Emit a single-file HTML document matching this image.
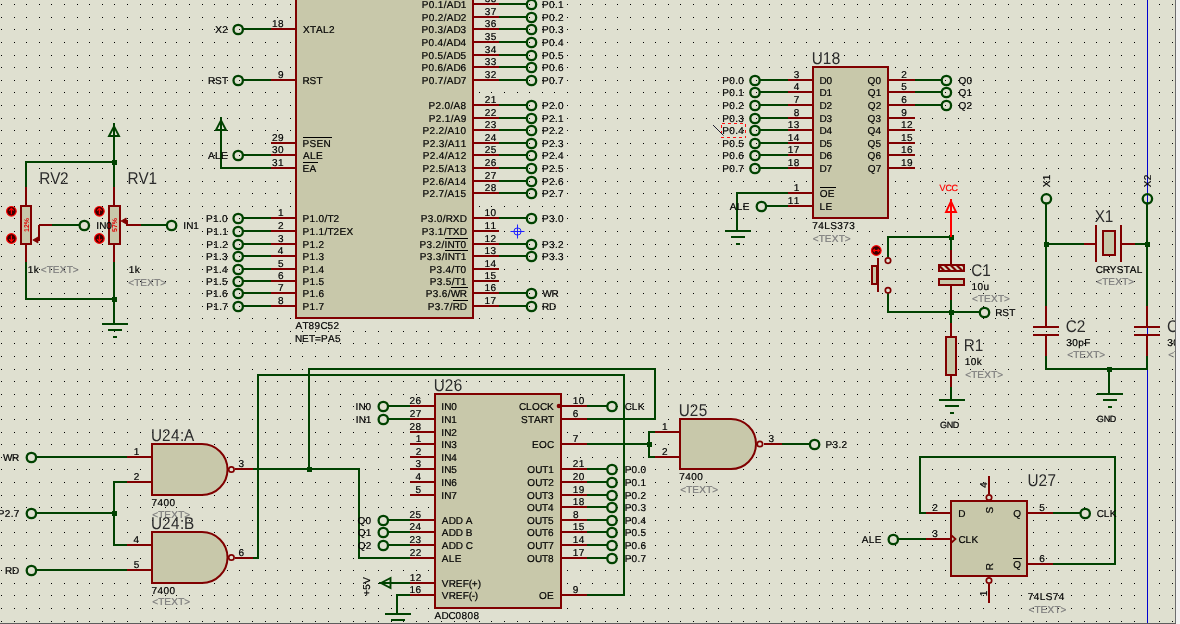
<!DOCTYPE html>
<html><head><meta charset="utf-8"><title>schematic</title>
<style>
html,body{margin:0;padding:0;background:#dfe0d0;overflow:hidden}
svg{display:block;font-family:"Liberation Sans", sans-serif;font-kerning:none;text-rendering:geometricPrecision}
</style></head><body>
<svg width="1180" height="624" viewBox="0 0 1180 624">
<rect x="0" y="0" width="1180" height="624" fill="#dfe0d0"/>
<g shape-rendering="crispEdges">
<path d="M1 4h1v1h-1zM14 4h1v1h-1zM26 4h1v1h-1zM39 4h1v1h-1zM51 4h1v1h-1zM64 4h1v1h-1zM77 4h1v1h-1zM89 4h1v1h-1zM102 4h1v1h-1zM114 4h1v1h-1zM127 4h1v1h-1zM140 4h1v1h-1zM152 4h1v1h-1zM165 4h1v1h-1zM176 4h1v1h-1zM189 4h1v1h-1zM202 4h1v1h-1zM214 4h1v1h-1zM227 4h1v1h-1zM239 4h1v1h-1zM252 4h1v1h-1zM265 4h1v1h-1zM277 4h1v1h-1zM290 4h1v1h-1zM302 4h1v1h-1zM315 4h1v1h-1zM328 4h1v1h-1zM340 4h1v1h-1zM353 4h1v1h-1zM365 4h1v1h-1zM378 4h1v1h-1zM391 4h1v1h-1zM403 4h1v1h-1zM416 4h1v1h-1zM428 4h1v1h-1zM441 4h1v1h-1zM454 4h1v1h-1zM466 4h1v1h-1zM479 4h1v1h-1zM491 4h1v1h-1zM504 4h1v1h-1zM517 4h1v1h-1zM529 4h1v1h-1zM542 4h1v1h-1zM554 4h1v1h-1zM567 4h1v1h-1zM580 4h1v1h-1zM592 4h1v1h-1zM605 4h1v1h-1zM617 4h1v1h-1zM630 4h1v1h-1zM643 4h1v1h-1zM655 4h1v1h-1zM668 4h1v1h-1zM680 4h1v1h-1zM693 4h1v1h-1zM706 4h1v1h-1zM718 4h1v1h-1zM731 4h1v1h-1zM743 4h1v1h-1zM756 4h1v1h-1zM769 4h1v1h-1zM781 4h1v1h-1zM794 4h1v1h-1zM806 4h1v1h-1zM819 4h1v1h-1zM832 4h1v1h-1zM844 4h1v1h-1zM857 4h1v1h-1zM869 4h1v1h-1zM882 4h1v1h-1zM895 4h1v1h-1zM907 4h1v1h-1zM920 4h1v1h-1zM932 4h1v1h-1zM945 4h1v1h-1zM958 4h1v1h-1zM970 4h1v1h-1zM983 4h1v1h-1zM995 4h1v1h-1zM1008 4h1v1h-1zM1021 4h1v1h-1zM1033 4h1v1h-1zM1046 4h1v1h-1zM1058 4h1v1h-1zM1071 4h1v1h-1zM1084 4h1v1h-1zM1096 4h1v1h-1zM1109 4h1v1h-1zM1121 4h1v1h-1zM1134 4h1v1h-1zM1147 4h1v1h-1zM1159 4h1v1h-1zM1172 4h1v1h-1zM1 17h1v1h-1zM14 17h1v1h-1zM26 17h1v1h-1zM39 17h1v1h-1zM51 17h1v1h-1zM64 17h1v1h-1zM77 17h1v1h-1zM89 17h1v1h-1zM102 17h1v1h-1zM114 17h1v1h-1zM127 17h1v1h-1zM140 17h1v1h-1zM152 17h1v1h-1zM165 17h1v1h-1zM176 17h1v1h-1zM189 17h1v1h-1zM202 17h1v1h-1zM214 17h1v1h-1zM227 17h1v1h-1zM239 17h1v1h-1zM252 17h1v1h-1zM265 17h1v1h-1zM277 17h1v1h-1zM290 17h1v1h-1zM302 17h1v1h-1zM315 17h1v1h-1zM328 17h1v1h-1zM340 17h1v1h-1zM353 17h1v1h-1zM365 17h1v1h-1zM378 17h1v1h-1zM391 17h1v1h-1zM403 17h1v1h-1zM416 17h1v1h-1zM428 17h1v1h-1zM441 17h1v1h-1zM454 17h1v1h-1zM466 17h1v1h-1zM479 17h1v1h-1zM491 17h1v1h-1zM504 17h1v1h-1zM517 17h1v1h-1zM529 17h1v1h-1zM542 17h1v1h-1zM554 17h1v1h-1zM567 17h1v1h-1zM580 17h1v1h-1zM592 17h1v1h-1zM605 17h1v1h-1zM617 17h1v1h-1zM630 17h1v1h-1zM643 17h1v1h-1zM655 17h1v1h-1zM668 17h1v1h-1zM680 17h1v1h-1zM693 17h1v1h-1zM706 17h1v1h-1zM718 17h1v1h-1zM731 17h1v1h-1zM743 17h1v1h-1zM756 17h1v1h-1zM769 17h1v1h-1zM781 17h1v1h-1zM794 17h1v1h-1zM806 17h1v1h-1zM819 17h1v1h-1zM832 17h1v1h-1zM844 17h1v1h-1zM857 17h1v1h-1zM869 17h1v1h-1zM882 17h1v1h-1zM895 17h1v1h-1zM907 17h1v1h-1zM920 17h1v1h-1zM932 17h1v1h-1zM945 17h1v1h-1zM958 17h1v1h-1zM970 17h1v1h-1zM983 17h1v1h-1zM995 17h1v1h-1zM1008 17h1v1h-1zM1021 17h1v1h-1zM1033 17h1v1h-1zM1046 17h1v1h-1zM1058 17h1v1h-1zM1071 17h1v1h-1zM1084 17h1v1h-1zM1096 17h1v1h-1zM1109 17h1v1h-1zM1121 17h1v1h-1zM1134 17h1v1h-1zM1147 17h1v1h-1zM1159 17h1v1h-1zM1172 17h1v1h-1zM1 29h1v1h-1zM14 29h1v1h-1zM26 29h1v1h-1zM39 29h1v1h-1zM51 29h1v1h-1zM64 29h1v1h-1zM77 29h1v1h-1zM89 29h1v1h-1zM102 29h1v1h-1zM114 29h1v1h-1zM127 29h1v1h-1zM140 29h1v1h-1zM152 29h1v1h-1zM165 29h1v1h-1zM176 29h1v1h-1zM189 29h1v1h-1zM202 29h1v1h-1zM214 29h1v1h-1zM227 29h1v1h-1zM239 29h1v1h-1zM252 29h1v1h-1zM265 29h1v1h-1zM277 29h1v1h-1zM290 29h1v1h-1zM302 29h1v1h-1zM315 29h1v1h-1zM328 29h1v1h-1zM340 29h1v1h-1zM353 29h1v1h-1zM365 29h1v1h-1zM378 29h1v1h-1zM391 29h1v1h-1zM403 29h1v1h-1zM416 29h1v1h-1zM428 29h1v1h-1zM441 29h1v1h-1zM454 29h1v1h-1zM466 29h1v1h-1zM479 29h1v1h-1zM491 29h1v1h-1zM504 29h1v1h-1zM517 29h1v1h-1zM529 29h1v1h-1zM542 29h1v1h-1zM554 29h1v1h-1zM567 29h1v1h-1zM580 29h1v1h-1zM592 29h1v1h-1zM605 29h1v1h-1zM617 29h1v1h-1zM630 29h1v1h-1zM643 29h1v1h-1zM655 29h1v1h-1zM668 29h1v1h-1zM680 29h1v1h-1zM693 29h1v1h-1zM706 29h1v1h-1zM718 29h1v1h-1zM731 29h1v1h-1zM743 29h1v1h-1zM756 29h1v1h-1zM769 29h1v1h-1zM781 29h1v1h-1zM794 29h1v1h-1zM806 29h1v1h-1zM819 29h1v1h-1zM832 29h1v1h-1zM844 29h1v1h-1zM857 29h1v1h-1zM869 29h1v1h-1zM882 29h1v1h-1zM895 29h1v1h-1zM907 29h1v1h-1zM920 29h1v1h-1zM932 29h1v1h-1zM945 29h1v1h-1zM958 29h1v1h-1zM970 29h1v1h-1zM983 29h1v1h-1zM995 29h1v1h-1zM1008 29h1v1h-1zM1021 29h1v1h-1zM1033 29h1v1h-1zM1046 29h1v1h-1zM1058 29h1v1h-1zM1071 29h1v1h-1zM1084 29h1v1h-1zM1096 29h1v1h-1zM1109 29h1v1h-1zM1121 29h1v1h-1zM1134 29h1v1h-1zM1147 29h1v1h-1zM1159 29h1v1h-1zM1172 29h1v1h-1zM1 42h1v1h-1zM14 42h1v1h-1zM26 42h1v1h-1zM39 42h1v1h-1zM51 42h1v1h-1zM64 42h1v1h-1zM77 42h1v1h-1zM89 42h1v1h-1zM102 42h1v1h-1zM114 42h1v1h-1zM127 42h1v1h-1zM140 42h1v1h-1zM152 42h1v1h-1zM165 42h1v1h-1zM176 42h1v1h-1zM189 42h1v1h-1zM202 42h1v1h-1zM214 42h1v1h-1zM227 42h1v1h-1zM239 42h1v1h-1zM252 42h1v1h-1zM265 42h1v1h-1zM277 42h1v1h-1zM290 42h1v1h-1zM302 42h1v1h-1zM315 42h1v1h-1zM328 42h1v1h-1zM340 42h1v1h-1zM353 42h1v1h-1zM365 42h1v1h-1zM378 42h1v1h-1zM391 42h1v1h-1zM403 42h1v1h-1zM416 42h1v1h-1zM428 42h1v1h-1zM441 42h1v1h-1zM454 42h1v1h-1zM466 42h1v1h-1zM479 42h1v1h-1zM491 42h1v1h-1zM504 42h1v1h-1zM517 42h1v1h-1zM529 42h1v1h-1zM542 42h1v1h-1zM554 42h1v1h-1zM567 42h1v1h-1zM580 42h1v1h-1zM592 42h1v1h-1zM605 42h1v1h-1zM617 42h1v1h-1zM630 42h1v1h-1zM643 42h1v1h-1zM655 42h1v1h-1zM668 42h1v1h-1zM680 42h1v1h-1zM693 42h1v1h-1zM706 42h1v1h-1zM718 42h1v1h-1zM731 42h1v1h-1zM743 42h1v1h-1zM756 42h1v1h-1zM769 42h1v1h-1zM781 42h1v1h-1zM794 42h1v1h-1zM806 42h1v1h-1zM819 42h1v1h-1zM832 42h1v1h-1zM844 42h1v1h-1zM857 42h1v1h-1zM869 42h1v1h-1zM882 42h1v1h-1zM895 42h1v1h-1zM907 42h1v1h-1zM920 42h1v1h-1zM932 42h1v1h-1zM945 42h1v1h-1zM958 42h1v1h-1zM970 42h1v1h-1zM983 42h1v1h-1zM995 42h1v1h-1zM1008 42h1v1h-1zM1021 42h1v1h-1zM1033 42h1v1h-1zM1046 42h1v1h-1zM1058 42h1v1h-1zM1071 42h1v1h-1zM1084 42h1v1h-1zM1096 42h1v1h-1zM1109 42h1v1h-1zM1121 42h1v1h-1zM1134 42h1v1h-1zM1147 42h1v1h-1zM1159 42h1v1h-1zM1172 42h1v1h-1zM1 55h1v1h-1zM14 55h1v1h-1zM26 55h1v1h-1zM39 55h1v1h-1zM51 55h1v1h-1zM64 55h1v1h-1zM77 55h1v1h-1zM89 55h1v1h-1zM102 55h1v1h-1zM114 55h1v1h-1zM127 55h1v1h-1zM140 55h1v1h-1zM152 55h1v1h-1zM165 55h1v1h-1zM176 55h1v1h-1zM189 55h1v1h-1zM202 55h1v1h-1zM214 55h1v1h-1zM227 55h1v1h-1zM239 55h1v1h-1zM252 55h1v1h-1zM265 55h1v1h-1zM277 55h1v1h-1zM290 55h1v1h-1zM302 55h1v1h-1zM315 55h1v1h-1zM328 55h1v1h-1zM340 55h1v1h-1zM353 55h1v1h-1zM365 55h1v1h-1zM378 55h1v1h-1zM391 55h1v1h-1zM403 55h1v1h-1zM416 55h1v1h-1zM428 55h1v1h-1zM441 55h1v1h-1zM454 55h1v1h-1zM466 55h1v1h-1zM479 55h1v1h-1zM491 55h1v1h-1zM504 55h1v1h-1zM517 55h1v1h-1zM529 55h1v1h-1zM542 55h1v1h-1zM554 55h1v1h-1zM567 55h1v1h-1zM580 55h1v1h-1zM592 55h1v1h-1zM605 55h1v1h-1zM617 55h1v1h-1zM630 55h1v1h-1zM643 55h1v1h-1zM655 55h1v1h-1zM668 55h1v1h-1zM680 55h1v1h-1zM693 55h1v1h-1zM706 55h1v1h-1zM718 55h1v1h-1zM731 55h1v1h-1zM743 55h1v1h-1zM756 55h1v1h-1zM769 55h1v1h-1zM781 55h1v1h-1zM794 55h1v1h-1zM806 55h1v1h-1zM819 55h1v1h-1zM832 55h1v1h-1zM844 55h1v1h-1zM857 55h1v1h-1zM869 55h1v1h-1zM882 55h1v1h-1zM895 55h1v1h-1zM907 55h1v1h-1zM920 55h1v1h-1zM932 55h1v1h-1zM945 55h1v1h-1zM958 55h1v1h-1zM970 55h1v1h-1zM983 55h1v1h-1zM995 55h1v1h-1zM1008 55h1v1h-1zM1021 55h1v1h-1zM1033 55h1v1h-1zM1046 55h1v1h-1zM1058 55h1v1h-1zM1071 55h1v1h-1zM1084 55h1v1h-1zM1096 55h1v1h-1zM1109 55h1v1h-1zM1121 55h1v1h-1zM1134 55h1v1h-1zM1147 55h1v1h-1zM1159 55h1v1h-1zM1172 55h1v1h-1zM1 67h1v1h-1zM14 67h1v1h-1zM26 67h1v1h-1zM39 67h1v1h-1zM51 67h1v1h-1zM64 67h1v1h-1zM77 67h1v1h-1zM89 67h1v1h-1zM102 67h1v1h-1zM114 67h1v1h-1zM127 67h1v1h-1zM140 67h1v1h-1zM152 67h1v1h-1zM165 67h1v1h-1zM176 67h1v1h-1zM189 67h1v1h-1zM202 67h1v1h-1zM214 67h1v1h-1zM227 67h1v1h-1zM239 67h1v1h-1zM252 67h1v1h-1zM265 67h1v1h-1zM277 67h1v1h-1zM290 67h1v1h-1zM302 67h1v1h-1zM315 67h1v1h-1zM328 67h1v1h-1zM340 67h1v1h-1zM353 67h1v1h-1zM365 67h1v1h-1zM378 67h1v1h-1zM391 67h1v1h-1zM403 67h1v1h-1zM416 67h1v1h-1zM428 67h1v1h-1zM441 67h1v1h-1zM454 67h1v1h-1zM466 67h1v1h-1zM479 67h1v1h-1zM491 67h1v1h-1zM504 67h1v1h-1zM517 67h1v1h-1zM529 67h1v1h-1zM542 67h1v1h-1zM554 67h1v1h-1zM567 67h1v1h-1zM580 67h1v1h-1zM592 67h1v1h-1zM605 67h1v1h-1zM617 67h1v1h-1zM630 67h1v1h-1zM643 67h1v1h-1zM655 67h1v1h-1zM668 67h1v1h-1zM680 67h1v1h-1zM693 67h1v1h-1zM706 67h1v1h-1zM718 67h1v1h-1zM731 67h1v1h-1zM743 67h1v1h-1zM756 67h1v1h-1zM769 67h1v1h-1zM781 67h1v1h-1zM794 67h1v1h-1zM806 67h1v1h-1zM819 67h1v1h-1zM832 67h1v1h-1zM844 67h1v1h-1zM857 67h1v1h-1zM869 67h1v1h-1zM882 67h1v1h-1zM895 67h1v1h-1zM907 67h1v1h-1zM920 67h1v1h-1zM932 67h1v1h-1zM945 67h1v1h-1zM958 67h1v1h-1zM970 67h1v1h-1zM983 67h1v1h-1zM995 67h1v1h-1zM1008 67h1v1h-1zM1021 67h1v1h-1zM1033 67h1v1h-1zM1046 67h1v1h-1zM1058 67h1v1h-1zM1071 67h1v1h-1zM1084 67h1v1h-1zM1096 67h1v1h-1zM1109 67h1v1h-1zM1121 67h1v1h-1zM1134 67h1v1h-1zM1147 67h1v1h-1zM1159 67h1v1h-1zM1172 67h1v1h-1zM1 80h1v1h-1zM14 80h1v1h-1zM26 80h1v1h-1zM39 80h1v1h-1zM51 80h1v1h-1zM64 80h1v1h-1zM77 80h1v1h-1zM89 80h1v1h-1zM102 80h1v1h-1zM114 80h1v1h-1zM127 80h1v1h-1zM140 80h1v1h-1zM152 80h1v1h-1zM165 80h1v1h-1zM176 80h1v1h-1zM189 80h1v1h-1zM202 80h1v1h-1zM214 80h1v1h-1zM227 80h1v1h-1zM239 80h1v1h-1zM252 80h1v1h-1zM265 80h1v1h-1zM277 80h1v1h-1zM290 80h1v1h-1zM302 80h1v1h-1zM315 80h1v1h-1zM328 80h1v1h-1zM340 80h1v1h-1zM353 80h1v1h-1zM365 80h1v1h-1zM378 80h1v1h-1zM391 80h1v1h-1zM403 80h1v1h-1zM416 80h1v1h-1zM428 80h1v1h-1zM441 80h1v1h-1zM454 80h1v1h-1zM466 80h1v1h-1zM479 80h1v1h-1zM491 80h1v1h-1zM504 80h1v1h-1zM517 80h1v1h-1zM529 80h1v1h-1zM542 80h1v1h-1zM554 80h1v1h-1zM567 80h1v1h-1zM580 80h1v1h-1zM592 80h1v1h-1zM605 80h1v1h-1zM617 80h1v1h-1zM630 80h1v1h-1zM643 80h1v1h-1zM655 80h1v1h-1zM668 80h1v1h-1zM680 80h1v1h-1zM693 80h1v1h-1zM706 80h1v1h-1zM718 80h1v1h-1zM731 80h1v1h-1zM743 80h1v1h-1zM756 80h1v1h-1zM769 80h1v1h-1zM781 80h1v1h-1zM794 80h1v1h-1zM806 80h1v1h-1zM819 80h1v1h-1zM832 80h1v1h-1zM844 80h1v1h-1zM857 80h1v1h-1zM869 80h1v1h-1zM882 80h1v1h-1zM895 80h1v1h-1zM907 80h1v1h-1zM920 80h1v1h-1zM932 80h1v1h-1zM945 80h1v1h-1zM958 80h1v1h-1zM970 80h1v1h-1zM983 80h1v1h-1zM995 80h1v1h-1zM1008 80h1v1h-1zM1021 80h1v1h-1zM1033 80h1v1h-1zM1046 80h1v1h-1zM1058 80h1v1h-1zM1071 80h1v1h-1zM1084 80h1v1h-1zM1096 80h1v1h-1zM1109 80h1v1h-1zM1121 80h1v1h-1zM1134 80h1v1h-1zM1147 80h1v1h-1zM1159 80h1v1h-1zM1172 80h1v1h-1zM1 92h1v1h-1zM14 92h1v1h-1zM26 92h1v1h-1zM39 92h1v1h-1zM51 92h1v1h-1zM64 92h1v1h-1zM77 92h1v1h-1zM89 92h1v1h-1zM102 92h1v1h-1zM114 92h1v1h-1zM127 92h1v1h-1zM140 92h1v1h-1zM152 92h1v1h-1zM165 92h1v1h-1zM176 92h1v1h-1zM189 92h1v1h-1zM202 92h1v1h-1zM214 92h1v1h-1zM227 92h1v1h-1zM239 92h1v1h-1zM252 92h1v1h-1zM265 92h1v1h-1zM277 92h1v1h-1zM290 92h1v1h-1zM302 92h1v1h-1zM315 92h1v1h-1zM328 92h1v1h-1zM340 92h1v1h-1zM353 92h1v1h-1zM365 92h1v1h-1zM378 92h1v1h-1zM391 92h1v1h-1zM403 92h1v1h-1zM416 92h1v1h-1zM428 92h1v1h-1zM441 92h1v1h-1zM454 92h1v1h-1zM466 92h1v1h-1zM479 92h1v1h-1zM491 92h1v1h-1zM504 92h1v1h-1zM517 92h1v1h-1zM529 92h1v1h-1zM542 92h1v1h-1zM554 92h1v1h-1zM567 92h1v1h-1zM580 92h1v1h-1zM592 92h1v1h-1zM605 92h1v1h-1zM617 92h1v1h-1zM630 92h1v1h-1zM643 92h1v1h-1zM655 92h1v1h-1zM668 92h1v1h-1zM680 92h1v1h-1zM693 92h1v1h-1zM706 92h1v1h-1zM718 92h1v1h-1zM731 92h1v1h-1zM743 92h1v1h-1zM756 92h1v1h-1zM769 92h1v1h-1zM781 92h1v1h-1zM794 92h1v1h-1zM806 92h1v1h-1zM819 92h1v1h-1zM832 92h1v1h-1zM844 92h1v1h-1zM857 92h1v1h-1zM869 92h1v1h-1zM882 92h1v1h-1zM895 92h1v1h-1zM907 92h1v1h-1zM920 92h1v1h-1zM932 92h1v1h-1zM945 92h1v1h-1zM958 92h1v1h-1zM970 92h1v1h-1zM983 92h1v1h-1zM995 92h1v1h-1zM1008 92h1v1h-1zM1021 92h1v1h-1zM1033 92h1v1h-1zM1046 92h1v1h-1zM1058 92h1v1h-1zM1071 92h1v1h-1zM1084 92h1v1h-1zM1096 92h1v1h-1zM1109 92h1v1h-1zM1121 92h1v1h-1zM1134 92h1v1h-1zM1147 92h1v1h-1zM1159 92h1v1h-1zM1172 92h1v1h-1zM1 105h1v1h-1zM14 105h1v1h-1zM26 105h1v1h-1zM39 105h1v1h-1zM51 105h1v1h-1zM64 105h1v1h-1zM77 105h1v1h-1zM89 105h1v1h-1zM102 105h1v1h-1zM114 105h1v1h-1zM127 105h1v1h-1zM140 105h1v1h-1zM152 105h1v1h-1zM165 105h1v1h-1zM176 105h1v1h-1zM189 105h1v1h-1zM202 105h1v1h-1zM214 105h1v1h-1zM227 105h1v1h-1zM239 105h1v1h-1zM252 105h1v1h-1zM265 105h1v1h-1zM277 105h1v1h-1zM290 105h1v1h-1zM302 105h1v1h-1zM315 105h1v1h-1zM328 105h1v1h-1zM340 105h1v1h-1zM353 105h1v1h-1zM365 105h1v1h-1zM378 105h1v1h-1zM391 105h1v1h-1zM403 105h1v1h-1zM416 105h1v1h-1zM428 105h1v1h-1zM441 105h1v1h-1zM454 105h1v1h-1zM466 105h1v1h-1zM479 105h1v1h-1zM491 105h1v1h-1zM504 105h1v1h-1zM517 105h1v1h-1zM529 105h1v1h-1zM542 105h1v1h-1zM554 105h1v1h-1zM567 105h1v1h-1zM580 105h1v1h-1zM592 105h1v1h-1zM605 105h1v1h-1zM617 105h1v1h-1zM630 105h1v1h-1zM643 105h1v1h-1zM655 105h1v1h-1zM668 105h1v1h-1zM680 105h1v1h-1zM693 105h1v1h-1zM706 105h1v1h-1zM718 105h1v1h-1zM731 105h1v1h-1zM743 105h1v1h-1zM756 105h1v1h-1zM769 105h1v1h-1zM781 105h1v1h-1zM794 105h1v1h-1zM806 105h1v1h-1zM819 105h1v1h-1zM832 105h1v1h-1zM844 105h1v1h-1zM857 105h1v1h-1zM869 105h1v1h-1zM882 105h1v1h-1zM895 105h1v1h-1zM907 105h1v1h-1zM920 105h1v1h-1zM932 105h1v1h-1zM945 105h1v1h-1zM958 105h1v1h-1zM970 105h1v1h-1zM983 105h1v1h-1zM995 105h1v1h-1zM1008 105h1v1h-1zM1021 105h1v1h-1zM1033 105h1v1h-1zM1046 105h1v1h-1zM1058 105h1v1h-1zM1071 105h1v1h-1zM1084 105h1v1h-1zM1096 105h1v1h-1zM1109 105h1v1h-1zM1121 105h1v1h-1zM1134 105h1v1h-1zM1147 105h1v1h-1zM1159 105h1v1h-1zM1172 105h1v1h-1zM1 118h1v1h-1zM14 118h1v1h-1zM26 118h1v1h-1zM39 118h1v1h-1zM51 118h1v1h-1zM64 118h1v1h-1zM77 118h1v1h-1zM89 118h1v1h-1zM102 118h1v1h-1zM114 118h1v1h-1zM127 118h1v1h-1zM140 118h1v1h-1zM152 118h1v1h-1zM165 118h1v1h-1zM176 118h1v1h-1zM189 118h1v1h-1zM202 118h1v1h-1zM214 118h1v1h-1zM227 118h1v1h-1zM239 118h1v1h-1zM252 118h1v1h-1zM265 118h1v1h-1zM277 118h1v1h-1zM290 118h1v1h-1zM302 118h1v1h-1zM315 118h1v1h-1zM328 118h1v1h-1zM340 118h1v1h-1zM353 118h1v1h-1zM365 118h1v1h-1zM378 118h1v1h-1zM391 118h1v1h-1zM403 118h1v1h-1zM416 118h1v1h-1zM428 118h1v1h-1zM441 118h1v1h-1zM454 118h1v1h-1zM466 118h1v1h-1zM479 118h1v1h-1zM491 118h1v1h-1zM504 118h1v1h-1zM517 118h1v1h-1zM529 118h1v1h-1zM542 118h1v1h-1zM554 118h1v1h-1zM567 118h1v1h-1zM580 118h1v1h-1zM592 118h1v1h-1zM605 118h1v1h-1zM617 118h1v1h-1zM630 118h1v1h-1zM643 118h1v1h-1zM655 118h1v1h-1zM668 118h1v1h-1zM680 118h1v1h-1zM693 118h1v1h-1zM706 118h1v1h-1zM718 118h1v1h-1zM731 118h1v1h-1zM743 118h1v1h-1zM756 118h1v1h-1zM769 118h1v1h-1zM781 118h1v1h-1zM794 118h1v1h-1zM806 118h1v1h-1zM819 118h1v1h-1zM832 118h1v1h-1zM844 118h1v1h-1zM857 118h1v1h-1zM869 118h1v1h-1zM882 118h1v1h-1zM895 118h1v1h-1zM907 118h1v1h-1zM920 118h1v1h-1zM932 118h1v1h-1zM945 118h1v1h-1zM958 118h1v1h-1zM970 118h1v1h-1zM983 118h1v1h-1zM995 118h1v1h-1zM1008 118h1v1h-1zM1021 118h1v1h-1zM1033 118h1v1h-1zM1046 118h1v1h-1zM1058 118h1v1h-1zM1071 118h1v1h-1zM1084 118h1v1h-1zM1096 118h1v1h-1zM1109 118h1v1h-1zM1121 118h1v1h-1zM1134 118h1v1h-1zM1147 118h1v1h-1zM1159 118h1v1h-1zM1172 118h1v1h-1zM1 130h1v1h-1zM14 130h1v1h-1zM26 130h1v1h-1zM39 130h1v1h-1zM51 130h1v1h-1zM64 130h1v1h-1zM77 130h1v1h-1zM89 130h1v1h-1zM102 130h1v1h-1zM114 130h1v1h-1zM127 130h1v1h-1zM140 130h1v1h-1zM152 130h1v1h-1zM165 130h1v1h-1zM176 130h1v1h-1zM189 130h1v1h-1zM202 130h1v1h-1zM214 130h1v1h-1zM227 130h1v1h-1zM239 130h1v1h-1zM252 130h1v1h-1zM265 130h1v1h-1zM277 130h1v1h-1zM290 130h1v1h-1zM302 130h1v1h-1zM315 130h1v1h-1zM328 130h1v1h-1zM340 130h1v1h-1zM353 130h1v1h-1zM365 130h1v1h-1zM378 130h1v1h-1zM391 130h1v1h-1zM403 130h1v1h-1zM416 130h1v1h-1zM428 130h1v1h-1zM441 130h1v1h-1zM454 130h1v1h-1zM466 130h1v1h-1zM479 130h1v1h-1zM491 130h1v1h-1zM504 130h1v1h-1zM517 130h1v1h-1zM529 130h1v1h-1zM542 130h1v1h-1zM554 130h1v1h-1zM567 130h1v1h-1zM580 130h1v1h-1zM592 130h1v1h-1zM605 130h1v1h-1zM617 130h1v1h-1zM630 130h1v1h-1zM643 130h1v1h-1zM655 130h1v1h-1zM668 130h1v1h-1zM680 130h1v1h-1zM693 130h1v1h-1zM706 130h1v1h-1zM718 130h1v1h-1zM731 130h1v1h-1zM743 130h1v1h-1zM756 130h1v1h-1zM769 130h1v1h-1zM781 130h1v1h-1zM794 130h1v1h-1zM806 130h1v1h-1zM819 130h1v1h-1zM832 130h1v1h-1zM844 130h1v1h-1zM857 130h1v1h-1zM869 130h1v1h-1zM882 130h1v1h-1zM895 130h1v1h-1zM907 130h1v1h-1zM920 130h1v1h-1zM932 130h1v1h-1zM945 130h1v1h-1zM958 130h1v1h-1zM970 130h1v1h-1zM983 130h1v1h-1zM995 130h1v1h-1zM1008 130h1v1h-1zM1021 130h1v1h-1zM1033 130h1v1h-1zM1046 130h1v1h-1zM1058 130h1v1h-1zM1071 130h1v1h-1zM1084 130h1v1h-1zM1096 130h1v1h-1zM1109 130h1v1h-1zM1121 130h1v1h-1zM1134 130h1v1h-1zM1147 130h1v1h-1zM1159 130h1v1h-1zM1172 130h1v1h-1zM1 143h1v1h-1zM14 143h1v1h-1zM26 143h1v1h-1zM39 143h1v1h-1zM51 143h1v1h-1zM64 143h1v1h-1zM77 143h1v1h-1zM89 143h1v1h-1zM102 143h1v1h-1zM114 143h1v1h-1zM127 143h1v1h-1zM140 143h1v1h-1zM152 143h1v1h-1zM165 143h1v1h-1zM176 143h1v1h-1zM189 143h1v1h-1zM202 143h1v1h-1zM214 143h1v1h-1zM227 143h1v1h-1zM239 143h1v1h-1zM252 143h1v1h-1zM265 143h1v1h-1zM277 143h1v1h-1zM290 143h1v1h-1zM302 143h1v1h-1zM315 143h1v1h-1zM328 143h1v1h-1zM340 143h1v1h-1zM353 143h1v1h-1zM365 143h1v1h-1zM378 143h1v1h-1zM391 143h1v1h-1zM403 143h1v1h-1zM416 143h1v1h-1zM428 143h1v1h-1zM441 143h1v1h-1zM454 143h1v1h-1zM466 143h1v1h-1zM479 143h1v1h-1zM491 143h1v1h-1zM504 143h1v1h-1zM517 143h1v1h-1zM529 143h1v1h-1zM542 143h1v1h-1zM554 143h1v1h-1zM567 143h1v1h-1zM580 143h1v1h-1zM592 143h1v1h-1zM605 143h1v1h-1zM617 143h1v1h-1zM630 143h1v1h-1zM643 143h1v1h-1zM655 143h1v1h-1zM668 143h1v1h-1zM680 143h1v1h-1zM693 143h1v1h-1zM706 143h1v1h-1zM718 143h1v1h-1zM731 143h1v1h-1zM743 143h1v1h-1zM756 143h1v1h-1zM769 143h1v1h-1zM781 143h1v1h-1zM794 143h1v1h-1zM806 143h1v1h-1zM819 143h1v1h-1zM832 143h1v1h-1zM844 143h1v1h-1zM857 143h1v1h-1zM869 143h1v1h-1zM882 143h1v1h-1zM895 143h1v1h-1zM907 143h1v1h-1zM920 143h1v1h-1zM932 143h1v1h-1zM945 143h1v1h-1zM958 143h1v1h-1zM970 143h1v1h-1zM983 143h1v1h-1zM995 143h1v1h-1zM1008 143h1v1h-1zM1021 143h1v1h-1zM1033 143h1v1h-1zM1046 143h1v1h-1zM1058 143h1v1h-1zM1071 143h1v1h-1zM1084 143h1v1h-1zM1096 143h1v1h-1zM1109 143h1v1h-1zM1121 143h1v1h-1zM1134 143h1v1h-1zM1147 143h1v1h-1zM1159 143h1v1h-1zM1172 143h1v1h-1zM1 155h1v1h-1zM14 155h1v1h-1zM26 155h1v1h-1zM39 155h1v1h-1zM51 155h1v1h-1zM64 155h1v1h-1zM77 155h1v1h-1zM89 155h1v1h-1zM102 155h1v1h-1zM114 155h1v1h-1zM127 155h1v1h-1zM140 155h1v1h-1zM152 155h1v1h-1zM165 155h1v1h-1zM176 155h1v1h-1zM189 155h1v1h-1zM202 155h1v1h-1zM214 155h1v1h-1zM227 155h1v1h-1zM239 155h1v1h-1zM252 155h1v1h-1zM265 155h1v1h-1zM277 155h1v1h-1zM290 155h1v1h-1zM302 155h1v1h-1zM315 155h1v1h-1zM328 155h1v1h-1zM340 155h1v1h-1zM353 155h1v1h-1zM365 155h1v1h-1zM378 155h1v1h-1zM391 155h1v1h-1zM403 155h1v1h-1zM416 155h1v1h-1zM428 155h1v1h-1zM441 155h1v1h-1zM454 155h1v1h-1zM466 155h1v1h-1zM479 155h1v1h-1zM491 155h1v1h-1zM504 155h1v1h-1zM517 155h1v1h-1zM529 155h1v1h-1zM542 155h1v1h-1zM554 155h1v1h-1zM567 155h1v1h-1zM580 155h1v1h-1zM592 155h1v1h-1zM605 155h1v1h-1zM617 155h1v1h-1zM630 155h1v1h-1zM643 155h1v1h-1zM655 155h1v1h-1zM668 155h1v1h-1zM680 155h1v1h-1zM693 155h1v1h-1zM706 155h1v1h-1zM718 155h1v1h-1zM731 155h1v1h-1zM743 155h1v1h-1zM756 155h1v1h-1zM769 155h1v1h-1zM781 155h1v1h-1zM794 155h1v1h-1zM806 155h1v1h-1zM819 155h1v1h-1zM832 155h1v1h-1zM844 155h1v1h-1zM857 155h1v1h-1zM869 155h1v1h-1zM882 155h1v1h-1zM895 155h1v1h-1zM907 155h1v1h-1zM920 155h1v1h-1zM932 155h1v1h-1zM945 155h1v1h-1zM958 155h1v1h-1zM970 155h1v1h-1zM983 155h1v1h-1zM995 155h1v1h-1zM1008 155h1v1h-1zM1021 155h1v1h-1zM1033 155h1v1h-1zM1046 155h1v1h-1zM1058 155h1v1h-1zM1071 155h1v1h-1zM1084 155h1v1h-1zM1096 155h1v1h-1zM1109 155h1v1h-1zM1121 155h1v1h-1zM1134 155h1v1h-1zM1147 155h1v1h-1zM1159 155h1v1h-1zM1172 155h1v1h-1zM1 168h1v1h-1zM14 168h1v1h-1zM26 168h1v1h-1zM39 168h1v1h-1zM51 168h1v1h-1zM64 168h1v1h-1zM77 168h1v1h-1zM89 168h1v1h-1zM102 168h1v1h-1zM114 168h1v1h-1zM127 168h1v1h-1zM140 168h1v1h-1zM152 168h1v1h-1zM165 168h1v1h-1zM176 168h1v1h-1zM189 168h1v1h-1zM202 168h1v1h-1zM214 168h1v1h-1zM227 168h1v1h-1zM239 168h1v1h-1zM252 168h1v1h-1zM265 168h1v1h-1zM277 168h1v1h-1zM290 168h1v1h-1zM302 168h1v1h-1zM315 168h1v1h-1zM328 168h1v1h-1zM340 168h1v1h-1zM353 168h1v1h-1zM365 168h1v1h-1zM378 168h1v1h-1zM391 168h1v1h-1zM403 168h1v1h-1zM416 168h1v1h-1zM428 168h1v1h-1zM441 168h1v1h-1zM454 168h1v1h-1zM466 168h1v1h-1zM479 168h1v1h-1zM491 168h1v1h-1zM504 168h1v1h-1zM517 168h1v1h-1zM529 168h1v1h-1zM542 168h1v1h-1zM554 168h1v1h-1zM567 168h1v1h-1zM580 168h1v1h-1zM592 168h1v1h-1zM605 168h1v1h-1zM617 168h1v1h-1zM630 168h1v1h-1zM643 168h1v1h-1zM655 168h1v1h-1zM668 168h1v1h-1zM680 168h1v1h-1zM693 168h1v1h-1zM706 168h1v1h-1zM718 168h1v1h-1zM731 168h1v1h-1zM743 168h1v1h-1zM756 168h1v1h-1zM769 168h1v1h-1zM781 168h1v1h-1zM794 168h1v1h-1zM806 168h1v1h-1zM819 168h1v1h-1zM832 168h1v1h-1zM844 168h1v1h-1zM857 168h1v1h-1zM869 168h1v1h-1zM882 168h1v1h-1zM895 168h1v1h-1zM907 168h1v1h-1zM920 168h1v1h-1zM932 168h1v1h-1zM945 168h1v1h-1zM958 168h1v1h-1zM970 168h1v1h-1zM983 168h1v1h-1zM995 168h1v1h-1zM1008 168h1v1h-1zM1021 168h1v1h-1zM1033 168h1v1h-1zM1046 168h1v1h-1zM1058 168h1v1h-1zM1071 168h1v1h-1zM1084 168h1v1h-1zM1096 168h1v1h-1zM1109 168h1v1h-1zM1121 168h1v1h-1zM1134 168h1v1h-1zM1147 168h1v1h-1zM1159 168h1v1h-1zM1172 168h1v1h-1zM1 181h1v1h-1zM14 181h1v1h-1zM26 181h1v1h-1zM39 181h1v1h-1zM51 181h1v1h-1zM64 181h1v1h-1zM77 181h1v1h-1zM89 181h1v1h-1zM102 181h1v1h-1zM114 181h1v1h-1zM127 181h1v1h-1zM140 181h1v1h-1zM152 181h1v1h-1zM165 181h1v1h-1zM176 181h1v1h-1zM189 181h1v1h-1zM202 181h1v1h-1zM214 181h1v1h-1zM227 181h1v1h-1zM239 181h1v1h-1zM252 181h1v1h-1zM265 181h1v1h-1zM277 181h1v1h-1zM290 181h1v1h-1zM302 181h1v1h-1zM315 181h1v1h-1zM328 181h1v1h-1zM340 181h1v1h-1zM353 181h1v1h-1zM365 181h1v1h-1zM378 181h1v1h-1zM391 181h1v1h-1zM403 181h1v1h-1zM416 181h1v1h-1zM428 181h1v1h-1zM441 181h1v1h-1zM454 181h1v1h-1zM466 181h1v1h-1zM479 181h1v1h-1zM491 181h1v1h-1zM504 181h1v1h-1zM517 181h1v1h-1zM529 181h1v1h-1zM542 181h1v1h-1zM554 181h1v1h-1zM567 181h1v1h-1zM580 181h1v1h-1zM592 181h1v1h-1zM605 181h1v1h-1zM617 181h1v1h-1zM630 181h1v1h-1zM643 181h1v1h-1zM655 181h1v1h-1zM668 181h1v1h-1zM680 181h1v1h-1zM693 181h1v1h-1zM706 181h1v1h-1zM718 181h1v1h-1zM731 181h1v1h-1zM743 181h1v1h-1zM756 181h1v1h-1zM769 181h1v1h-1zM781 181h1v1h-1zM794 181h1v1h-1zM806 181h1v1h-1zM819 181h1v1h-1zM832 181h1v1h-1zM844 181h1v1h-1zM857 181h1v1h-1zM869 181h1v1h-1zM882 181h1v1h-1zM895 181h1v1h-1zM907 181h1v1h-1zM920 181h1v1h-1zM932 181h1v1h-1zM945 181h1v1h-1zM958 181h1v1h-1zM970 181h1v1h-1zM983 181h1v1h-1zM995 181h1v1h-1zM1008 181h1v1h-1zM1021 181h1v1h-1zM1033 181h1v1h-1zM1046 181h1v1h-1zM1058 181h1v1h-1zM1071 181h1v1h-1zM1084 181h1v1h-1zM1096 181h1v1h-1zM1109 181h1v1h-1zM1121 181h1v1h-1zM1134 181h1v1h-1zM1147 181h1v1h-1zM1159 181h1v1h-1zM1172 181h1v1h-1zM1 193h1v1h-1zM14 193h1v1h-1zM26 193h1v1h-1zM39 193h1v1h-1zM51 193h1v1h-1zM64 193h1v1h-1zM77 193h1v1h-1zM89 193h1v1h-1zM102 193h1v1h-1zM114 193h1v1h-1zM127 193h1v1h-1zM140 193h1v1h-1zM152 193h1v1h-1zM165 193h1v1h-1zM176 193h1v1h-1zM189 193h1v1h-1zM202 193h1v1h-1zM214 193h1v1h-1zM227 193h1v1h-1zM239 193h1v1h-1zM252 193h1v1h-1zM265 193h1v1h-1zM277 193h1v1h-1zM290 193h1v1h-1zM302 193h1v1h-1zM315 193h1v1h-1zM328 193h1v1h-1zM340 193h1v1h-1zM353 193h1v1h-1zM365 193h1v1h-1zM378 193h1v1h-1zM391 193h1v1h-1zM403 193h1v1h-1zM416 193h1v1h-1zM428 193h1v1h-1zM441 193h1v1h-1zM454 193h1v1h-1zM466 193h1v1h-1zM479 193h1v1h-1zM491 193h1v1h-1zM504 193h1v1h-1zM517 193h1v1h-1zM529 193h1v1h-1zM542 193h1v1h-1zM554 193h1v1h-1zM567 193h1v1h-1zM580 193h1v1h-1zM592 193h1v1h-1zM605 193h1v1h-1zM617 193h1v1h-1zM630 193h1v1h-1zM643 193h1v1h-1zM655 193h1v1h-1zM668 193h1v1h-1zM680 193h1v1h-1zM693 193h1v1h-1zM706 193h1v1h-1zM718 193h1v1h-1zM731 193h1v1h-1zM743 193h1v1h-1zM756 193h1v1h-1zM769 193h1v1h-1zM781 193h1v1h-1zM794 193h1v1h-1zM806 193h1v1h-1zM819 193h1v1h-1zM832 193h1v1h-1zM844 193h1v1h-1zM857 193h1v1h-1zM869 193h1v1h-1zM882 193h1v1h-1zM895 193h1v1h-1zM907 193h1v1h-1zM920 193h1v1h-1zM932 193h1v1h-1zM945 193h1v1h-1zM958 193h1v1h-1zM970 193h1v1h-1zM983 193h1v1h-1zM995 193h1v1h-1zM1008 193h1v1h-1zM1021 193h1v1h-1zM1033 193h1v1h-1zM1046 193h1v1h-1zM1058 193h1v1h-1zM1071 193h1v1h-1zM1084 193h1v1h-1zM1096 193h1v1h-1zM1109 193h1v1h-1zM1121 193h1v1h-1zM1134 193h1v1h-1zM1147 193h1v1h-1zM1159 193h1v1h-1zM1172 193h1v1h-1zM1 206h1v1h-1zM14 206h1v1h-1zM26 206h1v1h-1zM39 206h1v1h-1zM51 206h1v1h-1zM64 206h1v1h-1zM77 206h1v1h-1zM89 206h1v1h-1zM102 206h1v1h-1zM114 206h1v1h-1zM127 206h1v1h-1zM140 206h1v1h-1zM152 206h1v1h-1zM165 206h1v1h-1zM176 206h1v1h-1zM189 206h1v1h-1zM202 206h1v1h-1zM214 206h1v1h-1zM227 206h1v1h-1zM239 206h1v1h-1zM252 206h1v1h-1zM265 206h1v1h-1zM277 206h1v1h-1zM290 206h1v1h-1zM302 206h1v1h-1zM315 206h1v1h-1zM328 206h1v1h-1zM340 206h1v1h-1zM353 206h1v1h-1zM365 206h1v1h-1zM378 206h1v1h-1zM391 206h1v1h-1zM403 206h1v1h-1zM416 206h1v1h-1zM428 206h1v1h-1zM441 206h1v1h-1zM454 206h1v1h-1zM466 206h1v1h-1zM479 206h1v1h-1zM491 206h1v1h-1zM504 206h1v1h-1zM517 206h1v1h-1zM529 206h1v1h-1zM542 206h1v1h-1zM554 206h1v1h-1zM567 206h1v1h-1zM580 206h1v1h-1zM592 206h1v1h-1zM605 206h1v1h-1zM617 206h1v1h-1zM630 206h1v1h-1zM643 206h1v1h-1zM655 206h1v1h-1zM668 206h1v1h-1zM680 206h1v1h-1zM693 206h1v1h-1zM706 206h1v1h-1zM718 206h1v1h-1zM731 206h1v1h-1zM743 206h1v1h-1zM756 206h1v1h-1zM769 206h1v1h-1zM781 206h1v1h-1zM794 206h1v1h-1zM806 206h1v1h-1zM819 206h1v1h-1zM832 206h1v1h-1zM844 206h1v1h-1zM857 206h1v1h-1zM869 206h1v1h-1zM882 206h1v1h-1zM895 206h1v1h-1zM907 206h1v1h-1zM920 206h1v1h-1zM932 206h1v1h-1zM945 206h1v1h-1zM958 206h1v1h-1zM970 206h1v1h-1zM983 206h1v1h-1zM995 206h1v1h-1zM1008 206h1v1h-1zM1021 206h1v1h-1zM1033 206h1v1h-1zM1046 206h1v1h-1zM1058 206h1v1h-1zM1071 206h1v1h-1zM1084 206h1v1h-1zM1096 206h1v1h-1zM1109 206h1v1h-1zM1121 206h1v1h-1zM1134 206h1v1h-1zM1147 206h1v1h-1zM1159 206h1v1h-1zM1172 206h1v1h-1zM1 218h1v1h-1zM14 218h1v1h-1zM26 218h1v1h-1zM39 218h1v1h-1zM51 218h1v1h-1zM64 218h1v1h-1zM77 218h1v1h-1zM89 218h1v1h-1zM102 218h1v1h-1zM114 218h1v1h-1zM127 218h1v1h-1zM140 218h1v1h-1zM152 218h1v1h-1zM165 218h1v1h-1zM176 218h1v1h-1zM189 218h1v1h-1zM202 218h1v1h-1zM214 218h1v1h-1zM227 218h1v1h-1zM239 218h1v1h-1zM252 218h1v1h-1zM265 218h1v1h-1zM277 218h1v1h-1zM290 218h1v1h-1zM302 218h1v1h-1zM315 218h1v1h-1zM328 218h1v1h-1zM340 218h1v1h-1zM353 218h1v1h-1zM365 218h1v1h-1zM378 218h1v1h-1zM391 218h1v1h-1zM403 218h1v1h-1zM416 218h1v1h-1zM428 218h1v1h-1zM441 218h1v1h-1zM454 218h1v1h-1zM466 218h1v1h-1zM479 218h1v1h-1zM491 218h1v1h-1zM504 218h1v1h-1zM517 218h1v1h-1zM529 218h1v1h-1zM542 218h1v1h-1zM554 218h1v1h-1zM567 218h1v1h-1zM580 218h1v1h-1zM592 218h1v1h-1zM605 218h1v1h-1zM617 218h1v1h-1zM630 218h1v1h-1zM643 218h1v1h-1zM655 218h1v1h-1zM668 218h1v1h-1zM680 218h1v1h-1zM693 218h1v1h-1zM706 218h1v1h-1zM718 218h1v1h-1zM731 218h1v1h-1zM743 218h1v1h-1zM756 218h1v1h-1zM769 218h1v1h-1zM781 218h1v1h-1zM794 218h1v1h-1zM806 218h1v1h-1zM819 218h1v1h-1zM832 218h1v1h-1zM844 218h1v1h-1zM857 218h1v1h-1zM869 218h1v1h-1zM882 218h1v1h-1zM895 218h1v1h-1zM907 218h1v1h-1zM920 218h1v1h-1zM932 218h1v1h-1zM945 218h1v1h-1zM958 218h1v1h-1zM970 218h1v1h-1zM983 218h1v1h-1zM995 218h1v1h-1zM1008 218h1v1h-1zM1021 218h1v1h-1zM1033 218h1v1h-1zM1046 218h1v1h-1zM1058 218h1v1h-1zM1071 218h1v1h-1zM1084 218h1v1h-1zM1096 218h1v1h-1zM1109 218h1v1h-1zM1121 218h1v1h-1zM1134 218h1v1h-1zM1147 218h1v1h-1zM1159 218h1v1h-1zM1172 218h1v1h-1zM1 231h1v1h-1zM14 231h1v1h-1zM26 231h1v1h-1zM39 231h1v1h-1zM51 231h1v1h-1zM64 231h1v1h-1zM77 231h1v1h-1zM89 231h1v1h-1zM102 231h1v1h-1zM114 231h1v1h-1zM127 231h1v1h-1zM140 231h1v1h-1zM152 231h1v1h-1zM165 231h1v1h-1zM176 231h1v1h-1zM189 231h1v1h-1zM202 231h1v1h-1zM214 231h1v1h-1zM227 231h1v1h-1zM239 231h1v1h-1zM252 231h1v1h-1zM265 231h1v1h-1zM277 231h1v1h-1zM290 231h1v1h-1zM302 231h1v1h-1zM315 231h1v1h-1zM328 231h1v1h-1zM340 231h1v1h-1zM353 231h1v1h-1zM365 231h1v1h-1zM378 231h1v1h-1zM391 231h1v1h-1zM403 231h1v1h-1zM416 231h1v1h-1zM428 231h1v1h-1zM441 231h1v1h-1zM454 231h1v1h-1zM466 231h1v1h-1zM479 231h1v1h-1zM491 231h1v1h-1zM504 231h1v1h-1zM517 231h1v1h-1zM529 231h1v1h-1zM542 231h1v1h-1zM554 231h1v1h-1zM567 231h1v1h-1zM580 231h1v1h-1zM592 231h1v1h-1zM605 231h1v1h-1zM617 231h1v1h-1zM630 231h1v1h-1zM643 231h1v1h-1zM655 231h1v1h-1zM668 231h1v1h-1zM680 231h1v1h-1zM693 231h1v1h-1zM706 231h1v1h-1zM718 231h1v1h-1zM731 231h1v1h-1zM743 231h1v1h-1zM756 231h1v1h-1zM769 231h1v1h-1zM781 231h1v1h-1zM794 231h1v1h-1zM806 231h1v1h-1zM819 231h1v1h-1zM832 231h1v1h-1zM844 231h1v1h-1zM857 231h1v1h-1zM869 231h1v1h-1zM882 231h1v1h-1zM895 231h1v1h-1zM907 231h1v1h-1zM920 231h1v1h-1zM932 231h1v1h-1zM945 231h1v1h-1zM958 231h1v1h-1zM970 231h1v1h-1zM983 231h1v1h-1zM995 231h1v1h-1zM1008 231h1v1h-1zM1021 231h1v1h-1zM1033 231h1v1h-1zM1046 231h1v1h-1zM1058 231h1v1h-1zM1071 231h1v1h-1zM1084 231h1v1h-1zM1096 231h1v1h-1zM1109 231h1v1h-1zM1121 231h1v1h-1zM1134 231h1v1h-1zM1147 231h1v1h-1zM1159 231h1v1h-1zM1172 231h1v1h-1zM1 244h1v1h-1zM14 244h1v1h-1zM26 244h1v1h-1zM39 244h1v1h-1zM51 244h1v1h-1zM64 244h1v1h-1zM77 244h1v1h-1zM89 244h1v1h-1zM102 244h1v1h-1zM114 244h1v1h-1zM127 244h1v1h-1zM140 244h1v1h-1zM152 244h1v1h-1zM165 244h1v1h-1zM176 244h1v1h-1zM189 244h1v1h-1zM202 244h1v1h-1zM214 244h1v1h-1zM227 244h1v1h-1zM239 244h1v1h-1zM252 244h1v1h-1zM265 244h1v1h-1zM277 244h1v1h-1zM290 244h1v1h-1zM302 244h1v1h-1zM315 244h1v1h-1zM328 244h1v1h-1zM340 244h1v1h-1zM353 244h1v1h-1zM365 244h1v1h-1zM378 244h1v1h-1zM391 244h1v1h-1zM403 244h1v1h-1zM416 244h1v1h-1zM428 244h1v1h-1zM441 244h1v1h-1zM454 244h1v1h-1zM466 244h1v1h-1zM479 244h1v1h-1zM491 244h1v1h-1zM504 244h1v1h-1zM517 244h1v1h-1zM529 244h1v1h-1zM542 244h1v1h-1zM554 244h1v1h-1zM567 244h1v1h-1zM580 244h1v1h-1zM592 244h1v1h-1zM605 244h1v1h-1zM617 244h1v1h-1zM630 244h1v1h-1zM643 244h1v1h-1zM655 244h1v1h-1zM668 244h1v1h-1zM680 244h1v1h-1zM693 244h1v1h-1zM706 244h1v1h-1zM718 244h1v1h-1zM731 244h1v1h-1zM743 244h1v1h-1zM756 244h1v1h-1zM769 244h1v1h-1zM781 244h1v1h-1zM794 244h1v1h-1zM806 244h1v1h-1zM819 244h1v1h-1zM832 244h1v1h-1zM844 244h1v1h-1zM857 244h1v1h-1zM869 244h1v1h-1zM882 244h1v1h-1zM895 244h1v1h-1zM907 244h1v1h-1zM920 244h1v1h-1zM932 244h1v1h-1zM945 244h1v1h-1zM958 244h1v1h-1zM970 244h1v1h-1zM983 244h1v1h-1zM995 244h1v1h-1zM1008 244h1v1h-1zM1021 244h1v1h-1zM1033 244h1v1h-1zM1046 244h1v1h-1zM1058 244h1v1h-1zM1071 244h1v1h-1zM1084 244h1v1h-1zM1096 244h1v1h-1zM1109 244h1v1h-1zM1121 244h1v1h-1zM1134 244h1v1h-1zM1147 244h1v1h-1zM1159 244h1v1h-1zM1172 244h1v1h-1zM1 256h1v1h-1zM14 256h1v1h-1zM26 256h1v1h-1zM39 256h1v1h-1zM51 256h1v1h-1zM64 256h1v1h-1zM77 256h1v1h-1zM89 256h1v1h-1zM102 256h1v1h-1zM114 256h1v1h-1zM127 256h1v1h-1zM140 256h1v1h-1zM152 256h1v1h-1zM165 256h1v1h-1zM176 256h1v1h-1zM189 256h1v1h-1zM202 256h1v1h-1zM214 256h1v1h-1zM227 256h1v1h-1zM239 256h1v1h-1zM252 256h1v1h-1zM265 256h1v1h-1zM277 256h1v1h-1zM290 256h1v1h-1zM302 256h1v1h-1zM315 256h1v1h-1zM328 256h1v1h-1zM340 256h1v1h-1zM353 256h1v1h-1zM365 256h1v1h-1zM378 256h1v1h-1zM391 256h1v1h-1zM403 256h1v1h-1zM416 256h1v1h-1zM428 256h1v1h-1zM441 256h1v1h-1zM454 256h1v1h-1zM466 256h1v1h-1zM479 256h1v1h-1zM491 256h1v1h-1zM504 256h1v1h-1zM517 256h1v1h-1zM529 256h1v1h-1zM542 256h1v1h-1zM554 256h1v1h-1zM567 256h1v1h-1zM580 256h1v1h-1zM592 256h1v1h-1zM605 256h1v1h-1zM617 256h1v1h-1zM630 256h1v1h-1zM643 256h1v1h-1zM655 256h1v1h-1zM668 256h1v1h-1zM680 256h1v1h-1zM693 256h1v1h-1zM706 256h1v1h-1zM718 256h1v1h-1zM731 256h1v1h-1zM743 256h1v1h-1zM756 256h1v1h-1zM769 256h1v1h-1zM781 256h1v1h-1zM794 256h1v1h-1zM806 256h1v1h-1zM819 256h1v1h-1zM832 256h1v1h-1zM844 256h1v1h-1zM857 256h1v1h-1zM869 256h1v1h-1zM882 256h1v1h-1zM895 256h1v1h-1zM907 256h1v1h-1zM920 256h1v1h-1zM932 256h1v1h-1zM945 256h1v1h-1zM958 256h1v1h-1zM970 256h1v1h-1zM983 256h1v1h-1zM995 256h1v1h-1zM1008 256h1v1h-1zM1021 256h1v1h-1zM1033 256h1v1h-1zM1046 256h1v1h-1zM1058 256h1v1h-1zM1071 256h1v1h-1zM1084 256h1v1h-1zM1096 256h1v1h-1zM1109 256h1v1h-1zM1121 256h1v1h-1zM1134 256h1v1h-1zM1147 256h1v1h-1zM1159 256h1v1h-1zM1172 256h1v1h-1zM1 269h1v1h-1zM14 269h1v1h-1zM26 269h1v1h-1zM39 269h1v1h-1zM51 269h1v1h-1zM64 269h1v1h-1zM77 269h1v1h-1zM89 269h1v1h-1zM102 269h1v1h-1zM114 269h1v1h-1zM127 269h1v1h-1zM140 269h1v1h-1zM152 269h1v1h-1zM165 269h1v1h-1zM176 269h1v1h-1zM189 269h1v1h-1zM202 269h1v1h-1zM214 269h1v1h-1zM227 269h1v1h-1zM239 269h1v1h-1zM252 269h1v1h-1zM265 269h1v1h-1zM277 269h1v1h-1zM290 269h1v1h-1zM302 269h1v1h-1zM315 269h1v1h-1zM328 269h1v1h-1zM340 269h1v1h-1zM353 269h1v1h-1zM365 269h1v1h-1zM378 269h1v1h-1zM391 269h1v1h-1zM403 269h1v1h-1zM416 269h1v1h-1zM428 269h1v1h-1zM441 269h1v1h-1zM454 269h1v1h-1zM466 269h1v1h-1zM479 269h1v1h-1zM491 269h1v1h-1zM504 269h1v1h-1zM517 269h1v1h-1zM529 269h1v1h-1zM542 269h1v1h-1zM554 269h1v1h-1zM567 269h1v1h-1zM580 269h1v1h-1zM592 269h1v1h-1zM605 269h1v1h-1zM617 269h1v1h-1zM630 269h1v1h-1zM643 269h1v1h-1zM655 269h1v1h-1zM668 269h1v1h-1zM680 269h1v1h-1zM693 269h1v1h-1zM706 269h1v1h-1zM718 269h1v1h-1zM731 269h1v1h-1zM743 269h1v1h-1zM756 269h1v1h-1zM769 269h1v1h-1zM781 269h1v1h-1zM794 269h1v1h-1zM806 269h1v1h-1zM819 269h1v1h-1zM832 269h1v1h-1zM844 269h1v1h-1zM857 269h1v1h-1zM869 269h1v1h-1zM882 269h1v1h-1zM895 269h1v1h-1zM907 269h1v1h-1zM920 269h1v1h-1zM932 269h1v1h-1zM945 269h1v1h-1zM958 269h1v1h-1zM970 269h1v1h-1zM983 269h1v1h-1zM995 269h1v1h-1zM1008 269h1v1h-1zM1021 269h1v1h-1zM1033 269h1v1h-1zM1046 269h1v1h-1zM1058 269h1v1h-1zM1071 269h1v1h-1zM1084 269h1v1h-1zM1096 269h1v1h-1zM1109 269h1v1h-1zM1121 269h1v1h-1zM1134 269h1v1h-1zM1147 269h1v1h-1zM1159 269h1v1h-1zM1172 269h1v1h-1zM1 281h1v1h-1zM14 281h1v1h-1zM26 281h1v1h-1zM39 281h1v1h-1zM51 281h1v1h-1zM64 281h1v1h-1zM77 281h1v1h-1zM89 281h1v1h-1zM102 281h1v1h-1zM114 281h1v1h-1zM127 281h1v1h-1zM140 281h1v1h-1zM152 281h1v1h-1zM165 281h1v1h-1zM176 281h1v1h-1zM189 281h1v1h-1zM202 281h1v1h-1zM214 281h1v1h-1zM227 281h1v1h-1zM239 281h1v1h-1zM252 281h1v1h-1zM265 281h1v1h-1zM277 281h1v1h-1zM290 281h1v1h-1zM302 281h1v1h-1zM315 281h1v1h-1zM328 281h1v1h-1zM340 281h1v1h-1zM353 281h1v1h-1zM365 281h1v1h-1zM378 281h1v1h-1zM391 281h1v1h-1zM403 281h1v1h-1zM416 281h1v1h-1zM428 281h1v1h-1zM441 281h1v1h-1zM454 281h1v1h-1zM466 281h1v1h-1zM479 281h1v1h-1zM491 281h1v1h-1zM504 281h1v1h-1zM517 281h1v1h-1zM529 281h1v1h-1zM542 281h1v1h-1zM554 281h1v1h-1zM567 281h1v1h-1zM580 281h1v1h-1zM592 281h1v1h-1zM605 281h1v1h-1zM617 281h1v1h-1zM630 281h1v1h-1zM643 281h1v1h-1zM655 281h1v1h-1zM668 281h1v1h-1zM680 281h1v1h-1zM693 281h1v1h-1zM706 281h1v1h-1zM718 281h1v1h-1zM731 281h1v1h-1zM743 281h1v1h-1zM756 281h1v1h-1zM769 281h1v1h-1zM781 281h1v1h-1zM794 281h1v1h-1zM806 281h1v1h-1zM819 281h1v1h-1zM832 281h1v1h-1zM844 281h1v1h-1zM857 281h1v1h-1zM869 281h1v1h-1zM882 281h1v1h-1zM895 281h1v1h-1zM907 281h1v1h-1zM920 281h1v1h-1zM932 281h1v1h-1zM945 281h1v1h-1zM958 281h1v1h-1zM970 281h1v1h-1zM983 281h1v1h-1zM995 281h1v1h-1zM1008 281h1v1h-1zM1021 281h1v1h-1zM1033 281h1v1h-1zM1046 281h1v1h-1zM1058 281h1v1h-1zM1071 281h1v1h-1zM1084 281h1v1h-1zM1096 281h1v1h-1zM1109 281h1v1h-1zM1121 281h1v1h-1zM1134 281h1v1h-1zM1147 281h1v1h-1zM1159 281h1v1h-1zM1172 281h1v1h-1zM1 293h1v1h-1zM14 293h1v1h-1zM26 293h1v1h-1zM39 293h1v1h-1zM51 293h1v1h-1zM64 293h1v1h-1zM77 293h1v1h-1zM89 293h1v1h-1zM102 293h1v1h-1zM114 293h1v1h-1zM127 293h1v1h-1zM140 293h1v1h-1zM152 293h1v1h-1zM165 293h1v1h-1zM176 293h1v1h-1zM189 293h1v1h-1zM202 293h1v1h-1zM214 293h1v1h-1zM227 293h1v1h-1zM239 293h1v1h-1zM252 293h1v1h-1zM265 293h1v1h-1zM277 293h1v1h-1zM290 293h1v1h-1zM302 293h1v1h-1zM315 293h1v1h-1zM328 293h1v1h-1zM340 293h1v1h-1zM353 293h1v1h-1zM365 293h1v1h-1zM378 293h1v1h-1zM391 293h1v1h-1zM403 293h1v1h-1zM416 293h1v1h-1zM428 293h1v1h-1zM441 293h1v1h-1zM454 293h1v1h-1zM466 293h1v1h-1zM479 293h1v1h-1zM491 293h1v1h-1zM504 293h1v1h-1zM517 293h1v1h-1zM529 293h1v1h-1zM542 293h1v1h-1zM554 293h1v1h-1zM567 293h1v1h-1zM580 293h1v1h-1zM592 293h1v1h-1zM605 293h1v1h-1zM617 293h1v1h-1zM630 293h1v1h-1zM643 293h1v1h-1zM655 293h1v1h-1zM668 293h1v1h-1zM680 293h1v1h-1zM693 293h1v1h-1zM706 293h1v1h-1zM718 293h1v1h-1zM731 293h1v1h-1zM743 293h1v1h-1zM756 293h1v1h-1zM769 293h1v1h-1zM781 293h1v1h-1zM794 293h1v1h-1zM806 293h1v1h-1zM819 293h1v1h-1zM832 293h1v1h-1zM844 293h1v1h-1zM857 293h1v1h-1zM869 293h1v1h-1zM882 293h1v1h-1zM895 293h1v1h-1zM907 293h1v1h-1zM920 293h1v1h-1zM932 293h1v1h-1zM945 293h1v1h-1zM958 293h1v1h-1zM970 293h1v1h-1zM983 293h1v1h-1zM995 293h1v1h-1zM1008 293h1v1h-1zM1021 293h1v1h-1zM1033 293h1v1h-1zM1046 293h1v1h-1zM1058 293h1v1h-1zM1071 293h1v1h-1zM1084 293h1v1h-1zM1096 293h1v1h-1zM1109 293h1v1h-1zM1121 293h1v1h-1zM1134 293h1v1h-1zM1147 293h1v1h-1zM1159 293h1v1h-1zM1172 293h1v1h-1zM1 306h1v1h-1zM14 306h1v1h-1zM26 306h1v1h-1zM39 306h1v1h-1zM51 306h1v1h-1zM64 306h1v1h-1zM77 306h1v1h-1zM89 306h1v1h-1zM102 306h1v1h-1zM114 306h1v1h-1zM127 306h1v1h-1zM140 306h1v1h-1zM152 306h1v1h-1zM165 306h1v1h-1zM176 306h1v1h-1zM189 306h1v1h-1zM202 306h1v1h-1zM214 306h1v1h-1zM227 306h1v1h-1zM239 306h1v1h-1zM252 306h1v1h-1zM265 306h1v1h-1zM277 306h1v1h-1zM290 306h1v1h-1zM302 306h1v1h-1zM315 306h1v1h-1zM328 306h1v1h-1zM340 306h1v1h-1zM353 306h1v1h-1zM365 306h1v1h-1zM378 306h1v1h-1zM391 306h1v1h-1zM403 306h1v1h-1zM416 306h1v1h-1zM428 306h1v1h-1zM441 306h1v1h-1zM454 306h1v1h-1zM466 306h1v1h-1zM479 306h1v1h-1zM491 306h1v1h-1zM504 306h1v1h-1zM517 306h1v1h-1zM529 306h1v1h-1zM542 306h1v1h-1zM554 306h1v1h-1zM567 306h1v1h-1zM580 306h1v1h-1zM592 306h1v1h-1zM605 306h1v1h-1zM617 306h1v1h-1zM630 306h1v1h-1zM643 306h1v1h-1zM655 306h1v1h-1zM668 306h1v1h-1zM680 306h1v1h-1zM693 306h1v1h-1zM706 306h1v1h-1zM718 306h1v1h-1zM731 306h1v1h-1zM743 306h1v1h-1zM756 306h1v1h-1zM769 306h1v1h-1zM781 306h1v1h-1zM794 306h1v1h-1zM806 306h1v1h-1zM819 306h1v1h-1zM832 306h1v1h-1zM844 306h1v1h-1zM857 306h1v1h-1zM869 306h1v1h-1zM882 306h1v1h-1zM895 306h1v1h-1zM907 306h1v1h-1zM920 306h1v1h-1zM932 306h1v1h-1zM945 306h1v1h-1zM958 306h1v1h-1zM970 306h1v1h-1zM983 306h1v1h-1zM995 306h1v1h-1zM1008 306h1v1h-1zM1021 306h1v1h-1zM1033 306h1v1h-1zM1046 306h1v1h-1zM1058 306h1v1h-1zM1071 306h1v1h-1zM1084 306h1v1h-1zM1096 306h1v1h-1zM1109 306h1v1h-1zM1121 306h1v1h-1zM1134 306h1v1h-1zM1147 306h1v1h-1zM1159 306h1v1h-1zM1172 306h1v1h-1zM1 318h1v1h-1zM14 318h1v1h-1zM26 318h1v1h-1zM39 318h1v1h-1zM51 318h1v1h-1zM64 318h1v1h-1zM77 318h1v1h-1zM89 318h1v1h-1zM102 318h1v1h-1zM114 318h1v1h-1zM127 318h1v1h-1zM140 318h1v1h-1zM152 318h1v1h-1zM165 318h1v1h-1zM176 318h1v1h-1zM189 318h1v1h-1zM202 318h1v1h-1zM214 318h1v1h-1zM227 318h1v1h-1zM239 318h1v1h-1zM252 318h1v1h-1zM265 318h1v1h-1zM277 318h1v1h-1zM290 318h1v1h-1zM302 318h1v1h-1zM315 318h1v1h-1zM328 318h1v1h-1zM340 318h1v1h-1zM353 318h1v1h-1zM365 318h1v1h-1zM378 318h1v1h-1zM391 318h1v1h-1zM403 318h1v1h-1zM416 318h1v1h-1zM428 318h1v1h-1zM441 318h1v1h-1zM454 318h1v1h-1zM466 318h1v1h-1zM479 318h1v1h-1zM491 318h1v1h-1zM504 318h1v1h-1zM517 318h1v1h-1zM529 318h1v1h-1zM542 318h1v1h-1zM554 318h1v1h-1zM567 318h1v1h-1zM580 318h1v1h-1zM592 318h1v1h-1zM605 318h1v1h-1zM617 318h1v1h-1zM630 318h1v1h-1zM643 318h1v1h-1zM655 318h1v1h-1zM668 318h1v1h-1zM680 318h1v1h-1zM693 318h1v1h-1zM706 318h1v1h-1zM718 318h1v1h-1zM731 318h1v1h-1zM743 318h1v1h-1zM756 318h1v1h-1zM769 318h1v1h-1zM781 318h1v1h-1zM794 318h1v1h-1zM806 318h1v1h-1zM819 318h1v1h-1zM832 318h1v1h-1zM844 318h1v1h-1zM857 318h1v1h-1zM869 318h1v1h-1zM882 318h1v1h-1zM895 318h1v1h-1zM907 318h1v1h-1zM920 318h1v1h-1zM932 318h1v1h-1zM945 318h1v1h-1zM958 318h1v1h-1zM970 318h1v1h-1zM983 318h1v1h-1zM995 318h1v1h-1zM1008 318h1v1h-1zM1021 318h1v1h-1zM1033 318h1v1h-1zM1046 318h1v1h-1zM1058 318h1v1h-1zM1071 318h1v1h-1zM1084 318h1v1h-1zM1096 318h1v1h-1zM1109 318h1v1h-1zM1121 318h1v1h-1zM1134 318h1v1h-1zM1147 318h1v1h-1zM1159 318h1v1h-1zM1172 318h1v1h-1zM1 331h1v1h-1zM14 331h1v1h-1zM26 331h1v1h-1zM39 331h1v1h-1zM51 331h1v1h-1zM64 331h1v1h-1zM77 331h1v1h-1zM89 331h1v1h-1zM102 331h1v1h-1zM114 331h1v1h-1zM127 331h1v1h-1zM140 331h1v1h-1zM152 331h1v1h-1zM165 331h1v1h-1zM176 331h1v1h-1zM189 331h1v1h-1zM202 331h1v1h-1zM214 331h1v1h-1zM227 331h1v1h-1zM239 331h1v1h-1zM252 331h1v1h-1zM265 331h1v1h-1zM277 331h1v1h-1zM290 331h1v1h-1zM302 331h1v1h-1zM315 331h1v1h-1zM328 331h1v1h-1zM340 331h1v1h-1zM353 331h1v1h-1zM365 331h1v1h-1zM378 331h1v1h-1zM391 331h1v1h-1zM403 331h1v1h-1zM416 331h1v1h-1zM428 331h1v1h-1zM441 331h1v1h-1zM454 331h1v1h-1zM466 331h1v1h-1zM479 331h1v1h-1zM491 331h1v1h-1zM504 331h1v1h-1zM517 331h1v1h-1zM529 331h1v1h-1zM542 331h1v1h-1zM554 331h1v1h-1zM567 331h1v1h-1zM580 331h1v1h-1zM592 331h1v1h-1zM605 331h1v1h-1zM617 331h1v1h-1zM630 331h1v1h-1zM643 331h1v1h-1zM655 331h1v1h-1zM668 331h1v1h-1zM680 331h1v1h-1zM693 331h1v1h-1zM706 331h1v1h-1zM718 331h1v1h-1zM731 331h1v1h-1zM743 331h1v1h-1zM756 331h1v1h-1zM769 331h1v1h-1zM781 331h1v1h-1zM794 331h1v1h-1zM806 331h1v1h-1zM819 331h1v1h-1zM832 331h1v1h-1zM844 331h1v1h-1zM857 331h1v1h-1zM869 331h1v1h-1zM882 331h1v1h-1zM895 331h1v1h-1zM907 331h1v1h-1zM920 331h1v1h-1zM932 331h1v1h-1zM945 331h1v1h-1zM958 331h1v1h-1zM970 331h1v1h-1zM983 331h1v1h-1zM995 331h1v1h-1zM1008 331h1v1h-1zM1021 331h1v1h-1zM1033 331h1v1h-1zM1046 331h1v1h-1zM1058 331h1v1h-1zM1071 331h1v1h-1zM1084 331h1v1h-1zM1096 331h1v1h-1zM1109 331h1v1h-1zM1121 331h1v1h-1zM1134 331h1v1h-1zM1147 331h1v1h-1zM1159 331h1v1h-1zM1172 331h1v1h-1zM1 343h1v1h-1zM14 343h1v1h-1zM26 343h1v1h-1zM39 343h1v1h-1zM51 343h1v1h-1zM64 343h1v1h-1zM77 343h1v1h-1zM89 343h1v1h-1zM102 343h1v1h-1zM114 343h1v1h-1zM127 343h1v1h-1zM140 343h1v1h-1zM152 343h1v1h-1zM165 343h1v1h-1zM176 343h1v1h-1zM189 343h1v1h-1zM202 343h1v1h-1zM214 343h1v1h-1zM227 343h1v1h-1zM239 343h1v1h-1zM252 343h1v1h-1zM265 343h1v1h-1zM277 343h1v1h-1zM290 343h1v1h-1zM302 343h1v1h-1zM315 343h1v1h-1zM328 343h1v1h-1zM340 343h1v1h-1zM353 343h1v1h-1zM365 343h1v1h-1zM378 343h1v1h-1zM391 343h1v1h-1zM403 343h1v1h-1zM416 343h1v1h-1zM428 343h1v1h-1zM441 343h1v1h-1zM454 343h1v1h-1zM466 343h1v1h-1zM479 343h1v1h-1zM491 343h1v1h-1zM504 343h1v1h-1zM517 343h1v1h-1zM529 343h1v1h-1zM542 343h1v1h-1zM554 343h1v1h-1zM567 343h1v1h-1zM580 343h1v1h-1zM592 343h1v1h-1zM605 343h1v1h-1zM617 343h1v1h-1zM630 343h1v1h-1zM643 343h1v1h-1zM655 343h1v1h-1zM668 343h1v1h-1zM680 343h1v1h-1zM693 343h1v1h-1zM706 343h1v1h-1zM718 343h1v1h-1zM731 343h1v1h-1zM743 343h1v1h-1zM756 343h1v1h-1zM769 343h1v1h-1zM781 343h1v1h-1zM794 343h1v1h-1zM806 343h1v1h-1zM819 343h1v1h-1zM832 343h1v1h-1zM844 343h1v1h-1zM857 343h1v1h-1zM869 343h1v1h-1zM882 343h1v1h-1zM895 343h1v1h-1zM907 343h1v1h-1zM920 343h1v1h-1zM932 343h1v1h-1zM945 343h1v1h-1zM958 343h1v1h-1zM970 343h1v1h-1zM983 343h1v1h-1zM995 343h1v1h-1zM1008 343h1v1h-1zM1021 343h1v1h-1zM1033 343h1v1h-1zM1046 343h1v1h-1zM1058 343h1v1h-1zM1071 343h1v1h-1zM1084 343h1v1h-1zM1096 343h1v1h-1zM1109 343h1v1h-1zM1121 343h1v1h-1zM1134 343h1v1h-1zM1147 343h1v1h-1zM1159 343h1v1h-1zM1172 343h1v1h-1zM1 356h1v1h-1zM14 356h1v1h-1zM26 356h1v1h-1zM39 356h1v1h-1zM51 356h1v1h-1zM64 356h1v1h-1zM77 356h1v1h-1zM89 356h1v1h-1zM102 356h1v1h-1zM114 356h1v1h-1zM127 356h1v1h-1zM140 356h1v1h-1zM152 356h1v1h-1zM165 356h1v1h-1zM176 356h1v1h-1zM189 356h1v1h-1zM202 356h1v1h-1zM214 356h1v1h-1zM227 356h1v1h-1zM239 356h1v1h-1zM252 356h1v1h-1zM265 356h1v1h-1zM277 356h1v1h-1zM290 356h1v1h-1zM302 356h1v1h-1zM315 356h1v1h-1zM328 356h1v1h-1zM340 356h1v1h-1zM353 356h1v1h-1zM365 356h1v1h-1zM378 356h1v1h-1zM391 356h1v1h-1zM403 356h1v1h-1zM416 356h1v1h-1zM428 356h1v1h-1zM441 356h1v1h-1zM454 356h1v1h-1zM466 356h1v1h-1zM479 356h1v1h-1zM491 356h1v1h-1zM504 356h1v1h-1zM517 356h1v1h-1zM529 356h1v1h-1zM542 356h1v1h-1zM554 356h1v1h-1zM567 356h1v1h-1zM580 356h1v1h-1zM592 356h1v1h-1zM605 356h1v1h-1zM617 356h1v1h-1zM630 356h1v1h-1zM643 356h1v1h-1zM655 356h1v1h-1zM668 356h1v1h-1zM680 356h1v1h-1zM693 356h1v1h-1zM706 356h1v1h-1zM718 356h1v1h-1zM731 356h1v1h-1zM743 356h1v1h-1zM756 356h1v1h-1zM769 356h1v1h-1zM781 356h1v1h-1zM794 356h1v1h-1zM806 356h1v1h-1zM819 356h1v1h-1zM832 356h1v1h-1zM844 356h1v1h-1zM857 356h1v1h-1zM869 356h1v1h-1zM882 356h1v1h-1zM895 356h1v1h-1zM907 356h1v1h-1zM920 356h1v1h-1zM932 356h1v1h-1zM945 356h1v1h-1zM958 356h1v1h-1zM970 356h1v1h-1zM983 356h1v1h-1zM995 356h1v1h-1zM1008 356h1v1h-1zM1021 356h1v1h-1zM1033 356h1v1h-1zM1046 356h1v1h-1zM1058 356h1v1h-1zM1071 356h1v1h-1zM1084 356h1v1h-1zM1096 356h1v1h-1zM1109 356h1v1h-1zM1121 356h1v1h-1zM1134 356h1v1h-1zM1147 356h1v1h-1zM1159 356h1v1h-1zM1172 356h1v1h-1zM1 369h1v1h-1zM14 369h1v1h-1zM26 369h1v1h-1zM39 369h1v1h-1zM51 369h1v1h-1zM64 369h1v1h-1zM77 369h1v1h-1zM89 369h1v1h-1zM102 369h1v1h-1zM114 369h1v1h-1zM127 369h1v1h-1zM140 369h1v1h-1zM152 369h1v1h-1zM165 369h1v1h-1zM176 369h1v1h-1zM189 369h1v1h-1zM202 369h1v1h-1zM214 369h1v1h-1zM227 369h1v1h-1zM239 369h1v1h-1zM252 369h1v1h-1zM265 369h1v1h-1zM277 369h1v1h-1zM290 369h1v1h-1zM302 369h1v1h-1zM315 369h1v1h-1zM328 369h1v1h-1zM340 369h1v1h-1zM353 369h1v1h-1zM365 369h1v1h-1zM378 369h1v1h-1zM391 369h1v1h-1zM403 369h1v1h-1zM416 369h1v1h-1zM428 369h1v1h-1zM441 369h1v1h-1zM454 369h1v1h-1zM466 369h1v1h-1zM479 369h1v1h-1zM491 369h1v1h-1zM504 369h1v1h-1zM517 369h1v1h-1zM529 369h1v1h-1zM542 369h1v1h-1zM554 369h1v1h-1zM567 369h1v1h-1zM580 369h1v1h-1zM592 369h1v1h-1zM605 369h1v1h-1zM617 369h1v1h-1zM630 369h1v1h-1zM643 369h1v1h-1zM655 369h1v1h-1zM668 369h1v1h-1zM680 369h1v1h-1zM693 369h1v1h-1zM706 369h1v1h-1zM718 369h1v1h-1zM731 369h1v1h-1zM743 369h1v1h-1zM756 369h1v1h-1zM769 369h1v1h-1zM781 369h1v1h-1zM794 369h1v1h-1zM806 369h1v1h-1zM819 369h1v1h-1zM832 369h1v1h-1zM844 369h1v1h-1zM857 369h1v1h-1zM869 369h1v1h-1zM882 369h1v1h-1zM895 369h1v1h-1zM907 369h1v1h-1zM920 369h1v1h-1zM932 369h1v1h-1zM945 369h1v1h-1zM958 369h1v1h-1zM970 369h1v1h-1zM983 369h1v1h-1zM995 369h1v1h-1zM1008 369h1v1h-1zM1021 369h1v1h-1zM1033 369h1v1h-1zM1046 369h1v1h-1zM1058 369h1v1h-1zM1071 369h1v1h-1zM1084 369h1v1h-1zM1096 369h1v1h-1zM1109 369h1v1h-1zM1121 369h1v1h-1zM1134 369h1v1h-1zM1147 369h1v1h-1zM1159 369h1v1h-1zM1172 369h1v1h-1zM1 381h1v1h-1zM14 381h1v1h-1zM26 381h1v1h-1zM39 381h1v1h-1zM51 381h1v1h-1zM64 381h1v1h-1zM77 381h1v1h-1zM89 381h1v1h-1zM102 381h1v1h-1zM114 381h1v1h-1zM127 381h1v1h-1zM140 381h1v1h-1zM152 381h1v1h-1zM165 381h1v1h-1zM176 381h1v1h-1zM189 381h1v1h-1zM202 381h1v1h-1zM214 381h1v1h-1zM227 381h1v1h-1zM239 381h1v1h-1zM252 381h1v1h-1zM265 381h1v1h-1zM277 381h1v1h-1zM290 381h1v1h-1zM302 381h1v1h-1zM315 381h1v1h-1zM328 381h1v1h-1zM340 381h1v1h-1zM353 381h1v1h-1zM365 381h1v1h-1zM378 381h1v1h-1zM391 381h1v1h-1zM403 381h1v1h-1zM416 381h1v1h-1zM428 381h1v1h-1zM441 381h1v1h-1zM454 381h1v1h-1zM466 381h1v1h-1zM479 381h1v1h-1zM491 381h1v1h-1zM504 381h1v1h-1zM517 381h1v1h-1zM529 381h1v1h-1zM542 381h1v1h-1zM554 381h1v1h-1zM567 381h1v1h-1zM580 381h1v1h-1zM592 381h1v1h-1zM605 381h1v1h-1zM617 381h1v1h-1zM630 381h1v1h-1zM643 381h1v1h-1zM655 381h1v1h-1zM668 381h1v1h-1zM680 381h1v1h-1zM693 381h1v1h-1zM706 381h1v1h-1zM718 381h1v1h-1zM731 381h1v1h-1zM743 381h1v1h-1zM756 381h1v1h-1zM769 381h1v1h-1zM781 381h1v1h-1zM794 381h1v1h-1zM806 381h1v1h-1zM819 381h1v1h-1zM832 381h1v1h-1zM844 381h1v1h-1zM857 381h1v1h-1zM869 381h1v1h-1zM882 381h1v1h-1zM895 381h1v1h-1zM907 381h1v1h-1zM920 381h1v1h-1zM932 381h1v1h-1zM945 381h1v1h-1zM958 381h1v1h-1zM970 381h1v1h-1zM983 381h1v1h-1zM995 381h1v1h-1zM1008 381h1v1h-1zM1021 381h1v1h-1zM1033 381h1v1h-1zM1046 381h1v1h-1zM1058 381h1v1h-1zM1071 381h1v1h-1zM1084 381h1v1h-1zM1096 381h1v1h-1zM1109 381h1v1h-1zM1121 381h1v1h-1zM1134 381h1v1h-1zM1147 381h1v1h-1zM1159 381h1v1h-1zM1172 381h1v1h-1zM1 394h1v1h-1zM14 394h1v1h-1zM26 394h1v1h-1zM39 394h1v1h-1zM51 394h1v1h-1zM64 394h1v1h-1zM77 394h1v1h-1zM89 394h1v1h-1zM102 394h1v1h-1zM114 394h1v1h-1zM127 394h1v1h-1zM140 394h1v1h-1zM152 394h1v1h-1zM165 394h1v1h-1zM176 394h1v1h-1zM189 394h1v1h-1zM202 394h1v1h-1zM214 394h1v1h-1zM227 394h1v1h-1zM239 394h1v1h-1zM252 394h1v1h-1zM265 394h1v1h-1zM277 394h1v1h-1zM290 394h1v1h-1zM302 394h1v1h-1zM315 394h1v1h-1zM328 394h1v1h-1zM340 394h1v1h-1zM353 394h1v1h-1zM365 394h1v1h-1zM378 394h1v1h-1zM391 394h1v1h-1zM403 394h1v1h-1zM416 394h1v1h-1zM428 394h1v1h-1zM441 394h1v1h-1zM454 394h1v1h-1zM466 394h1v1h-1zM479 394h1v1h-1zM491 394h1v1h-1zM504 394h1v1h-1zM517 394h1v1h-1zM529 394h1v1h-1zM542 394h1v1h-1zM554 394h1v1h-1zM567 394h1v1h-1zM580 394h1v1h-1zM592 394h1v1h-1zM605 394h1v1h-1zM617 394h1v1h-1zM630 394h1v1h-1zM643 394h1v1h-1zM655 394h1v1h-1zM668 394h1v1h-1zM680 394h1v1h-1zM693 394h1v1h-1zM706 394h1v1h-1zM718 394h1v1h-1zM731 394h1v1h-1zM743 394h1v1h-1zM756 394h1v1h-1zM769 394h1v1h-1zM781 394h1v1h-1zM794 394h1v1h-1zM806 394h1v1h-1zM819 394h1v1h-1zM832 394h1v1h-1zM844 394h1v1h-1zM857 394h1v1h-1zM869 394h1v1h-1zM882 394h1v1h-1zM895 394h1v1h-1zM907 394h1v1h-1zM920 394h1v1h-1zM932 394h1v1h-1zM945 394h1v1h-1zM958 394h1v1h-1zM970 394h1v1h-1zM983 394h1v1h-1zM995 394h1v1h-1zM1008 394h1v1h-1zM1021 394h1v1h-1zM1033 394h1v1h-1zM1046 394h1v1h-1zM1058 394h1v1h-1zM1071 394h1v1h-1zM1084 394h1v1h-1zM1096 394h1v1h-1zM1109 394h1v1h-1zM1121 394h1v1h-1zM1134 394h1v1h-1zM1147 394h1v1h-1zM1159 394h1v1h-1zM1172 394h1v1h-1zM1 406h1v1h-1zM14 406h1v1h-1zM26 406h1v1h-1zM39 406h1v1h-1zM51 406h1v1h-1zM64 406h1v1h-1zM77 406h1v1h-1zM89 406h1v1h-1zM102 406h1v1h-1zM114 406h1v1h-1zM127 406h1v1h-1zM140 406h1v1h-1zM152 406h1v1h-1zM165 406h1v1h-1zM176 406h1v1h-1zM189 406h1v1h-1zM202 406h1v1h-1zM214 406h1v1h-1zM227 406h1v1h-1zM239 406h1v1h-1zM252 406h1v1h-1zM265 406h1v1h-1zM277 406h1v1h-1zM290 406h1v1h-1zM302 406h1v1h-1zM315 406h1v1h-1zM328 406h1v1h-1zM340 406h1v1h-1zM353 406h1v1h-1zM365 406h1v1h-1zM378 406h1v1h-1zM391 406h1v1h-1zM403 406h1v1h-1zM416 406h1v1h-1zM428 406h1v1h-1zM441 406h1v1h-1zM454 406h1v1h-1zM466 406h1v1h-1zM479 406h1v1h-1zM491 406h1v1h-1zM504 406h1v1h-1zM517 406h1v1h-1zM529 406h1v1h-1zM542 406h1v1h-1zM554 406h1v1h-1zM567 406h1v1h-1zM580 406h1v1h-1zM592 406h1v1h-1zM605 406h1v1h-1zM617 406h1v1h-1zM630 406h1v1h-1zM643 406h1v1h-1zM655 406h1v1h-1zM668 406h1v1h-1zM680 406h1v1h-1zM693 406h1v1h-1zM706 406h1v1h-1zM718 406h1v1h-1zM731 406h1v1h-1zM743 406h1v1h-1zM756 406h1v1h-1zM769 406h1v1h-1zM781 406h1v1h-1zM794 406h1v1h-1zM806 406h1v1h-1zM819 406h1v1h-1zM832 406h1v1h-1zM844 406h1v1h-1zM857 406h1v1h-1zM869 406h1v1h-1zM882 406h1v1h-1zM895 406h1v1h-1zM907 406h1v1h-1zM920 406h1v1h-1zM932 406h1v1h-1zM945 406h1v1h-1zM958 406h1v1h-1zM970 406h1v1h-1zM983 406h1v1h-1zM995 406h1v1h-1zM1008 406h1v1h-1zM1021 406h1v1h-1zM1033 406h1v1h-1zM1046 406h1v1h-1zM1058 406h1v1h-1zM1071 406h1v1h-1zM1084 406h1v1h-1zM1096 406h1v1h-1zM1109 406h1v1h-1zM1121 406h1v1h-1zM1134 406h1v1h-1zM1147 406h1v1h-1zM1159 406h1v1h-1zM1172 406h1v1h-1zM1 419h1v1h-1zM14 419h1v1h-1zM26 419h1v1h-1zM39 419h1v1h-1zM51 419h1v1h-1zM64 419h1v1h-1zM77 419h1v1h-1zM89 419h1v1h-1zM102 419h1v1h-1zM114 419h1v1h-1zM127 419h1v1h-1zM140 419h1v1h-1zM152 419h1v1h-1zM165 419h1v1h-1zM176 419h1v1h-1zM189 419h1v1h-1zM202 419h1v1h-1zM214 419h1v1h-1zM227 419h1v1h-1zM239 419h1v1h-1zM252 419h1v1h-1zM265 419h1v1h-1zM277 419h1v1h-1zM290 419h1v1h-1zM302 419h1v1h-1zM315 419h1v1h-1zM328 419h1v1h-1zM340 419h1v1h-1zM353 419h1v1h-1zM365 419h1v1h-1zM378 419h1v1h-1zM391 419h1v1h-1zM403 419h1v1h-1zM416 419h1v1h-1zM428 419h1v1h-1zM441 419h1v1h-1zM454 419h1v1h-1zM466 419h1v1h-1zM479 419h1v1h-1zM491 419h1v1h-1zM504 419h1v1h-1zM517 419h1v1h-1zM529 419h1v1h-1zM542 419h1v1h-1zM554 419h1v1h-1zM567 419h1v1h-1zM580 419h1v1h-1zM592 419h1v1h-1zM605 419h1v1h-1zM617 419h1v1h-1zM630 419h1v1h-1zM643 419h1v1h-1zM655 419h1v1h-1zM668 419h1v1h-1zM680 419h1v1h-1zM693 419h1v1h-1zM706 419h1v1h-1zM718 419h1v1h-1zM731 419h1v1h-1zM743 419h1v1h-1zM756 419h1v1h-1zM769 419h1v1h-1zM781 419h1v1h-1zM794 419h1v1h-1zM806 419h1v1h-1zM819 419h1v1h-1zM832 419h1v1h-1zM844 419h1v1h-1zM857 419h1v1h-1zM869 419h1v1h-1zM882 419h1v1h-1zM895 419h1v1h-1zM907 419h1v1h-1zM920 419h1v1h-1zM932 419h1v1h-1zM945 419h1v1h-1zM958 419h1v1h-1zM970 419h1v1h-1zM983 419h1v1h-1zM995 419h1v1h-1zM1008 419h1v1h-1zM1021 419h1v1h-1zM1033 419h1v1h-1zM1046 419h1v1h-1zM1058 419h1v1h-1zM1071 419h1v1h-1zM1084 419h1v1h-1zM1096 419h1v1h-1zM1109 419h1v1h-1zM1121 419h1v1h-1zM1134 419h1v1h-1zM1147 419h1v1h-1zM1159 419h1v1h-1zM1172 419h1v1h-1zM1 432h1v1h-1zM14 432h1v1h-1zM26 432h1v1h-1zM39 432h1v1h-1zM51 432h1v1h-1zM64 432h1v1h-1zM77 432h1v1h-1zM89 432h1v1h-1zM102 432h1v1h-1zM114 432h1v1h-1zM127 432h1v1h-1zM140 432h1v1h-1zM152 432h1v1h-1zM165 432h1v1h-1zM176 432h1v1h-1zM189 432h1v1h-1zM202 432h1v1h-1zM214 432h1v1h-1zM227 432h1v1h-1zM239 432h1v1h-1zM252 432h1v1h-1zM265 432h1v1h-1zM277 432h1v1h-1zM290 432h1v1h-1zM302 432h1v1h-1zM315 432h1v1h-1zM328 432h1v1h-1zM340 432h1v1h-1zM353 432h1v1h-1zM365 432h1v1h-1zM378 432h1v1h-1zM391 432h1v1h-1zM403 432h1v1h-1zM416 432h1v1h-1zM428 432h1v1h-1zM441 432h1v1h-1zM454 432h1v1h-1zM466 432h1v1h-1zM479 432h1v1h-1zM491 432h1v1h-1zM504 432h1v1h-1zM517 432h1v1h-1zM529 432h1v1h-1zM542 432h1v1h-1zM554 432h1v1h-1zM567 432h1v1h-1zM580 432h1v1h-1zM592 432h1v1h-1zM605 432h1v1h-1zM617 432h1v1h-1zM630 432h1v1h-1zM643 432h1v1h-1zM655 432h1v1h-1zM668 432h1v1h-1zM680 432h1v1h-1zM693 432h1v1h-1zM706 432h1v1h-1zM718 432h1v1h-1zM731 432h1v1h-1zM743 432h1v1h-1zM756 432h1v1h-1zM769 432h1v1h-1zM781 432h1v1h-1zM794 432h1v1h-1zM806 432h1v1h-1zM819 432h1v1h-1zM832 432h1v1h-1zM844 432h1v1h-1zM857 432h1v1h-1zM869 432h1v1h-1zM882 432h1v1h-1zM895 432h1v1h-1zM907 432h1v1h-1zM920 432h1v1h-1zM932 432h1v1h-1zM945 432h1v1h-1zM958 432h1v1h-1zM970 432h1v1h-1zM983 432h1v1h-1zM995 432h1v1h-1zM1008 432h1v1h-1zM1021 432h1v1h-1zM1033 432h1v1h-1zM1046 432h1v1h-1zM1058 432h1v1h-1zM1071 432h1v1h-1zM1084 432h1v1h-1zM1096 432h1v1h-1zM1109 432h1v1h-1zM1121 432h1v1h-1zM1134 432h1v1h-1zM1147 432h1v1h-1zM1159 432h1v1h-1zM1172 432h1v1h-1zM1 444h1v1h-1zM14 444h1v1h-1zM26 444h1v1h-1zM39 444h1v1h-1zM51 444h1v1h-1zM64 444h1v1h-1zM77 444h1v1h-1zM89 444h1v1h-1zM102 444h1v1h-1zM114 444h1v1h-1zM127 444h1v1h-1zM140 444h1v1h-1zM152 444h1v1h-1zM165 444h1v1h-1zM176 444h1v1h-1zM189 444h1v1h-1zM202 444h1v1h-1zM214 444h1v1h-1zM227 444h1v1h-1zM239 444h1v1h-1zM252 444h1v1h-1zM265 444h1v1h-1zM277 444h1v1h-1zM290 444h1v1h-1zM302 444h1v1h-1zM315 444h1v1h-1zM328 444h1v1h-1zM340 444h1v1h-1zM353 444h1v1h-1zM365 444h1v1h-1zM378 444h1v1h-1zM391 444h1v1h-1zM403 444h1v1h-1zM416 444h1v1h-1zM428 444h1v1h-1zM441 444h1v1h-1zM454 444h1v1h-1zM466 444h1v1h-1zM479 444h1v1h-1zM491 444h1v1h-1zM504 444h1v1h-1zM517 444h1v1h-1zM529 444h1v1h-1zM542 444h1v1h-1zM554 444h1v1h-1zM567 444h1v1h-1zM580 444h1v1h-1zM592 444h1v1h-1zM605 444h1v1h-1zM617 444h1v1h-1zM630 444h1v1h-1zM643 444h1v1h-1zM655 444h1v1h-1zM668 444h1v1h-1zM680 444h1v1h-1zM693 444h1v1h-1zM706 444h1v1h-1zM718 444h1v1h-1zM731 444h1v1h-1zM743 444h1v1h-1zM756 444h1v1h-1zM769 444h1v1h-1zM781 444h1v1h-1zM794 444h1v1h-1zM806 444h1v1h-1zM819 444h1v1h-1zM832 444h1v1h-1zM844 444h1v1h-1zM857 444h1v1h-1zM869 444h1v1h-1zM882 444h1v1h-1zM895 444h1v1h-1zM907 444h1v1h-1zM920 444h1v1h-1zM932 444h1v1h-1zM945 444h1v1h-1zM958 444h1v1h-1zM970 444h1v1h-1zM983 444h1v1h-1zM995 444h1v1h-1zM1008 444h1v1h-1zM1021 444h1v1h-1zM1033 444h1v1h-1zM1046 444h1v1h-1zM1058 444h1v1h-1zM1071 444h1v1h-1zM1084 444h1v1h-1zM1096 444h1v1h-1zM1109 444h1v1h-1zM1121 444h1v1h-1zM1134 444h1v1h-1zM1147 444h1v1h-1zM1159 444h1v1h-1zM1172 444h1v1h-1zM1 457h1v1h-1zM14 457h1v1h-1zM26 457h1v1h-1zM39 457h1v1h-1zM51 457h1v1h-1zM64 457h1v1h-1zM77 457h1v1h-1zM89 457h1v1h-1zM102 457h1v1h-1zM114 457h1v1h-1zM127 457h1v1h-1zM140 457h1v1h-1zM152 457h1v1h-1zM165 457h1v1h-1zM176 457h1v1h-1zM189 457h1v1h-1zM202 457h1v1h-1zM214 457h1v1h-1zM227 457h1v1h-1zM239 457h1v1h-1zM252 457h1v1h-1zM265 457h1v1h-1zM277 457h1v1h-1zM290 457h1v1h-1zM302 457h1v1h-1zM315 457h1v1h-1zM328 457h1v1h-1zM340 457h1v1h-1zM353 457h1v1h-1zM365 457h1v1h-1zM378 457h1v1h-1zM391 457h1v1h-1zM403 457h1v1h-1zM416 457h1v1h-1zM428 457h1v1h-1zM441 457h1v1h-1zM454 457h1v1h-1zM466 457h1v1h-1zM479 457h1v1h-1zM491 457h1v1h-1zM504 457h1v1h-1zM517 457h1v1h-1zM529 457h1v1h-1zM542 457h1v1h-1zM554 457h1v1h-1zM567 457h1v1h-1zM580 457h1v1h-1zM592 457h1v1h-1zM605 457h1v1h-1zM617 457h1v1h-1zM630 457h1v1h-1zM643 457h1v1h-1zM655 457h1v1h-1zM668 457h1v1h-1zM680 457h1v1h-1zM693 457h1v1h-1zM706 457h1v1h-1zM718 457h1v1h-1zM731 457h1v1h-1zM743 457h1v1h-1zM756 457h1v1h-1zM769 457h1v1h-1zM781 457h1v1h-1zM794 457h1v1h-1zM806 457h1v1h-1zM819 457h1v1h-1zM832 457h1v1h-1zM844 457h1v1h-1zM857 457h1v1h-1zM869 457h1v1h-1zM882 457h1v1h-1zM895 457h1v1h-1zM907 457h1v1h-1zM920 457h1v1h-1zM932 457h1v1h-1zM945 457h1v1h-1zM958 457h1v1h-1zM970 457h1v1h-1zM983 457h1v1h-1zM995 457h1v1h-1zM1008 457h1v1h-1zM1021 457h1v1h-1zM1033 457h1v1h-1zM1046 457h1v1h-1zM1058 457h1v1h-1zM1071 457h1v1h-1zM1084 457h1v1h-1zM1096 457h1v1h-1zM1109 457h1v1h-1zM1121 457h1v1h-1zM1134 457h1v1h-1zM1147 457h1v1h-1zM1159 457h1v1h-1zM1172 457h1v1h-1zM1 469h1v1h-1zM14 469h1v1h-1zM26 469h1v1h-1zM39 469h1v1h-1zM51 469h1v1h-1zM64 469h1v1h-1zM77 469h1v1h-1zM89 469h1v1h-1zM102 469h1v1h-1zM114 469h1v1h-1zM127 469h1v1h-1zM140 469h1v1h-1zM152 469h1v1h-1zM165 469h1v1h-1zM176 469h1v1h-1zM189 469h1v1h-1zM202 469h1v1h-1zM214 469h1v1h-1zM227 469h1v1h-1zM239 469h1v1h-1zM252 469h1v1h-1zM265 469h1v1h-1zM277 469h1v1h-1zM290 469h1v1h-1zM302 469h1v1h-1zM315 469h1v1h-1zM328 469h1v1h-1zM340 469h1v1h-1zM353 469h1v1h-1zM365 469h1v1h-1zM378 469h1v1h-1zM391 469h1v1h-1zM403 469h1v1h-1zM416 469h1v1h-1zM428 469h1v1h-1zM441 469h1v1h-1zM454 469h1v1h-1zM466 469h1v1h-1zM479 469h1v1h-1zM491 469h1v1h-1zM504 469h1v1h-1zM517 469h1v1h-1zM529 469h1v1h-1zM542 469h1v1h-1zM554 469h1v1h-1zM567 469h1v1h-1zM580 469h1v1h-1zM592 469h1v1h-1zM605 469h1v1h-1zM617 469h1v1h-1zM630 469h1v1h-1zM643 469h1v1h-1zM655 469h1v1h-1zM668 469h1v1h-1zM680 469h1v1h-1zM693 469h1v1h-1zM706 469h1v1h-1zM718 469h1v1h-1zM731 469h1v1h-1zM743 469h1v1h-1zM756 469h1v1h-1zM769 469h1v1h-1zM781 469h1v1h-1zM794 469h1v1h-1zM806 469h1v1h-1zM819 469h1v1h-1zM832 469h1v1h-1zM844 469h1v1h-1zM857 469h1v1h-1zM869 469h1v1h-1zM882 469h1v1h-1zM895 469h1v1h-1zM907 469h1v1h-1zM920 469h1v1h-1zM932 469h1v1h-1zM945 469h1v1h-1zM958 469h1v1h-1zM970 469h1v1h-1zM983 469h1v1h-1zM995 469h1v1h-1zM1008 469h1v1h-1zM1021 469h1v1h-1zM1033 469h1v1h-1zM1046 469h1v1h-1zM1058 469h1v1h-1zM1071 469h1v1h-1zM1084 469h1v1h-1zM1096 469h1v1h-1zM1109 469h1v1h-1zM1121 469h1v1h-1zM1134 469h1v1h-1zM1147 469h1v1h-1zM1159 469h1v1h-1zM1172 469h1v1h-1zM1 482h1v1h-1zM14 482h1v1h-1zM26 482h1v1h-1zM39 482h1v1h-1zM51 482h1v1h-1zM64 482h1v1h-1zM77 482h1v1h-1zM89 482h1v1h-1zM102 482h1v1h-1zM114 482h1v1h-1zM127 482h1v1h-1zM140 482h1v1h-1zM152 482h1v1h-1zM165 482h1v1h-1zM176 482h1v1h-1zM189 482h1v1h-1zM202 482h1v1h-1zM214 482h1v1h-1zM227 482h1v1h-1zM239 482h1v1h-1zM252 482h1v1h-1zM265 482h1v1h-1zM277 482h1v1h-1zM290 482h1v1h-1zM302 482h1v1h-1zM315 482h1v1h-1zM328 482h1v1h-1zM340 482h1v1h-1zM353 482h1v1h-1zM365 482h1v1h-1zM378 482h1v1h-1zM391 482h1v1h-1zM403 482h1v1h-1zM416 482h1v1h-1zM428 482h1v1h-1zM441 482h1v1h-1zM454 482h1v1h-1zM466 482h1v1h-1zM479 482h1v1h-1zM491 482h1v1h-1zM504 482h1v1h-1zM517 482h1v1h-1zM529 482h1v1h-1zM542 482h1v1h-1zM554 482h1v1h-1zM567 482h1v1h-1zM580 482h1v1h-1zM592 482h1v1h-1zM605 482h1v1h-1zM617 482h1v1h-1zM630 482h1v1h-1zM643 482h1v1h-1zM655 482h1v1h-1zM668 482h1v1h-1zM680 482h1v1h-1zM693 482h1v1h-1zM706 482h1v1h-1zM718 482h1v1h-1zM731 482h1v1h-1zM743 482h1v1h-1zM756 482h1v1h-1zM769 482h1v1h-1zM781 482h1v1h-1zM794 482h1v1h-1zM806 482h1v1h-1zM819 482h1v1h-1zM832 482h1v1h-1zM844 482h1v1h-1zM857 482h1v1h-1zM869 482h1v1h-1zM882 482h1v1h-1zM895 482h1v1h-1zM907 482h1v1h-1zM920 482h1v1h-1zM932 482h1v1h-1zM945 482h1v1h-1zM958 482h1v1h-1zM970 482h1v1h-1zM983 482h1v1h-1zM995 482h1v1h-1zM1008 482h1v1h-1zM1021 482h1v1h-1zM1033 482h1v1h-1zM1046 482h1v1h-1zM1058 482h1v1h-1zM1071 482h1v1h-1zM1084 482h1v1h-1zM1096 482h1v1h-1zM1109 482h1v1h-1zM1121 482h1v1h-1zM1134 482h1v1h-1zM1147 482h1v1h-1zM1159 482h1v1h-1zM1172 482h1v1h-1zM1 495h1v1h-1zM14 495h1v1h-1zM26 495h1v1h-1zM39 495h1v1h-1zM51 495h1v1h-1zM64 495h1v1h-1zM77 495h1v1h-1zM89 495h1v1h-1zM102 495h1v1h-1zM114 495h1v1h-1zM127 495h1v1h-1zM140 495h1v1h-1zM152 495h1v1h-1zM165 495h1v1h-1zM176 495h1v1h-1zM189 495h1v1h-1zM202 495h1v1h-1zM214 495h1v1h-1zM227 495h1v1h-1zM239 495h1v1h-1zM252 495h1v1h-1zM265 495h1v1h-1zM277 495h1v1h-1zM290 495h1v1h-1zM302 495h1v1h-1zM315 495h1v1h-1zM328 495h1v1h-1zM340 495h1v1h-1zM353 495h1v1h-1zM365 495h1v1h-1zM378 495h1v1h-1zM391 495h1v1h-1zM403 495h1v1h-1zM416 495h1v1h-1zM428 495h1v1h-1zM441 495h1v1h-1zM454 495h1v1h-1zM466 495h1v1h-1zM479 495h1v1h-1zM491 495h1v1h-1zM504 495h1v1h-1zM517 495h1v1h-1zM529 495h1v1h-1zM542 495h1v1h-1zM554 495h1v1h-1zM567 495h1v1h-1zM580 495h1v1h-1zM592 495h1v1h-1zM605 495h1v1h-1zM617 495h1v1h-1zM630 495h1v1h-1zM643 495h1v1h-1zM655 495h1v1h-1zM668 495h1v1h-1zM680 495h1v1h-1zM693 495h1v1h-1zM706 495h1v1h-1zM718 495h1v1h-1zM731 495h1v1h-1zM743 495h1v1h-1zM756 495h1v1h-1zM769 495h1v1h-1zM781 495h1v1h-1zM794 495h1v1h-1zM806 495h1v1h-1zM819 495h1v1h-1zM832 495h1v1h-1zM844 495h1v1h-1zM857 495h1v1h-1zM869 495h1v1h-1zM882 495h1v1h-1zM895 495h1v1h-1zM907 495h1v1h-1zM920 495h1v1h-1zM932 495h1v1h-1zM945 495h1v1h-1zM958 495h1v1h-1zM970 495h1v1h-1zM983 495h1v1h-1zM995 495h1v1h-1zM1008 495h1v1h-1zM1021 495h1v1h-1zM1033 495h1v1h-1zM1046 495h1v1h-1zM1058 495h1v1h-1zM1071 495h1v1h-1zM1084 495h1v1h-1zM1096 495h1v1h-1zM1109 495h1v1h-1zM1121 495h1v1h-1zM1134 495h1v1h-1zM1147 495h1v1h-1zM1159 495h1v1h-1zM1172 495h1v1h-1zM1 507h1v1h-1zM14 507h1v1h-1zM26 507h1v1h-1zM39 507h1v1h-1zM51 507h1v1h-1zM64 507h1v1h-1zM77 507h1v1h-1zM89 507h1v1h-1zM102 507h1v1h-1zM114 507h1v1h-1zM127 507h1v1h-1zM140 507h1v1h-1zM152 507h1v1h-1zM165 507h1v1h-1zM176 507h1v1h-1zM189 507h1v1h-1zM202 507h1v1h-1zM214 507h1v1h-1zM227 507h1v1h-1zM239 507h1v1h-1zM252 507h1v1h-1zM265 507h1v1h-1zM277 507h1v1h-1zM290 507h1v1h-1zM302 507h1v1h-1zM315 507h1v1h-1zM328 507h1v1h-1zM340 507h1v1h-1zM353 507h1v1h-1zM365 507h1v1h-1zM378 507h1v1h-1zM391 507h1v1h-1zM403 507h1v1h-1zM416 507h1v1h-1zM428 507h1v1h-1zM441 507h1v1h-1zM454 507h1v1h-1zM466 507h1v1h-1zM479 507h1v1h-1zM491 507h1v1h-1zM504 507h1v1h-1zM517 507h1v1h-1zM529 507h1v1h-1zM542 507h1v1h-1zM554 507h1v1h-1zM567 507h1v1h-1zM580 507h1v1h-1zM592 507h1v1h-1zM605 507h1v1h-1zM617 507h1v1h-1zM630 507h1v1h-1zM643 507h1v1h-1zM655 507h1v1h-1zM668 507h1v1h-1zM680 507h1v1h-1zM693 507h1v1h-1zM706 507h1v1h-1zM718 507h1v1h-1zM731 507h1v1h-1zM743 507h1v1h-1zM756 507h1v1h-1zM769 507h1v1h-1zM781 507h1v1h-1zM794 507h1v1h-1zM806 507h1v1h-1zM819 507h1v1h-1zM832 507h1v1h-1zM844 507h1v1h-1zM857 507h1v1h-1zM869 507h1v1h-1zM882 507h1v1h-1zM895 507h1v1h-1zM907 507h1v1h-1zM920 507h1v1h-1zM932 507h1v1h-1zM945 507h1v1h-1zM958 507h1v1h-1zM970 507h1v1h-1zM983 507h1v1h-1zM995 507h1v1h-1zM1008 507h1v1h-1zM1021 507h1v1h-1zM1033 507h1v1h-1zM1046 507h1v1h-1zM1058 507h1v1h-1zM1071 507h1v1h-1zM1084 507h1v1h-1zM1096 507h1v1h-1zM1109 507h1v1h-1zM1121 507h1v1h-1zM1134 507h1v1h-1zM1147 507h1v1h-1zM1159 507h1v1h-1zM1172 507h1v1h-1zM1 520h1v1h-1zM14 520h1v1h-1zM26 520h1v1h-1zM39 520h1v1h-1zM51 520h1v1h-1zM64 520h1v1h-1zM77 520h1v1h-1zM89 520h1v1h-1zM102 520h1v1h-1zM114 520h1v1h-1zM127 520h1v1h-1zM140 520h1v1h-1zM152 520h1v1h-1zM165 520h1v1h-1zM176 520h1v1h-1zM189 520h1v1h-1zM202 520h1v1h-1zM214 520h1v1h-1zM227 520h1v1h-1zM239 520h1v1h-1zM252 520h1v1h-1zM265 520h1v1h-1zM277 520h1v1h-1zM290 520h1v1h-1zM302 520h1v1h-1zM315 520h1v1h-1zM328 520h1v1h-1zM340 520h1v1h-1zM353 520h1v1h-1zM365 520h1v1h-1zM378 520h1v1h-1zM391 520h1v1h-1zM403 520h1v1h-1zM416 520h1v1h-1zM428 520h1v1h-1zM441 520h1v1h-1zM454 520h1v1h-1zM466 520h1v1h-1zM479 520h1v1h-1zM491 520h1v1h-1zM504 520h1v1h-1zM517 520h1v1h-1zM529 520h1v1h-1zM542 520h1v1h-1zM554 520h1v1h-1zM567 520h1v1h-1zM580 520h1v1h-1zM592 520h1v1h-1zM605 520h1v1h-1zM617 520h1v1h-1zM630 520h1v1h-1zM643 520h1v1h-1zM655 520h1v1h-1zM668 520h1v1h-1zM680 520h1v1h-1zM693 520h1v1h-1zM706 520h1v1h-1zM718 520h1v1h-1zM731 520h1v1h-1zM743 520h1v1h-1zM756 520h1v1h-1zM769 520h1v1h-1zM781 520h1v1h-1zM794 520h1v1h-1zM806 520h1v1h-1zM819 520h1v1h-1zM832 520h1v1h-1zM844 520h1v1h-1zM857 520h1v1h-1zM869 520h1v1h-1zM882 520h1v1h-1zM895 520h1v1h-1zM907 520h1v1h-1zM920 520h1v1h-1zM932 520h1v1h-1zM945 520h1v1h-1zM958 520h1v1h-1zM970 520h1v1h-1zM983 520h1v1h-1zM995 520h1v1h-1zM1008 520h1v1h-1zM1021 520h1v1h-1zM1033 520h1v1h-1zM1046 520h1v1h-1zM1058 520h1v1h-1zM1071 520h1v1h-1zM1084 520h1v1h-1zM1096 520h1v1h-1zM1109 520h1v1h-1zM1121 520h1v1h-1zM1134 520h1v1h-1zM1147 520h1v1h-1zM1159 520h1v1h-1zM1172 520h1v1h-1zM1 532h1v1h-1zM14 532h1v1h-1zM26 532h1v1h-1zM39 532h1v1h-1zM51 532h1v1h-1zM64 532h1v1h-1zM77 532h1v1h-1zM89 532h1v1h-1zM102 532h1v1h-1zM114 532h1v1h-1zM127 532h1v1h-1zM140 532h1v1h-1zM152 532h1v1h-1zM165 532h1v1h-1zM176 532h1v1h-1zM189 532h1v1h-1zM202 532h1v1h-1zM214 532h1v1h-1zM227 532h1v1h-1zM239 532h1v1h-1zM252 532h1v1h-1zM265 532h1v1h-1zM277 532h1v1h-1zM290 532h1v1h-1zM302 532h1v1h-1zM315 532h1v1h-1zM328 532h1v1h-1zM340 532h1v1h-1zM353 532h1v1h-1zM365 532h1v1h-1zM378 532h1v1h-1zM391 532h1v1h-1zM403 532h1v1h-1zM416 532h1v1h-1zM428 532h1v1h-1zM441 532h1v1h-1zM454 532h1v1h-1zM466 532h1v1h-1zM479 532h1v1h-1zM491 532h1v1h-1zM504 532h1v1h-1zM517 532h1v1h-1zM529 532h1v1h-1zM542 532h1v1h-1zM554 532h1v1h-1zM567 532h1v1h-1zM580 532h1v1h-1zM592 532h1v1h-1zM605 532h1v1h-1zM617 532h1v1h-1zM630 532h1v1h-1zM643 532h1v1h-1zM655 532h1v1h-1zM668 532h1v1h-1zM680 532h1v1h-1zM693 532h1v1h-1zM706 532h1v1h-1zM718 532h1v1h-1zM731 532h1v1h-1zM743 532h1v1h-1zM756 532h1v1h-1zM769 532h1v1h-1zM781 532h1v1h-1zM794 532h1v1h-1zM806 532h1v1h-1zM819 532h1v1h-1zM832 532h1v1h-1zM844 532h1v1h-1zM857 532h1v1h-1zM869 532h1v1h-1zM882 532h1v1h-1zM895 532h1v1h-1zM907 532h1v1h-1zM920 532h1v1h-1zM932 532h1v1h-1zM945 532h1v1h-1zM958 532h1v1h-1zM970 532h1v1h-1zM983 532h1v1h-1zM995 532h1v1h-1zM1008 532h1v1h-1zM1021 532h1v1h-1zM1033 532h1v1h-1zM1046 532h1v1h-1zM1058 532h1v1h-1zM1071 532h1v1h-1zM1084 532h1v1h-1zM1096 532h1v1h-1zM1109 532h1v1h-1zM1121 532h1v1h-1zM1134 532h1v1h-1zM1147 532h1v1h-1zM1159 532h1v1h-1zM1172 532h1v1h-1zM1 545h1v1h-1zM14 545h1v1h-1zM26 545h1v1h-1zM39 545h1v1h-1zM51 545h1v1h-1zM64 545h1v1h-1zM77 545h1v1h-1zM89 545h1v1h-1zM102 545h1v1h-1zM114 545h1v1h-1zM127 545h1v1h-1zM140 545h1v1h-1zM152 545h1v1h-1zM165 545h1v1h-1zM176 545h1v1h-1zM189 545h1v1h-1zM202 545h1v1h-1zM214 545h1v1h-1zM227 545h1v1h-1zM239 545h1v1h-1zM252 545h1v1h-1zM265 545h1v1h-1zM277 545h1v1h-1zM290 545h1v1h-1zM302 545h1v1h-1zM315 545h1v1h-1zM328 545h1v1h-1zM340 545h1v1h-1zM353 545h1v1h-1zM365 545h1v1h-1zM378 545h1v1h-1zM391 545h1v1h-1zM403 545h1v1h-1zM416 545h1v1h-1zM428 545h1v1h-1zM441 545h1v1h-1zM454 545h1v1h-1zM466 545h1v1h-1zM479 545h1v1h-1zM491 545h1v1h-1zM504 545h1v1h-1zM517 545h1v1h-1zM529 545h1v1h-1zM542 545h1v1h-1zM554 545h1v1h-1zM567 545h1v1h-1zM580 545h1v1h-1zM592 545h1v1h-1zM605 545h1v1h-1zM617 545h1v1h-1zM630 545h1v1h-1zM643 545h1v1h-1zM655 545h1v1h-1zM668 545h1v1h-1zM680 545h1v1h-1zM693 545h1v1h-1zM706 545h1v1h-1zM718 545h1v1h-1zM731 545h1v1h-1zM743 545h1v1h-1zM756 545h1v1h-1zM769 545h1v1h-1zM781 545h1v1h-1zM794 545h1v1h-1zM806 545h1v1h-1zM819 545h1v1h-1zM832 545h1v1h-1zM844 545h1v1h-1zM857 545h1v1h-1zM869 545h1v1h-1zM882 545h1v1h-1zM895 545h1v1h-1zM907 545h1v1h-1zM920 545h1v1h-1zM932 545h1v1h-1zM945 545h1v1h-1zM958 545h1v1h-1zM970 545h1v1h-1zM983 545h1v1h-1zM995 545h1v1h-1zM1008 545h1v1h-1zM1021 545h1v1h-1zM1033 545h1v1h-1zM1046 545h1v1h-1zM1058 545h1v1h-1zM1071 545h1v1h-1zM1084 545h1v1h-1zM1096 545h1v1h-1zM1109 545h1v1h-1zM1121 545h1v1h-1zM1134 545h1v1h-1zM1147 545h1v1h-1zM1159 545h1v1h-1zM1172 545h1v1h-1zM1 558h1v1h-1zM14 558h1v1h-1zM26 558h1v1h-1zM39 558h1v1h-1zM51 558h1v1h-1zM64 558h1v1h-1zM77 558h1v1h-1zM89 558h1v1h-1zM102 558h1v1h-1zM114 558h1v1h-1zM127 558h1v1h-1zM140 558h1v1h-1zM152 558h1v1h-1zM165 558h1v1h-1zM176 558h1v1h-1zM189 558h1v1h-1zM202 558h1v1h-1zM214 558h1v1h-1zM227 558h1v1h-1zM239 558h1v1h-1zM252 558h1v1h-1zM265 558h1v1h-1zM277 558h1v1h-1zM290 558h1v1h-1zM302 558h1v1h-1zM315 558h1v1h-1zM328 558h1v1h-1zM340 558h1v1h-1zM353 558h1v1h-1zM365 558h1v1h-1zM378 558h1v1h-1zM391 558h1v1h-1zM403 558h1v1h-1zM416 558h1v1h-1zM428 558h1v1h-1zM441 558h1v1h-1zM454 558h1v1h-1zM466 558h1v1h-1zM479 558h1v1h-1zM491 558h1v1h-1zM504 558h1v1h-1zM517 558h1v1h-1zM529 558h1v1h-1zM542 558h1v1h-1zM554 558h1v1h-1zM567 558h1v1h-1zM580 558h1v1h-1zM592 558h1v1h-1zM605 558h1v1h-1zM617 558h1v1h-1zM630 558h1v1h-1zM643 558h1v1h-1zM655 558h1v1h-1zM668 558h1v1h-1zM680 558h1v1h-1zM693 558h1v1h-1zM706 558h1v1h-1zM718 558h1v1h-1zM731 558h1v1h-1zM743 558h1v1h-1zM756 558h1v1h-1zM769 558h1v1h-1zM781 558h1v1h-1zM794 558h1v1h-1zM806 558h1v1h-1zM819 558h1v1h-1zM832 558h1v1h-1zM844 558h1v1h-1zM857 558h1v1h-1zM869 558h1v1h-1zM882 558h1v1h-1zM895 558h1v1h-1zM907 558h1v1h-1zM920 558h1v1h-1zM932 558h1v1h-1zM945 558h1v1h-1zM958 558h1v1h-1zM970 558h1v1h-1zM983 558h1v1h-1zM995 558h1v1h-1zM1008 558h1v1h-1zM1021 558h1v1h-1zM1033 558h1v1h-1zM1046 558h1v1h-1zM1058 558h1v1h-1zM1071 558h1v1h-1zM1084 558h1v1h-1zM1096 558h1v1h-1zM1109 558h1v1h-1zM1121 558h1v1h-1zM1134 558h1v1h-1zM1147 558h1v1h-1zM1159 558h1v1h-1zM1172 558h1v1h-1zM1 570h1v1h-1zM14 570h1v1h-1zM26 570h1v1h-1zM39 570h1v1h-1zM51 570h1v1h-1zM64 570h1v1h-1zM77 570h1v1h-1zM89 570h1v1h-1zM102 570h1v1h-1zM114 570h1v1h-1zM127 570h1v1h-1zM140 570h1v1h-1zM152 570h1v1h-1zM165 570h1v1h-1zM176 570h1v1h-1zM189 570h1v1h-1zM202 570h1v1h-1zM214 570h1v1h-1zM227 570h1v1h-1zM239 570h1v1h-1zM252 570h1v1h-1zM265 570h1v1h-1zM277 570h1v1h-1zM290 570h1v1h-1zM302 570h1v1h-1zM315 570h1v1h-1zM328 570h1v1h-1zM340 570h1v1h-1zM353 570h1v1h-1zM365 570h1v1h-1zM378 570h1v1h-1zM391 570h1v1h-1zM403 570h1v1h-1zM416 570h1v1h-1zM428 570h1v1h-1zM441 570h1v1h-1zM454 570h1v1h-1zM466 570h1v1h-1zM479 570h1v1h-1zM491 570h1v1h-1zM504 570h1v1h-1zM517 570h1v1h-1zM529 570h1v1h-1zM542 570h1v1h-1zM554 570h1v1h-1zM567 570h1v1h-1zM580 570h1v1h-1zM592 570h1v1h-1zM605 570h1v1h-1zM617 570h1v1h-1zM630 570h1v1h-1zM643 570h1v1h-1zM655 570h1v1h-1zM668 570h1v1h-1zM680 570h1v1h-1zM693 570h1v1h-1zM706 570h1v1h-1zM718 570h1v1h-1zM731 570h1v1h-1zM743 570h1v1h-1zM756 570h1v1h-1zM769 570h1v1h-1zM781 570h1v1h-1zM794 570h1v1h-1zM806 570h1v1h-1zM819 570h1v1h-1zM832 570h1v1h-1zM844 570h1v1h-1zM857 570h1v1h-1zM869 570h1v1h-1zM882 570h1v1h-1zM895 570h1v1h-1zM907 570h1v1h-1zM920 570h1v1h-1zM932 570h1v1h-1zM945 570h1v1h-1zM958 570h1v1h-1zM970 570h1v1h-1zM983 570h1v1h-1zM995 570h1v1h-1zM1008 570h1v1h-1zM1021 570h1v1h-1zM1033 570h1v1h-1zM1046 570h1v1h-1zM1058 570h1v1h-1zM1071 570h1v1h-1zM1084 570h1v1h-1zM1096 570h1v1h-1zM1109 570h1v1h-1zM1121 570h1v1h-1zM1134 570h1v1h-1zM1147 570h1v1h-1zM1159 570h1v1h-1zM1172 570h1v1h-1zM1 583h1v1h-1zM14 583h1v1h-1zM26 583h1v1h-1zM39 583h1v1h-1zM51 583h1v1h-1zM64 583h1v1h-1zM77 583h1v1h-1zM89 583h1v1h-1zM102 583h1v1h-1zM114 583h1v1h-1zM127 583h1v1h-1zM140 583h1v1h-1zM152 583h1v1h-1zM165 583h1v1h-1zM176 583h1v1h-1zM189 583h1v1h-1zM202 583h1v1h-1zM214 583h1v1h-1zM227 583h1v1h-1zM239 583h1v1h-1zM252 583h1v1h-1zM265 583h1v1h-1zM277 583h1v1h-1zM290 583h1v1h-1zM302 583h1v1h-1zM315 583h1v1h-1zM328 583h1v1h-1zM340 583h1v1h-1zM353 583h1v1h-1zM365 583h1v1h-1zM378 583h1v1h-1zM391 583h1v1h-1zM403 583h1v1h-1zM416 583h1v1h-1zM428 583h1v1h-1zM441 583h1v1h-1zM454 583h1v1h-1zM466 583h1v1h-1zM479 583h1v1h-1zM491 583h1v1h-1zM504 583h1v1h-1zM517 583h1v1h-1zM529 583h1v1h-1zM542 583h1v1h-1zM554 583h1v1h-1zM567 583h1v1h-1zM580 583h1v1h-1zM592 583h1v1h-1zM605 583h1v1h-1zM617 583h1v1h-1zM630 583h1v1h-1zM643 583h1v1h-1zM655 583h1v1h-1zM668 583h1v1h-1zM680 583h1v1h-1zM693 583h1v1h-1zM706 583h1v1h-1zM718 583h1v1h-1zM731 583h1v1h-1zM743 583h1v1h-1zM756 583h1v1h-1zM769 583h1v1h-1zM781 583h1v1h-1zM794 583h1v1h-1zM806 583h1v1h-1zM819 583h1v1h-1zM832 583h1v1h-1zM844 583h1v1h-1zM857 583h1v1h-1zM869 583h1v1h-1zM882 583h1v1h-1zM895 583h1v1h-1zM907 583h1v1h-1zM920 583h1v1h-1zM932 583h1v1h-1zM945 583h1v1h-1zM958 583h1v1h-1zM970 583h1v1h-1zM983 583h1v1h-1zM995 583h1v1h-1zM1008 583h1v1h-1zM1021 583h1v1h-1zM1033 583h1v1h-1zM1046 583h1v1h-1zM1058 583h1v1h-1zM1071 583h1v1h-1zM1084 583h1v1h-1zM1096 583h1v1h-1zM1109 583h1v1h-1zM1121 583h1v1h-1zM1134 583h1v1h-1zM1147 583h1v1h-1zM1159 583h1v1h-1zM1172 583h1v1h-1zM1 595h1v1h-1zM14 595h1v1h-1zM26 595h1v1h-1zM39 595h1v1h-1zM51 595h1v1h-1zM64 595h1v1h-1zM77 595h1v1h-1zM89 595h1v1h-1zM102 595h1v1h-1zM114 595h1v1h-1zM127 595h1v1h-1zM140 595h1v1h-1zM152 595h1v1h-1zM165 595h1v1h-1zM176 595h1v1h-1zM189 595h1v1h-1zM202 595h1v1h-1zM214 595h1v1h-1zM227 595h1v1h-1zM239 595h1v1h-1zM252 595h1v1h-1zM265 595h1v1h-1zM277 595h1v1h-1zM290 595h1v1h-1zM302 595h1v1h-1zM315 595h1v1h-1zM328 595h1v1h-1zM340 595h1v1h-1zM353 595h1v1h-1zM365 595h1v1h-1zM378 595h1v1h-1zM391 595h1v1h-1zM403 595h1v1h-1zM416 595h1v1h-1zM428 595h1v1h-1zM441 595h1v1h-1zM454 595h1v1h-1zM466 595h1v1h-1zM479 595h1v1h-1zM491 595h1v1h-1zM504 595h1v1h-1zM517 595h1v1h-1zM529 595h1v1h-1zM542 595h1v1h-1zM554 595h1v1h-1zM567 595h1v1h-1zM580 595h1v1h-1zM592 595h1v1h-1zM605 595h1v1h-1zM617 595h1v1h-1zM630 595h1v1h-1zM643 595h1v1h-1zM655 595h1v1h-1zM668 595h1v1h-1zM680 595h1v1h-1zM693 595h1v1h-1zM706 595h1v1h-1zM718 595h1v1h-1zM731 595h1v1h-1zM743 595h1v1h-1zM756 595h1v1h-1zM769 595h1v1h-1zM781 595h1v1h-1zM794 595h1v1h-1zM806 595h1v1h-1zM819 595h1v1h-1zM832 595h1v1h-1zM844 595h1v1h-1zM857 595h1v1h-1zM869 595h1v1h-1zM882 595h1v1h-1zM895 595h1v1h-1zM907 595h1v1h-1zM920 595h1v1h-1zM932 595h1v1h-1zM945 595h1v1h-1zM958 595h1v1h-1zM970 595h1v1h-1zM983 595h1v1h-1zM995 595h1v1h-1zM1008 595h1v1h-1zM1021 595h1v1h-1zM1033 595h1v1h-1zM1046 595h1v1h-1zM1058 595h1v1h-1zM1071 595h1v1h-1zM1084 595h1v1h-1zM1096 595h1v1h-1zM1109 595h1v1h-1zM1121 595h1v1h-1zM1134 595h1v1h-1zM1147 595h1v1h-1zM1159 595h1v1h-1zM1172 595h1v1h-1zM1 608h1v1h-1zM14 608h1v1h-1zM26 608h1v1h-1zM39 608h1v1h-1zM51 608h1v1h-1zM64 608h1v1h-1zM77 608h1v1h-1zM89 608h1v1h-1zM102 608h1v1h-1zM114 608h1v1h-1zM127 608h1v1h-1zM140 608h1v1h-1zM152 608h1v1h-1zM165 608h1v1h-1zM176 608h1v1h-1zM189 608h1v1h-1zM202 608h1v1h-1zM214 608h1v1h-1zM227 608h1v1h-1zM239 608h1v1h-1zM252 608h1v1h-1zM265 608h1v1h-1zM277 608h1v1h-1zM290 608h1v1h-1zM302 608h1v1h-1zM315 608h1v1h-1zM328 608h1v1h-1zM340 608h1v1h-1zM353 608h1v1h-1zM365 608h1v1h-1zM378 608h1v1h-1zM391 608h1v1h-1zM403 608h1v1h-1zM416 608h1v1h-1zM428 608h1v1h-1zM441 608h1v1h-1zM454 608h1v1h-1zM466 608h1v1h-1zM479 608h1v1h-1zM491 608h1v1h-1zM504 608h1v1h-1zM517 608h1v1h-1zM529 608h1v1h-1zM542 608h1v1h-1zM554 608h1v1h-1zM567 608h1v1h-1zM580 608h1v1h-1zM592 608h1v1h-1zM605 608h1v1h-1zM617 608h1v1h-1zM630 608h1v1h-1zM643 608h1v1h-1zM655 608h1v1h-1zM668 608h1v1h-1zM680 608h1v1h-1zM693 608h1v1h-1zM706 608h1v1h-1zM718 608h1v1h-1zM731 608h1v1h-1zM743 608h1v1h-1zM756 608h1v1h-1zM769 608h1v1h-1zM781 608h1v1h-1zM794 608h1v1h-1zM806 608h1v1h-1zM819 608h1v1h-1zM832 608h1v1h-1zM844 608h1v1h-1zM857 608h1v1h-1zM869 608h1v1h-1zM882 608h1v1h-1zM895 608h1v1h-1zM907 608h1v1h-1zM920 608h1v1h-1zM932 608h1v1h-1zM945 608h1v1h-1zM958 608h1v1h-1zM970 608h1v1h-1zM983 608h1v1h-1zM995 608h1v1h-1zM1008 608h1v1h-1zM1021 608h1v1h-1zM1033 608h1v1h-1zM1046 608h1v1h-1zM1058 608h1v1h-1zM1071 608h1v1h-1zM1084 608h1v1h-1zM1096 608h1v1h-1zM1109 608h1v1h-1zM1121 608h1v1h-1zM1134 608h1v1h-1zM1147 608h1v1h-1zM1159 608h1v1h-1zM1172 608h1v1h-1zM1 621h1v1h-1zM14 621h1v1h-1zM26 621h1v1h-1zM39 621h1v1h-1zM51 621h1v1h-1zM64 621h1v1h-1zM77 621h1v1h-1zM89 621h1v1h-1zM102 621h1v1h-1zM114 621h1v1h-1zM127 621h1v1h-1zM140 621h1v1h-1zM152 621h1v1h-1zM165 621h1v1h-1zM176 621h1v1h-1zM189 621h1v1h-1zM202 621h1v1h-1zM214 621h1v1h-1zM227 621h1v1h-1zM239 621h1v1h-1zM252 621h1v1h-1zM265 621h1v1h-1zM277 621h1v1h-1zM290 621h1v1h-1zM302 621h1v1h-1zM315 621h1v1h-1zM328 621h1v1h-1zM340 621h1v1h-1zM353 621h1v1h-1zM365 621h1v1h-1zM378 621h1v1h-1zM391 621h1v1h-1zM403 621h1v1h-1zM416 621h1v1h-1zM428 621h1v1h-1zM441 621h1v1h-1zM454 621h1v1h-1zM466 621h1v1h-1zM479 621h1v1h-1zM491 621h1v1h-1zM504 621h1v1h-1zM517 621h1v1h-1zM529 621h1v1h-1zM542 621h1v1h-1zM554 621h1v1h-1zM567 621h1v1h-1zM580 621h1v1h-1zM592 621h1v1h-1zM605 621h1v1h-1zM617 621h1v1h-1zM630 621h1v1h-1zM643 621h1v1h-1zM655 621h1v1h-1zM668 621h1v1h-1zM680 621h1v1h-1zM693 621h1v1h-1zM706 621h1v1h-1zM718 621h1v1h-1zM731 621h1v1h-1zM743 621h1v1h-1zM756 621h1v1h-1zM769 621h1v1h-1zM781 621h1v1h-1zM794 621h1v1h-1zM806 621h1v1h-1zM819 621h1v1h-1zM832 621h1v1h-1zM844 621h1v1h-1zM857 621h1v1h-1zM869 621h1v1h-1zM882 621h1v1h-1zM895 621h1v1h-1zM907 621h1v1h-1zM920 621h1v1h-1zM932 621h1v1h-1zM945 621h1v1h-1zM958 621h1v1h-1zM970 621h1v1h-1zM983 621h1v1h-1zM995 621h1v1h-1zM1008 621h1v1h-1zM1021 621h1v1h-1zM1033 621h1v1h-1zM1046 621h1v1h-1zM1058 621h1v1h-1zM1071 621h1v1h-1zM1084 621h1v1h-1zM1096 621h1v1h-1zM1109 621h1v1h-1zM1121 621h1v1h-1zM1134 621h1v1h-1zM1147 621h1v1h-1zM1159 621h1v1h-1zM1172 621h1v1h-1z" fill="#000000"/>
<rect x="243" y="28" width="29" height="2" fill="#004200"/>
<rect x="243" y="79" width="29" height="2" fill="#004200"/>
<rect x="243" y="154" width="29" height="2" fill="#004200"/>
<rect x="220" y="167" width="52" height="2" fill="#004200"/>
<rect x="220" y="117" width="2" height="52" fill="#004200"/>
<rect x="243" y="217" width="29" height="2" fill="#004200"/>
<rect x="243" y="230" width="29" height="2" fill="#004200"/>
<rect x="243" y="243" width="29" height="2" fill="#004200"/>
<rect x="243" y="255" width="29" height="2" fill="#004200"/>
<rect x="243" y="268" width="29" height="2" fill="#004200"/>
<rect x="243" y="280" width="29" height="2" fill="#004200"/>
<rect x="243" y="292" width="29" height="2" fill="#004200"/>
<rect x="243" y="305" width="29" height="2" fill="#004200"/>
<rect x="497" y="3" width="30" height="2" fill="#004200"/>
<rect x="497" y="16" width="30" height="2" fill="#004200"/>
<rect x="497" y="28" width="30" height="2" fill="#004200"/>
<rect x="497" y="41" width="30" height="2" fill="#004200"/>
<rect x="497" y="54" width="30" height="2" fill="#004200"/>
<rect x="497" y="66" width="30" height="2" fill="#004200"/>
<rect x="497" y="79" width="30" height="2" fill="#004200"/>
<rect x="497" y="104" width="30" height="2" fill="#004200"/>
<rect x="497" y="117" width="30" height="2" fill="#004200"/>
<rect x="497" y="129" width="30" height="2" fill="#004200"/>
<rect x="497" y="142" width="30" height="2" fill="#004200"/>
<rect x="497" y="154" width="30" height="2" fill="#004200"/>
<rect x="497" y="167" width="30" height="2" fill="#004200"/>
<rect x="497" y="180" width="30" height="2" fill="#004200"/>
<rect x="497" y="192" width="30" height="2" fill="#004200"/>
<rect x="497" y="217" width="30" height="2" fill="#004200"/>
<rect x="497" y="243" width="30" height="2" fill="#004200"/>
<rect x="497" y="255" width="30" height="2" fill="#004200"/>
<rect x="497" y="292" width="30" height="2" fill="#004200"/>
<rect x="497" y="305" width="30" height="2" fill="#004200"/>
<rect x="113" y="123" width="2" height="65" fill="#004200"/>
<rect x="25" y="161" width="90" height="2" fill="#004200"/>
<rect x="25" y="161" width="2" height="27" fill="#004200"/>
<rect x="25" y="261" width="2" height="39" fill="#004200"/>
<rect x="25" y="298" width="90" height="2" fill="#004200"/>
<rect x="113" y="261" width="2" height="64" fill="#004200"/>
<rect x="102" y="323" width="26" height="2" fill="#004200"/>
<rect x="108" y="329" width="14" height="2" fill="#004200"/>
<rect x="113" y="336" width="4" height="2" fill="#004200"/>
<rect x="50" y="224" width="30" height="2" fill="#004200"/>
<rect x="139" y="224" width="28" height="2" fill="#004200"/>
<rect x="759" y="79" width="30" height="2" fill="#004200"/>
<rect x="913" y="79" width="29" height="2" fill="#004200"/>
<rect x="759" y="91" width="30" height="2" fill="#004200"/>
<rect x="913" y="91" width="29" height="2" fill="#004200"/>
<rect x="759" y="104" width="30" height="2" fill="#004200"/>
<rect x="913" y="104" width="29" height="2" fill="#004200"/>
<rect x="759" y="117" width="30" height="2" fill="#004200"/>
<rect x="759" y="129" width="30" height="2" fill="#004200"/>
<rect x="759" y="142" width="30" height="2" fill="#004200"/>
<rect x="759" y="154" width="30" height="2" fill="#004200"/>
<rect x="759" y="167" width="30" height="2" fill="#004200"/>
<rect x="736" y="192" width="53" height="2" fill="#004200"/>
<rect x="736" y="192" width="2" height="40" fill="#004200"/>
<rect x="725" y="230" width="26" height="2" fill="#004200"/>
<rect x="731" y="236" width="14" height="2" fill="#004200"/>
<rect x="736" y="243" width="4" height="2" fill="#004200"/>
<rect x="766" y="205" width="23" height="2" fill="#004200"/>
<rect x="887" y="236" width="65" height="2" fill="#004200"/>
<rect x="887" y="236" width="2" height="22" fill="#004200"/>
<rect x="950" y="236" width="2" height="15" fill="#004200"/>
<rect x="950" y="299" width="2" height="14" fill="#004200"/>
<rect x="887" y="292" width="2" height="21" fill="#004200"/>
<rect x="887" y="311" width="93" height="2" fill="#004200"/>
<rect x="950" y="311" width="2" height="13" fill="#004200"/>
<rect x="950" y="386" width="2" height="15" fill="#004200"/>
<rect x="939" y="399" width="26" height="2" fill="#004200"/>
<rect x="945" y="405" width="14" height="2" fill="#004200"/>
<rect x="950" y="412" width="4" height="2" fill="#004200"/>
<rect x="1147" y="0" width="1" height="624" fill="#0000d0"/>
<rect x="1045" y="203" width="2" height="104" fill="#004200"/>
<rect x="1045" y="356" width="2" height="14" fill="#004200"/>
<rect x="1146" y="203" width="2" height="104" fill="#004200"/>
<rect x="1146" y="356" width="2" height="14" fill="#004200"/>
<rect x="1045" y="368" width="103" height="2" fill="#004200"/>
<rect x="1045" y="243" width="40" height="2" fill="#004200"/>
<rect x="1134" y="243" width="14" height="2" fill="#004200"/>
<rect x="1108" y="368" width="2" height="27" fill="#004200"/>
<rect x="1097" y="393" width="26" height="2" fill="#004200"/>
<rect x="1103" y="399" width="14" height="2" fill="#004200"/>
<rect x="1108" y="406" width="4" height="2" fill="#004200"/>
<rect x="36" y="456" width="92" height="2" fill="#004200"/>
<rect x="113" y="481" width="15" height="2" fill="#004200"/>
<rect x="113" y="481" width="2" height="65" fill="#004200"/>
<rect x="113" y="544" width="15" height="2" fill="#004200"/>
<rect x="36" y="512" width="79" height="2" fill="#004200"/>
<rect x="36" y="569" width="92" height="2" fill="#004200"/>
<rect x="251" y="468" width="109" height="2" fill="#004200"/>
<rect x="308" y="368" width="2" height="102" fill="#004200"/>
<rect x="308" y="368" width="348" height="2" fill="#004200"/>
<rect x="654" y="368" width="2" height="52" fill="#004200"/>
<rect x="585" y="418" width="71" height="2" fill="#004200"/>
<rect x="358" y="468" width="2" height="91" fill="#004200"/>
<rect x="358" y="557" width="53" height="2" fill="#004200"/>
<rect x="251" y="557" width="8" height="2" fill="#004200"/>
<rect x="257" y="374" width="2" height="185" fill="#004200"/>
<rect x="257" y="374" width="368" height="2" fill="#004200"/>
<rect x="623" y="374" width="2" height="222" fill="#004200"/>
<rect x="585" y="594" width="40" height="2" fill="#004200"/>
<rect x="388" y="405" width="23" height="2" fill="#004200"/>
<rect x="388" y="418" width="23" height="2" fill="#004200"/>
<rect x="388" y="519" width="23" height="2" fill="#004200"/>
<rect x="388" y="531" width="23" height="2" fill="#004200"/>
<rect x="388" y="544" width="23" height="2" fill="#004200"/>
<rect x="379" y="582" width="32" height="2" fill="#004200"/>
<rect x="396" y="594" width="15" height="2" fill="#004200"/>
<rect x="396" y="594" width="2" height="21" fill="#004200"/>
<rect x="385" y="613" width="26" height="2" fill="#004200"/>
<rect x="391" y="619" width="14" height="2" fill="#004200"/>
<rect x="396" y="626" width="4" height="2" fill="#004200"/>
<rect x="585" y="405" width="22" height="2" fill="#004200"/>
<rect x="585" y="468" width="22" height="2" fill="#004200"/>
<rect x="585" y="481" width="22" height="2" fill="#004200"/>
<rect x="585" y="494" width="22" height="2" fill="#004200"/>
<rect x="585" y="506" width="22" height="2" fill="#004200"/>
<rect x="585" y="519" width="22" height="2" fill="#004200"/>
<rect x="585" y="531" width="22" height="2" fill="#004200"/>
<rect x="585" y="544" width="22" height="2" fill="#004200"/>
<rect x="585" y="557" width="22" height="2" fill="#004200"/>
<rect x="585" y="443" width="65" height="2" fill="#004200"/>
<rect x="648" y="431" width="2" height="27" fill="#004200"/>
<rect x="648" y="431" width="8" height="2" fill="#004200"/>
<rect x="648" y="456" width="8" height="2" fill="#004200"/>
<rect x="781" y="443" width="29" height="2" fill="#004200"/>
<rect x="919" y="512" width="8" height="2" fill="#004200"/>
<rect x="919" y="456" width="2" height="58" fill="#004200"/>
<rect x="919" y="456" width="197" height="2" fill="#004200"/>
<rect x="1114" y="456" width="2" height="109" fill="#004200"/>
<rect x="1051" y="563" width="65" height="2" fill="#004200"/>
<rect x="1051" y="512" width="30" height="2" fill="#004200"/>
<rect x="898" y="538" width="29" height="2" fill="#004200"/>
<rect x="296" y="-10" width="177" height="328" fill="#c8c8aa" stroke="#800000" stroke-width="2"/>
<rect x="21" y="206" width="10" height="38" fill="#c8c8aa" stroke="#800000" stroke-width="2"/>
<rect x="109" y="206" width="11" height="38" fill="#c8c8aa" stroke="#800000" stroke-width="2"/>
<rect x="813" y="67" width="75" height="151" fill="#c8c8aa" stroke="#800000" stroke-width="2"/>
<rect x="939" y="265" width="25" height="6" fill="#800000" stroke="#800000" stroke-width="2"/>
<rect x="939" y="279" width="25" height="6" fill="#c8c8aa" stroke="#800000" stroke-width="2"/>
<rect x="872" y="266" width="5" height="18" fill="#c8c8aa" stroke="#800000" stroke-width="2"/>
<rect x="946" y="337" width="10" height="38" fill="#c8c8aa" stroke="#800000" stroke-width="2"/>
<rect x="1103" y="231" width="12" height="24" fill="#c8c8aa" stroke="#800000" stroke-width="2"/>
<rect x="435" y="394" width="126" height="214" fill="#c8c8aa" stroke="#800000" stroke-width="2"/>
<rect x="951" y="501" width="76" height="75" fill="#c8c8aa" stroke="#800000" stroke-width="2"/>
<rect x="271" y="28" width="26" height="2" fill="#800000"/>
<rect x="271" y="79" width="26" height="2" fill="#800000"/>
<rect x="271" y="142" width="26" height="2" fill="#800000"/>
<rect x="271" y="154" width="26" height="2" fill="#800000"/>
<rect x="271" y="167" width="26" height="2" fill="#800000"/>
<rect x="271" y="217" width="26" height="2" fill="#800000"/>
<rect x="271" y="230" width="26" height="2" fill="#800000"/>
<rect x="271" y="243" width="26" height="2" fill="#800000"/>
<rect x="271" y="255" width="26" height="2" fill="#800000"/>
<rect x="271" y="268" width="26" height="2" fill="#800000"/>
<rect x="271" y="280" width="26" height="2" fill="#800000"/>
<rect x="271" y="292" width="26" height="2" fill="#800000"/>
<rect x="271" y="305" width="26" height="2" fill="#800000"/>
<rect x="473" y="3" width="26" height="2" fill="#800000"/>
<rect x="473" y="16" width="26" height="2" fill="#800000"/>
<rect x="473" y="28" width="26" height="2" fill="#800000"/>
<rect x="473" y="41" width="26" height="2" fill="#800000"/>
<rect x="473" y="54" width="26" height="2" fill="#800000"/>
<rect x="473" y="66" width="26" height="2" fill="#800000"/>
<rect x="473" y="79" width="26" height="2" fill="#800000"/>
<rect x="473" y="104" width="26" height="2" fill="#800000"/>
<rect x="473" y="117" width="26" height="2" fill="#800000"/>
<rect x="473" y="129" width="26" height="2" fill="#800000"/>
<rect x="473" y="142" width="26" height="2" fill="#800000"/>
<rect x="473" y="154" width="26" height="2" fill="#800000"/>
<rect x="473" y="167" width="26" height="2" fill="#800000"/>
<rect x="473" y="180" width="26" height="2" fill="#800000"/>
<rect x="473" y="192" width="26" height="2" fill="#800000"/>
<rect x="473" y="217" width="26" height="2" fill="#800000"/>
<rect x="473" y="230" width="26" height="2" fill="#800000"/>
<rect x="473" y="243" width="26" height="2" fill="#800000"/>
<rect x="473" y="255" width="26" height="2" fill="#800000"/>
<rect x="473" y="268" width="26" height="2" fill="#800000"/>
<rect x="473" y="280" width="26" height="2" fill="#800000"/>
<rect x="473" y="292" width="26" height="2" fill="#800000"/>
<rect x="473" y="305" width="26" height="2" fill="#800000"/>
<rect x="25" y="187" width="2" height="19" fill="#800000"/>
<rect x="25" y="244" width="2" height="18" fill="#800000"/>
<rect x="113" y="187" width="2" height="19" fill="#800000"/>
<rect x="113" y="244" width="2" height="18" fill="#800000"/>
<rect x="37" y="239" width="3" height="2" fill="#800000"/>
<rect x="38" y="225" width="2" height="15" fill="#800000"/>
<rect x="39" y="224" width="13" height="2" fill="#800000"/>
<rect x="125" y="220" width="3" height="2" fill="#800000"/>
<rect x="126" y="220" width="2" height="5" fill="#800000"/>
<rect x="126" y="224" width="15" height="2" fill="#800000"/>
<rect x="788" y="79" width="26" height="2" fill="#800000"/>
<rect x="888" y="79" width="27" height="2" fill="#800000"/>
<rect x="788" y="91" width="26" height="2" fill="#800000"/>
<rect x="888" y="91" width="27" height="2" fill="#800000"/>
<rect x="788" y="104" width="26" height="2" fill="#800000"/>
<rect x="888" y="104" width="27" height="2" fill="#800000"/>
<rect x="788" y="117" width="26" height="2" fill="#800000"/>
<rect x="888" y="117" width="27" height="2" fill="#800000"/>
<rect x="788" y="129" width="26" height="2" fill="#800000"/>
<rect x="888" y="129" width="27" height="2" fill="#800000"/>
<rect x="788" y="142" width="26" height="2" fill="#800000"/>
<rect x="888" y="142" width="27" height="2" fill="#800000"/>
<rect x="788" y="154" width="26" height="2" fill="#800000"/>
<rect x="888" y="154" width="27" height="2" fill="#800000"/>
<rect x="788" y="167" width="26" height="2" fill="#800000"/>
<rect x="888" y="167" width="27" height="2" fill="#800000"/>
<rect x="788" y="192" width="26" height="2" fill="#800000"/>
<rect x="788" y="205" width="26" height="2" fill="#800000"/>
<rect x="950" y="199" width="2" height="38" fill="#ff0000"/>
<rect x="950" y="250" width="2" height="15" fill="#800000"/>
<rect x="950" y="286" width="2" height="14" fill="#800000"/>
<rect x="877" y="258" width="2" height="34" fill="#800000"/>
<rect x="950" y="323" width="2" height="14" fill="#800000"/>
<rect x="950" y="375" width="2" height="12" fill="#800000"/>
<rect x="1045" y="306" width="2" height="21" fill="#800000"/>
<rect x="1033" y="326" width="26" height="2" fill="#800000"/>
<rect x="1033" y="334" width="26" height="2" fill="#800000"/>
<rect x="1045" y="335" width="2" height="21" fill="#800000"/>
<rect x="1146" y="306" width="2" height="21" fill="#800000"/>
<rect x="1134" y="326" width="26" height="2" fill="#800000"/>
<rect x="1134" y="334" width="26" height="2" fill="#800000"/>
<rect x="1146" y="335" width="2" height="21" fill="#800000"/>
<rect x="1084" y="243" width="13" height="2" fill="#800000"/>
<rect x="1095" y="225" width="2" height="37" fill="#800000"/>
<rect x="1120" y="225" width="2" height="37" fill="#800000"/>
<rect x="1121" y="243" width="14" height="2" fill="#800000"/>
<rect x="127" y="456" width="26" height="2" fill="#800000"/>
<rect x="127" y="481" width="26" height="2" fill="#800000"/>
<rect x="235" y="468" width="18" height="2" fill="#800000"/>
<rect x="127" y="544" width="26" height="2" fill="#800000"/>
<rect x="127" y="569" width="26" height="2" fill="#800000"/>
<rect x="235" y="557" width="18" height="2" fill="#800000"/>
<rect x="410" y="405" width="26" height="2" fill="#800000"/>
<rect x="410" y="418" width="26" height="2" fill="#800000"/>
<rect x="410" y="431" width="26" height="2" fill="#800000"/>
<rect x="410" y="443" width="26" height="2" fill="#800000"/>
<rect x="410" y="456" width="26" height="2" fill="#800000"/>
<rect x="410" y="468" width="26" height="2" fill="#800000"/>
<rect x="410" y="481" width="26" height="2" fill="#800000"/>
<rect x="410" y="494" width="26" height="2" fill="#800000"/>
<rect x="410" y="519" width="26" height="2" fill="#800000"/>
<rect x="410" y="531" width="26" height="2" fill="#800000"/>
<rect x="410" y="544" width="26" height="2" fill="#800000"/>
<rect x="410" y="557" width="26" height="2" fill="#800000"/>
<rect x="410" y="582" width="26" height="2" fill="#800000"/>
<rect x="410" y="594" width="26" height="2" fill="#800000"/>
<rect x="561" y="405" width="26" height="2" fill="#800000"/>
<rect x="561" y="418" width="26" height="2" fill="#800000"/>
<rect x="561" y="443" width="26" height="2" fill="#800000"/>
<rect x="561" y="468" width="26" height="2" fill="#800000"/>
<rect x="561" y="481" width="26" height="2" fill="#800000"/>
<rect x="561" y="494" width="26" height="2" fill="#800000"/>
<rect x="561" y="506" width="26" height="2" fill="#800000"/>
<rect x="561" y="519" width="26" height="2" fill="#800000"/>
<rect x="561" y="531" width="26" height="2" fill="#800000"/>
<rect x="561" y="544" width="26" height="2" fill="#800000"/>
<rect x="561" y="557" width="26" height="2" fill="#800000"/>
<rect x="561" y="594" width="26" height="2" fill="#800000"/>
<rect x="655" y="431" width="26" height="2" fill="#800000"/>
<rect x="655" y="456" width="26" height="2" fill="#800000"/>
<rect x="764" y="443" width="18" height="2" fill="#800000"/>
<rect x="926" y="512" width="26" height="2" fill="#800000"/>
<rect x="1027" y="563" width="26" height="2" fill="#800000"/>
<rect x="1027" y="512" width="26" height="2" fill="#800000"/>
<rect x="926" y="538" width="26" height="2" fill="#800000"/>
<rect x="988" y="476" width="2" height="18" fill="#800000"/>
<rect x="988" y="584" width="2" height="19" fill="#800000"/>
<rect x="303" y="137" width="29" height="1" fill="#000000"/>
<rect x="303" y="162" width="15" height="1" fill="#000000"/>
<rect x="445" y="238" width="23" height="1" fill="#000000"/>
<rect x="445" y="250" width="23" height="1" fill="#000000"/>
<rect x="451" y="287" width="17" height="1" fill="#000000"/>
<rect x="453" y="300" width="15" height="1" fill="#000000"/>
<rect x="112" y="160" width="5" height="5" fill="#004200"/>
<rect x="112" y="297" width="5" height="5" fill="#004200"/>
<rect x="820" y="187" width="16" height="1" fill="#000000"/>
<rect x="949" y="235" width="5" height="5" fill="#004200"/>
<rect x="949" y="310" width="5" height="5" fill="#004200"/>
<rect x="1044" y="242" width="5" height="5" fill="#004200"/>
<rect x="1145" y="242" width="5" height="5" fill="#004200"/>
<rect x="1107" y="367" width="5" height="5" fill="#004200"/>
<rect x="112" y="511" width="5" height="5" fill="#004200"/>
<rect x="307" y="467" width="5" height="5" fill="#004200"/>
<rect x="647" y="442" width="5" height="5" fill="#004200"/>
<rect x="1013" y="558" width="9" height="1" fill="#000000"/>
</g>
<g>
<circle cx="238.2" cy="29.5" r="4.7" fill="none" stroke="#004200" stroke-width="2.3"/>
<circle cx="238.2" cy="80.5" r="4.7" fill="none" stroke="#004200" stroke-width="2.3"/>
<circle cx="238.2" cy="155.5" r="4.7" fill="none" stroke="#004200" stroke-width="2.3"/>
<path d="M221 120.4 L216 130 L226 130 Z" fill="none" stroke="#004200" stroke-width="1.9" stroke-linejoin="miter"/>
<circle cx="238.2" cy="218.5" r="4.7" fill="none" stroke="#004200" stroke-width="2.3"/>
<circle cx="238.2" cy="231.5" r="4.7" fill="none" stroke="#004200" stroke-width="2.3"/>
<circle cx="238.2" cy="244.5" r="4.7" fill="none" stroke="#004200" stroke-width="2.3"/>
<circle cx="238.2" cy="256.5" r="4.7" fill="none" stroke="#004200" stroke-width="2.3"/>
<circle cx="238.2" cy="269.5" r="4.7" fill="none" stroke="#004200" stroke-width="2.3"/>
<circle cx="238.2" cy="281.5" r="4.7" fill="none" stroke="#004200" stroke-width="2.3"/>
<circle cx="238.2" cy="293.5" r="4.7" fill="none" stroke="#004200" stroke-width="2.3"/>
<circle cx="238.2" cy="306.5" r="4.7" fill="none" stroke="#004200" stroke-width="2.3"/>
<circle cx="531.5" cy="4.5" r="4.7" fill="none" stroke="#004200" stroke-width="2.3"/>
<circle cx="531.5" cy="17.5" r="4.7" fill="none" stroke="#004200" stroke-width="2.3"/>
<circle cx="531.5" cy="29.5" r="4.7" fill="none" stroke="#004200" stroke-width="2.3"/>
<circle cx="531.5" cy="42.5" r="4.7" fill="none" stroke="#004200" stroke-width="2.3"/>
<circle cx="531.5" cy="55.5" r="4.7" fill="none" stroke="#004200" stroke-width="2.3"/>
<circle cx="531.5" cy="67.5" r="4.7" fill="none" stroke="#004200" stroke-width="2.3"/>
<circle cx="531.5" cy="80.5" r="4.7" fill="none" stroke="#004200" stroke-width="2.3"/>
<circle cx="531.5" cy="105.5" r="4.7" fill="none" stroke="#004200" stroke-width="2.3"/>
<circle cx="531.5" cy="118.5" r="4.7" fill="none" stroke="#004200" stroke-width="2.3"/>
<circle cx="531.5" cy="130.5" r="4.7" fill="none" stroke="#004200" stroke-width="2.3"/>
<circle cx="531.5" cy="143.5" r="4.7" fill="none" stroke="#004200" stroke-width="2.3"/>
<circle cx="531.5" cy="155.5" r="4.7" fill="none" stroke="#004200" stroke-width="2.3"/>
<circle cx="531.5" cy="168.5" r="4.7" fill="none" stroke="#004200" stroke-width="2.3"/>
<circle cx="531.5" cy="181.5" r="4.7" fill="none" stroke="#004200" stroke-width="2.3"/>
<circle cx="531.5" cy="193.5" r="4.7" fill="none" stroke="#004200" stroke-width="2.3"/>
<circle cx="531.5" cy="218.5" r="4.7" fill="none" stroke="#004200" stroke-width="2.3"/>
<circle cx="531.5" cy="244.5" r="4.7" fill="none" stroke="#004200" stroke-width="2.3"/>
<circle cx="531.5" cy="256.5" r="4.7" fill="none" stroke="#004200" stroke-width="2.3"/>
<circle cx="531.5" cy="293.5" r="4.7" fill="none" stroke="#004200" stroke-width="2.3"/>
<circle cx="531.5" cy="306.5" r="4.7" fill="none" stroke="#004200" stroke-width="2.3"/>
<g fill="none" stroke="#2020ff" stroke-width="1"><circle cx="517.5" cy="231.5" r="3.6"/><path d="M510.5 231.5H524.5M517.5 224.5V238.5"/></g>
<path d="M114 126.4 L109 136 L119 136 Z" fill="none" stroke="#004200" stroke-width="1.9" stroke-linejoin="miter"/>
<circle cx="11.4" cy="211.3" r="4.8" fill="#3a0000" stroke="#ff0000" stroke-width="1.2"/>
<path d="M11.4 214.3V208.70000000000002M9.2 210.70000000000002L11.4 208.3L13.600000000000001 210.70000000000002" fill="none" stroke="#ff0000" stroke-width="1.2"/>
<circle cx="11.4" cy="238.5" r="4.8" fill="#3a0000" stroke="#ff0000" stroke-width="1.2"/>
<path d="M11.4 235.5V241.1M9.2 239.1L11.4 241.5L13.600000000000001 239.1" fill="none" stroke="#ff0000" stroke-width="1.2"/>
<circle cx="99.4" cy="211.3" r="4.8" fill="#3a0000" stroke="#ff0000" stroke-width="1.2"/>
<path d="M99.4 214.3V208.70000000000002M97.2 210.70000000000002L99.4 208.3L101.60000000000001 210.70000000000002" fill="none" stroke="#ff0000" stroke-width="1.2"/>
<circle cx="99.4" cy="238.5" r="4.8" fill="#3a0000" stroke="#ff0000" stroke-width="1.2"/>
<path d="M99.4 235.5V241.1M97.2 239.1L99.4 241.5L101.60000000000001 239.1" fill="none" stroke="#ff0000" stroke-width="1.2"/>
<path d="M32.8 240L38 237L38 243Z" fill="#800000" stroke="#800000" stroke-width="0.8" stroke-linejoin="round"/>
<circle cx="84.3" cy="225.5" r="4.7" fill="none" stroke="#004200" stroke-width="2.3"/>
<path d="M121 221L126.2 218L126.2 224Z" fill="#800000" stroke="#800000" stroke-width="0.8" stroke-linejoin="round"/>
<circle cx="171.6" cy="225.5" r="4.7" fill="none" stroke="#004200" stroke-width="2.3"/>
<circle cx="755" cy="80.5" r="4.7" fill="none" stroke="#004200" stroke-width="2.3"/>
<circle cx="946.4" cy="80.5" r="4.7" fill="none" stroke="#004200" stroke-width="2.3"/>
<circle cx="755" cy="92.5" r="4.7" fill="none" stroke="#004200" stroke-width="2.3"/>
<circle cx="946.4" cy="92.5" r="4.7" fill="none" stroke="#004200" stroke-width="2.3"/>
<circle cx="755" cy="105.5" r="4.7" fill="none" stroke="#004200" stroke-width="2.3"/>
<circle cx="946.4" cy="105.5" r="4.7" fill="none" stroke="#004200" stroke-width="2.3"/>
<circle cx="755" cy="118.5" r="4.7" fill="none" stroke="#004200" stroke-width="2.3"/>
<circle cx="755" cy="130.5" r="4.7" fill="none" stroke="#004200" stroke-width="2.3"/>
<circle cx="755" cy="143.5" r="4.7" fill="none" stroke="#004200" stroke-width="2.3"/>
<circle cx="755" cy="155.5" r="4.7" fill="none" stroke="#004200" stroke-width="2.3"/>
<circle cx="755" cy="168.5" r="4.7" fill="none" stroke="#004200" stroke-width="2.3"/>
<circle cx="761.4" cy="206.5" r="4.7" fill="none" stroke="#004200" stroke-width="2.3"/>
<rect x="721.5" y="123.5" width="24" height="14" fill="none" stroke="#ff1010" stroke-width="1" stroke-dasharray="3 3" shape-rendering="crispEdges"/>
<path d="M713 125L723.5 135.5" stroke="#202030" stroke-width="1" fill="none"/>
<rect x="950" y="234" width="2" height="3" fill="#ff0000" shape-rendering="crispEdges"/>
<path d="M951 201.4 L946 212 L956 212 Z" fill="none" stroke="#ff0000" stroke-width="1.9" stroke-linejoin="miter"/>
<path d="M941 266h3l4 4h-3zM947 266h3l4 4h-3zM953 266h3l4 4h-3zM959 266h3l1 1v3h-0z" fill="#d8d8c0"/>
<path d="M940 268v2h2z" fill="#d8d8c0"/>
<circle cx="888" cy="260.6" r="2.7" fill="#dfe0d0" stroke="#800000" stroke-width="1.7"/>
<circle cx="888" cy="290.3" r="2.7" fill="#dfe0d0" stroke="#800000" stroke-width="1.7"/>
<circle cx="876.3" cy="250.5" r="4.8" fill="#3a0000" stroke="#ff0000" stroke-width="1.2"/>
<path d="M873.3 250.5H879.3M874.9 248.9L873.3 250.5L874.9 252.1M877.6999999999999 248.9L879.3 250.5L877.6999999999999 252.1" fill="none" stroke="#ff0000" stroke-width="1.2"/>
<circle cx="984.5" cy="312.5" r="4.7" fill="none" stroke="#004200" stroke-width="2.3"/>
<circle cx="1046.4" cy="198.8" r="4.7" fill="none" stroke="#004200" stroke-width="2.3"/>
<circle cx="1147.4" cy="198.8" r="4.7" fill="none" stroke="#004200" stroke-width="2.3"/>
<path d="M152 444H202A25.5 25.5 0 0 1 202 495H152Z" fill="#c8c8aa" stroke="#800000" stroke-width="2" stroke-linejoin="miter"/>
<circle cx="231.4" cy="469.5" r="2.7" fill="#dfe0d0" stroke="#800000" stroke-width="1.7"/>
<path d="M152 532H202A25.5 25.5 0 0 1 202 583H152Z" fill="#c8c8aa" stroke="#800000" stroke-width="2" stroke-linejoin="miter"/>
<circle cx="231.4" cy="557.5" r="2.7" fill="#dfe0d0" stroke="#800000" stroke-width="1.7"/>
<circle cx="31.4" cy="457.5" r="4.7" fill="none" stroke="#004200" stroke-width="2.3"/>
<circle cx="31.4" cy="513.5" r="4.7" fill="none" stroke="#004200" stroke-width="2.3"/>
<circle cx="31.4" cy="570.5" r="4.7" fill="none" stroke="#004200" stroke-width="2.3"/>
<circle cx="383.3" cy="406.5" r="4.7" fill="none" stroke="#004200" stroke-width="2.3"/>
<circle cx="383.3" cy="419.5" r="4.7" fill="none" stroke="#004200" stroke-width="2.3"/>
<circle cx="383.3" cy="520.5" r="4.7" fill="none" stroke="#004200" stroke-width="2.3"/>
<circle cx="383.3" cy="532.5" r="4.7" fill="none" stroke="#004200" stroke-width="2.3"/>
<circle cx="383.3" cy="545.5" r="4.7" fill="none" stroke="#004200" stroke-width="2.3"/>
<path d="M381 583 L390.5 578 L390.5 588 Z" fill="none" stroke="#004200" stroke-width="1.9" stroke-linejoin="miter"/>
<circle cx="612" cy="406.5" r="4.7" fill="none" stroke="#004200" stroke-width="2.3"/>
<circle cx="612" cy="469.5" r="4.7" fill="none" stroke="#004200" stroke-width="2.3"/>
<circle cx="612" cy="482.5" r="4.7" fill="none" stroke="#004200" stroke-width="2.3"/>
<circle cx="612" cy="495.5" r="4.7" fill="none" stroke="#004200" stroke-width="2.3"/>
<circle cx="612" cy="507.5" r="4.7" fill="none" stroke="#004200" stroke-width="2.3"/>
<circle cx="612" cy="520.5" r="4.7" fill="none" stroke="#004200" stroke-width="2.3"/>
<circle cx="612" cy="532.5" r="4.7" fill="none" stroke="#004200" stroke-width="2.3"/>
<circle cx="612" cy="545.5" r="4.7" fill="none" stroke="#004200" stroke-width="2.3"/>
<circle cx="612" cy="558.5" r="4.7" fill="none" stroke="#004200" stroke-width="2.3"/>
<circle cx="559" cy="406" r="2.3" fill="#800000"/>
<path d="M680 419H731A25.0 25.0 0 0 1 731 469H680Z" fill="#c8c8aa" stroke="#800000" stroke-width="2" stroke-linejoin="miter"/>
<circle cx="759.9" cy="444.0" r="2.7" fill="#dfe0d0" stroke="#800000" stroke-width="1.7"/>
<circle cx="814.6" cy="444.5" r="4.7" fill="none" stroke="#004200" stroke-width="2.3"/>
<circle cx="1085.2" cy="513.5" r="4.7" fill="none" stroke="#004200" stroke-width="2.3"/>
<circle cx="893.3" cy="539.5" r="4.7" fill="none" stroke="#004200" stroke-width="2.3"/>
<path d="M951 535L955.5 539L951 543" fill="none" stroke="#800000" stroke-width="1.7"/>
<circle cx="989" cy="497.5" r="2.7" fill="#dfe0d0" stroke="#800000" stroke-width="1.7"/>
<circle cx="989" cy="580.5" r="2.7" fill="#dfe0d0" stroke="#800000" stroke-width="1.7"/>
</g>
<g style="opacity:0.999">
<text transform="translate(295.6,329)" x="-0.01 6.99 12.99 18.99 24.99 31.99 37.99" y="0" font-size="10" fill="#000000" stroke="#000000" stroke-width="0.22">AT89C52</text>
<text transform="translate(295.6,342)" x="-0.57 6.43 13.43 19.43 25.43 32.43 39.43" y="0" font-size="10" fill="#000000" stroke="#000000" stroke-width="0.22">NET=PA5</text>
<text transform="translate(283.6,27)" x="-11.70 -5.70" y="0" font-size="10" fill="#000000" stroke="#000000" stroke-width="0.22">18</text>
<text transform="translate(303.1,33)" x="-0.16 6.84 12.84 19.84 25.84" y="0" font-size="10" fill="#000000" stroke="#000000" stroke-width="0.22">XTAL2</text>
<text transform="translate(227.8,33)" x="-12.65 -5.65" y="0" font-size="10" fill="#000000" stroke="#000000" stroke-width="0.22">X2</text>
<text transform="translate(283.6,78)" x="-5.67" y="0" font-size="10" fill="#000000" stroke="#000000" stroke-width="0.22">9</text>
<text transform="translate(303.1,84)" x="-0.57 6.43 13.43" y="0" font-size="10" fill="#000000" stroke="#000000" stroke-width="0.22">RST</text>
<text transform="translate(227.8,84)" x="-19.84 -12.84 -5.84" y="0" font-size="10" fill="#000000" stroke="#000000" stroke-width="0.22">RST</text>
<text transform="translate(283.6,141)" x="-11.67 -5.67" y="0" font-size="10" fill="#000000" stroke="#000000" stroke-width="0.22">29</text>
<text transform="translate(303.1,147)" x="-0.57 6.43 13.43 20.43" y="0" font-size="10" fill="#000000" stroke="#000000" stroke-width="0.22">PSEN</text>
<text transform="translate(283.6,153)" x="-11.73 -5.73" y="0" font-size="10" fill="#000000" stroke="#000000" stroke-width="0.22">30</text>
<text transform="translate(303.1,159)" x="-0.01 6.99 12.99" y="0" font-size="10" fill="#000000" stroke="#000000" stroke-width="0.22">ALE</text>
<text transform="translate(227.8,159)" x="-19.70 -12.70 -6.70" y="0" font-size="10" fill="#000000" stroke="#000000" stroke-width="0.22">ALE</text>
<text transform="translate(283.6,166)" x="-11.66 -5.66" y="0" font-size="10" fill="#000000" stroke="#000000" stroke-width="0.22">31</text>
<text transform="translate(303.1,172)" x="-0.57 6.43" y="0" font-size="10" fill="#000000" stroke="#000000" stroke-width="0.22">EA</text>
<text transform="translate(283.6,216)" x="-5.66" y="0" font-size="10" fill="#000000" stroke="#000000" stroke-width="0.22">1</text>
<text transform="translate(303.1,222)" x="-0.57 6.43 12.43 15.43 21.43 24.43 30.43" y="0" font-size="10" fill="#000000" stroke="#000000" stroke-width="0.22">P1.0/T2</text>
<text transform="translate(227.8,222)" x="-21.73 -14.73 -8.73 -5.73" y="0" font-size="10" fill="#000000" stroke="#000000" stroke-width="0.22">P1.0</text>
<text transform="translate(283.6,229)" x="-5.65" y="0" font-size="10" fill="#000000" stroke="#000000" stroke-width="0.22">2</text>
<text transform="translate(303.1,235)" x="-0.57 6.43 12.43 15.43 21.43 24.43 30.43 36.43 43.43" y="0" font-size="10" fill="#000000" stroke="#000000" stroke-width="0.22">P1.1/T2EX</text>
<text transform="translate(227.8,235)" x="-21.66 -14.66 -8.66 -5.66" y="0" font-size="10" fill="#000000" stroke="#000000" stroke-width="0.22">P1.1</text>
<text transform="translate(283.6,242)" x="-5.69" y="0" font-size="10" fill="#000000" stroke="#000000" stroke-width="0.22">3</text>
<text transform="translate(303.1,248)" x="-0.57 6.43 12.43 15.43" y="0" font-size="10" fill="#000000" stroke="#000000" stroke-width="0.22">P1.2</text>
<text transform="translate(227.8,248)" x="-21.65 -14.65 -8.65 -5.65" y="0" font-size="10" fill="#000000" stroke="#000000" stroke-width="0.22">P1.2</text>
<text transform="translate(283.6,254)" x="-5.79" y="0" font-size="10" fill="#000000" stroke="#000000" stroke-width="0.22">4</text>
<text transform="translate(303.1,260)" x="-0.57 6.43 12.43 15.43" y="0" font-size="10" fill="#000000" stroke="#000000" stroke-width="0.22">P1.3</text>
<text transform="translate(227.8,260)" x="-21.69 -14.69 -8.69 -5.69" y="0" font-size="10" fill="#000000" stroke="#000000" stroke-width="0.22">P1.3</text>
<text transform="translate(283.6,267)" x="-5.71" y="0" font-size="10" fill="#000000" stroke="#000000" stroke-width="0.22">5</text>
<text transform="translate(303.1,273)" x="-0.57 6.43 12.43 15.43" y="0" font-size="10" fill="#000000" stroke="#000000" stroke-width="0.22">P1.4</text>
<text transform="translate(227.8,273)" x="-21.79 -14.79 -8.79 -5.79" y="0" font-size="10" fill="#000000" stroke="#000000" stroke-width="0.22">P1.4</text>
<text transform="translate(283.6,279)" x="-5.69" y="0" font-size="10" fill="#000000" stroke="#000000" stroke-width="0.22">6</text>
<text transform="translate(303.1,285)" x="-0.57 6.43 12.43 15.43" y="0" font-size="10" fill="#000000" stroke="#000000" stroke-width="0.22">P1.5</text>
<text transform="translate(227.8,285)" x="-21.71 -14.71 -8.71 -5.71" y="0" font-size="10" fill="#000000" stroke="#000000" stroke-width="0.22">P1.5</text>
<text transform="translate(283.6,291)" x="-5.65" y="0" font-size="10" fill="#000000" stroke="#000000" stroke-width="0.22">7</text>
<text transform="translate(303.1,297)" x="-0.57 6.43 12.43 15.43" y="0" font-size="10" fill="#000000" stroke="#000000" stroke-width="0.22">P1.6</text>
<text transform="translate(227.8,297)" x="-21.69 -14.69 -8.69 -5.69" y="0" font-size="10" fill="#000000" stroke="#000000" stroke-width="0.22">P1.6</text>
<text transform="translate(283.6,304)" x="-5.70" y="0" font-size="10" fill="#000000" stroke="#000000" stroke-width="0.22">8</text>
<text transform="translate(303.1,310)" x="-0.57 6.43 12.43 15.43" y="0" font-size="10" fill="#000000" stroke="#000000" stroke-width="0.22">P1.7</text>
<text transform="translate(227.8,310)" x="-21.65 -14.65 -8.65 -5.65" y="0" font-size="10" fill="#000000" stroke="#000000" stroke-width="0.22">P1.7</text>
<text transform="translate(485,2)" x="-0.27 5.73" y="0" font-size="10" fill="#000000" stroke="#000000" stroke-width="0.22">38</text>
<text transform="translate(466.3,8)" x="-44.66 -37.66 -31.66 -28.66 -22.66 -19.66 -12.66 -5.66" y="0" font-size="10" fill="#000000" stroke="#000000" stroke-width="0.22">P0.1/AD1</text>
<text transform="translate(542.6,8)" x="-0.57 6.43 12.43 15.43" y="0" font-size="10" fill="#000000" stroke="#000000" stroke-width="0.22">P0.1</text>
<text transform="translate(485,15)" x="-0.27 5.73" y="0" font-size="10" fill="#000000" stroke="#000000" stroke-width="0.22">37</text>
<text transform="translate(466.3,21)" x="-44.65 -37.65 -31.65 -28.65 -22.65 -19.65 -12.65 -5.65" y="0" font-size="10" fill="#000000" stroke="#000000" stroke-width="0.22">P0.2/AD2</text>
<text transform="translate(542.6,21)" x="-0.57 6.43 12.43 15.43" y="0" font-size="10" fill="#000000" stroke="#000000" stroke-width="0.22">P0.2</text>
<text transform="translate(485,27)" x="-0.27 5.73" y="0" font-size="10" fill="#000000" stroke="#000000" stroke-width="0.22">36</text>
<text transform="translate(466.3,33)" x="-44.69 -37.69 -31.69 -28.69 -22.69 -19.69 -12.69 -5.69" y="0" font-size="10" fill="#000000" stroke="#000000" stroke-width="0.22">P0.3/AD3</text>
<text transform="translate(542.6,33)" x="-0.57 6.43 12.43 15.43" y="0" font-size="10" fill="#000000" stroke="#000000" stroke-width="0.22">P0.3</text>
<text transform="translate(485,40)" x="-0.27 5.73" y="0" font-size="10" fill="#000000" stroke="#000000" stroke-width="0.22">35</text>
<text transform="translate(466.3,46)" x="-44.79 -37.79 -31.79 -28.79 -22.79 -19.79 -12.79 -5.79" y="0" font-size="10" fill="#000000" stroke="#000000" stroke-width="0.22">P0.4/AD4</text>
<text transform="translate(542.6,46)" x="-0.57 6.43 12.43 15.43" y="0" font-size="10" fill="#000000" stroke="#000000" stroke-width="0.22">P0.4</text>
<text transform="translate(485,53)" x="-0.27 5.73" y="0" font-size="10" fill="#000000" stroke="#000000" stroke-width="0.22">34</text>
<text transform="translate(466.3,59)" x="-44.71 -37.71 -31.71 -28.71 -22.71 -19.71 -12.71 -5.71" y="0" font-size="10" fill="#000000" stroke="#000000" stroke-width="0.22">P0.5/AD5</text>
<text transform="translate(542.6,59)" x="-0.57 6.43 12.43 15.43" y="0" font-size="10" fill="#000000" stroke="#000000" stroke-width="0.22">P0.5</text>
<text transform="translate(485,65)" x="-0.27 5.73" y="0" font-size="10" fill="#000000" stroke="#000000" stroke-width="0.22">33</text>
<text transform="translate(466.3,71)" x="-44.69 -37.69 -31.69 -28.69 -22.69 -19.69 -12.69 -5.69" y="0" font-size="10" fill="#000000" stroke="#000000" stroke-width="0.22">P0.6/AD6</text>
<text transform="translate(542.6,71)" x="-0.57 6.43 12.43 15.43" y="0" font-size="10" fill="#000000" stroke="#000000" stroke-width="0.22">P0.6</text>
<text transform="translate(485,78)" x="-0.27 5.73" y="0" font-size="10" fill="#000000" stroke="#000000" stroke-width="0.22">32</text>
<text transform="translate(466.3,84)" x="-44.65 -37.65 -31.65 -28.65 -22.65 -19.65 -12.65 -5.65" y="0" font-size="10" fill="#000000" stroke="#000000" stroke-width="0.22">P0.7/AD7</text>
<text transform="translate(542.6,84)" x="-0.57 6.43 12.43 15.43" y="0" font-size="10" fill="#000000" stroke="#000000" stroke-width="0.22">P0.7</text>
<text transform="translate(485,103)" x="-0.35 5.65" y="0" font-size="10" fill="#000000" stroke="#000000" stroke-width="0.22">21</text>
<text transform="translate(466.3,109)" x="-37.70 -30.70 -24.70 -21.70 -15.70 -12.70 -5.70" y="0" font-size="10" fill="#000000" stroke="#000000" stroke-width="0.22">P2.0/A8</text>
<text transform="translate(542.6,109)" x="-0.57 6.43 12.43 15.43" y="0" font-size="10" fill="#000000" stroke="#000000" stroke-width="0.22">P2.0</text>
<text transform="translate(485,116)" x="-0.35 5.65" y="0" font-size="10" fill="#000000" stroke="#000000" stroke-width="0.22">22</text>
<text transform="translate(466.3,122)" x="-37.67 -30.67 -24.67 -21.67 -15.67 -12.67 -5.67" y="0" font-size="10" fill="#000000" stroke="#000000" stroke-width="0.22">P2.1/A9</text>
<text transform="translate(542.6,122)" x="-0.57 6.43 12.43 15.43" y="0" font-size="10" fill="#000000" stroke="#000000" stroke-width="0.22">P2.1</text>
<text transform="translate(485,128)" x="-0.35 5.65" y="0" font-size="10" fill="#000000" stroke="#000000" stroke-width="0.22">23</text>
<text transform="translate(466.3,134)" x="-43.73 -36.73 -30.73 -27.73 -21.73 -18.73 -11.73 -5.73" y="0" font-size="10" fill="#000000" stroke="#000000" stroke-width="0.22">P2.2/A10</text>
<text transform="translate(542.6,134)" x="-0.57 6.43 12.43 15.43" y="0" font-size="10" fill="#000000" stroke="#000000" stroke-width="0.22">P2.2</text>
<text transform="translate(485,141)" x="-0.35 5.65" y="0" font-size="10" fill="#000000" stroke="#000000" stroke-width="0.22">24</text>
<text transform="translate(466.3,147)" x="-43.66 -36.66 -30.66 -27.66 -21.66 -18.66 -11.66 -5.66" y="0" font-size="10" fill="#000000" stroke="#000000" stroke-width="0.22">P2.3/A11</text>
<text transform="translate(542.6,147)" x="-0.57 6.43 12.43 15.43" y="0" font-size="10" fill="#000000" stroke="#000000" stroke-width="0.22">P2.3</text>
<text transform="translate(485,153)" x="-0.35 5.65" y="0" font-size="10" fill="#000000" stroke="#000000" stroke-width="0.22">25</text>
<text transform="translate(466.3,159)" x="-43.65 -36.65 -30.65 -27.65 -21.65 -18.65 -11.65 -5.65" y="0" font-size="10" fill="#000000" stroke="#000000" stroke-width="0.22">P2.4/A12</text>
<text transform="translate(542.6,159)" x="-0.57 6.43 12.43 15.43" y="0" font-size="10" fill="#000000" stroke="#000000" stroke-width="0.22">P2.4</text>
<text transform="translate(485,166)" x="-0.35 5.65" y="0" font-size="10" fill="#000000" stroke="#000000" stroke-width="0.22">26</text>
<text transform="translate(466.3,172)" x="-43.69 -36.69 -30.69 -27.69 -21.69 -18.69 -11.69 -5.69" y="0" font-size="10" fill="#000000" stroke="#000000" stroke-width="0.22">P2.5/A13</text>
<text transform="translate(542.6,172)" x="-0.57 6.43 12.43 15.43" y="0" font-size="10" fill="#000000" stroke="#000000" stroke-width="0.22">P2.5</text>
<text transform="translate(485,179)" x="-0.35 5.65" y="0" font-size="10" fill="#000000" stroke="#000000" stroke-width="0.22">27</text>
<text transform="translate(466.3,185)" x="-43.79 -36.79 -30.79 -27.79 -21.79 -18.79 -11.79 -5.79" y="0" font-size="10" fill="#000000" stroke="#000000" stroke-width="0.22">P2.6/A14</text>
<text transform="translate(542.6,185)" x="-0.57 6.43 12.43 15.43" y="0" font-size="10" fill="#000000" stroke="#000000" stroke-width="0.22">P2.6</text>
<text transform="translate(485,191)" x="-0.35 5.65" y="0" font-size="10" fill="#000000" stroke="#000000" stroke-width="0.22">28</text>
<text transform="translate(466.3,197)" x="-43.71 -36.71 -30.71 -27.71 -21.71 -18.71 -11.71 -5.71" y="0" font-size="10" fill="#000000" stroke="#000000" stroke-width="0.22">P2.7/A15</text>
<text transform="translate(542.6,197)" x="-0.57 6.43 12.43 15.43" y="0" font-size="10" fill="#000000" stroke="#000000" stroke-width="0.22">P2.7</text>
<text transform="translate(485,216)" x="-0.53 5.47" y="0" font-size="10" fill="#000000" stroke="#000000" stroke-width="0.22">10</text>
<text transform="translate(466.3,222)" x="-45.67 -38.67 -32.67 -29.67 -23.67 -20.67 -13.67 -6.67" y="0" font-size="10" fill="#000000" stroke="#000000" stroke-width="0.22">P3.0/RXD</text>
<text transform="translate(542.6,222)" x="-0.57 6.43 12.43 15.43" y="0" font-size="10" fill="#000000" stroke="#000000" stroke-width="0.22">P3.0</text>
<text transform="translate(485,229)" x="-0.53 5.47" y="0" font-size="10" fill="#000000" stroke="#000000" stroke-width="0.22">11</text>
<text transform="translate(466.3,235)" x="-44.67 -37.67 -31.67 -28.67 -22.67 -19.67 -13.67 -6.67" y="0" font-size="10" fill="#000000" stroke="#000000" stroke-width="0.22">P3.1/TXD</text>
<text transform="translate(485,242)" x="-0.53 5.47" y="0" font-size="10" fill="#000000" stroke="#000000" stroke-width="0.22">12</text>
<text transform="translate(466.3,248)" x="-46.73 -39.73 -33.73 -30.73 -24.73 -21.73 -18.73 -11.73 -5.73" y="0" font-size="10" fill="#000000" stroke="#000000" stroke-width="0.22">P3.2/INT0</text>
<text transform="translate(542.6,248)" x="-0.57 6.43 12.43 15.43" y="0" font-size="10" fill="#000000" stroke="#000000" stroke-width="0.22">P3.2</text>
<text transform="translate(485,254)" x="-0.53 5.47" y="0" font-size="10" fill="#000000" stroke="#000000" stroke-width="0.22">13</text>
<text transform="translate(466.3,260)" x="-46.66 -39.66 -33.66 -30.66 -24.66 -21.66 -18.66 -11.66 -5.66" y="0" font-size="10" fill="#000000" stroke="#000000" stroke-width="0.22">P3.3/INT1</text>
<text transform="translate(542.6,260)" x="-0.57 6.43 12.43 15.43" y="0" font-size="10" fill="#000000" stroke="#000000" stroke-width="0.22">P3.3</text>
<text transform="translate(485,267)" x="-0.53 5.47" y="0" font-size="10" fill="#000000" stroke="#000000" stroke-width="0.22">14</text>
<text transform="translate(466.3,273)" x="-36.73 -29.73 -23.73 -20.73 -14.73 -11.73 -5.73" y="0" font-size="10" fill="#000000" stroke="#000000" stroke-width="0.22">P3.4/T0</text>
<text transform="translate(485,279)" x="-0.53 5.47" y="0" font-size="10" fill="#000000" stroke="#000000" stroke-width="0.22">15</text>
<text transform="translate(466.3,285)" x="-36.66 -29.66 -23.66 -20.66 -14.66 -11.66 -5.66" y="0" font-size="10" fill="#000000" stroke="#000000" stroke-width="0.22">P3.5/T1</text>
<text transform="translate(485,291)" x="-0.53 5.47" y="0" font-size="10" fill="#000000" stroke="#000000" stroke-width="0.22">16</text>
<text transform="translate(466.3,297)" x="-40.68 -33.68 -27.68 -24.68 -18.68 -15.68 -6.68" y="0" font-size="10" fill="#000000" stroke="#000000" stroke-width="0.22">P3.6/WR</text>
<text transform="translate(542.6,297)" x="-0.03 8.97" y="0" font-size="10" fill="#000000" stroke="#000000" stroke-width="0.22">WR</text>
<text transform="translate(485,304)" x="-0.53 5.47" y="0" font-size="10" fill="#000000" stroke="#000000" stroke-width="0.22">17</text>
<text transform="translate(466.3,310)" x="-38.67 -31.67 -25.67 -22.67 -16.67 -13.67 -6.67" y="0" font-size="10" fill="#000000" stroke="#000000" stroke-width="0.22">P3.7/RD</text>
<text transform="translate(542.6,310)" x="-0.57 6.43" y="0" font-size="10" fill="#000000" stroke="#000000" stroke-width="0.22">RD</text>
<text transform="translate(28.6,232) rotate(-90)" font-size="7" font-weight="bold" fill="#e00000" textLength="14" lengthAdjust="spacingAndGlyphs">12%</text>
<text transform="translate(116.6,232) rotate(-90)" font-size="7" font-weight="bold" fill="#e00000" textLength="14" lengthAdjust="spacingAndGlyphs">57%</text>
<text transform="translate(97,229)" x="-0.65 2.35 9.35" y="0" font-size="10" fill="#000000" stroke="#000000" stroke-width="0.22">IN0</text>
<text transform="translate(183.8,229)" x="-0.65 2.35 9.35" y="0" font-size="10" fill="#000000" stroke="#000000" stroke-width="0.22">IN1</text>
<text transform="translate(40,184) scale(0.9,1)" x="-0.98 11.25 22.36" y="0" font-size="17" fill="#2c2c2c">RV2</text>
<text transform="translate(128.3,184) scale(0.9,1)" x="-0.98 11.25 22.36" y="0" font-size="17" fill="#2c2c2c">RV1</text>
<text transform="translate(28.3,273)" x="-0.53 5.47" y="0" font-size="10" fill="#000000" stroke="#000000" stroke-width="0.22">1k</text>
<text transform="translate(41.1,273)" x="-0.35 5.65 11.65 18.65 25.65 31.65" y="0" font-size="10" fill="#7c7c7c" stroke="#7c7c7c" stroke-width="0.22">&lt;TEXT&gt;</text>
<text transform="translate(129.3,273)" x="-0.53 5.47" y="0" font-size="10" fill="#000000" stroke="#000000" stroke-width="0.22">1k</text>
<text transform="translate(128.6,286)" x="-0.35 5.65 11.65 18.65 25.65 31.65" y="0" font-size="10" fill="#7c7c7c" stroke="#7c7c7c" stroke-width="0.22">&lt;TEXT&gt;</text>
<text transform="translate(812.6,64) scale(0.9,1)" x="-0.92 11.30 21.30" y="0" font-size="17" fill="#2c2c2c">U18</text>
<text transform="translate(812.6,229)" x="-0.36 5.64 11.64 17.64 24.64 30.64 36.64" y="0" font-size="10" fill="#000000" stroke="#000000" stroke-width="0.22">74LS373</text>
<text transform="translate(813.2,242)" x="-0.35 5.65 11.65 18.65 25.65 31.65" y="0" font-size="10" fill="#7c7c7c" stroke="#7c7c7c" stroke-width="0.22">&lt;TEXT&gt;</text>
<text transform="translate(744,84)" x="-21.73 -14.73 -8.73 -5.73" y="0" font-size="10" fill="#000000" stroke="#000000" stroke-width="0.22">P0.0</text>
<text transform="translate(799.5,78)" x="-5.69" y="0" font-size="10" fill="#000000" stroke="#000000" stroke-width="0.22">3</text>
<text transform="translate(820,84)" x="-0.57 6.43" y="0" font-size="10" fill="#000000" stroke="#000000" stroke-width="0.22">D0</text>
<text transform="translate(901.6,78)" x="-0.35" y="0" font-size="10" fill="#000000" stroke="#000000" stroke-width="0.22">2</text>
<text transform="translate(881.3,84)" x="-13.73 -5.73" y="0" font-size="10" fill="#000000" stroke="#000000" stroke-width="0.22">Q0</text>
<text transform="translate(958.8,84)" x="-0.33 7.67" y="0" font-size="10" fill="#000000" stroke="#000000" stroke-width="0.22">Q0</text>
<text transform="translate(744,96)" x="-21.66 -14.66 -8.66 -5.66" y="0" font-size="10" fill="#000000" stroke="#000000" stroke-width="0.22">P0.1</text>
<text transform="translate(799.5,90)" x="-5.79" y="0" font-size="10" fill="#000000" stroke="#000000" stroke-width="0.22">4</text>
<text transform="translate(820,96)" x="-0.57 6.43" y="0" font-size="10" fill="#000000" stroke="#000000" stroke-width="0.22">D1</text>
<text transform="translate(901.6,90)" x="-0.28" y="0" font-size="10" fill="#000000" stroke="#000000" stroke-width="0.22">5</text>
<text transform="translate(881.3,96)" x="-13.66 -5.66" y="0" font-size="10" fill="#000000" stroke="#000000" stroke-width="0.22">Q1</text>
<text transform="translate(958.8,96)" x="-0.33 7.67" y="0" font-size="10" fill="#000000" stroke="#000000" stroke-width="0.22">Q1</text>
<text transform="translate(744,109)" x="-21.65 -14.65 -8.65 -5.65" y="0" font-size="10" fill="#000000" stroke="#000000" stroke-width="0.22">P0.2</text>
<text transform="translate(799.5,103)" x="-5.65" y="0" font-size="10" fill="#000000" stroke="#000000" stroke-width="0.22">7</text>
<text transform="translate(820,109)" x="-0.57 6.43" y="0" font-size="10" fill="#000000" stroke="#000000" stroke-width="0.22">D2</text>
<text transform="translate(901.6,103)" x="-0.36" y="0" font-size="10" fill="#000000" stroke="#000000" stroke-width="0.22">6</text>
<text transform="translate(881.3,109)" x="-13.65 -5.65" y="0" font-size="10" fill="#000000" stroke="#000000" stroke-width="0.22">Q2</text>
<text transform="translate(958.8,109)" x="-0.33 7.67" y="0" font-size="10" fill="#000000" stroke="#000000" stroke-width="0.22">Q2</text>
<text transform="translate(744,122)" x="-21.69 -14.69 -8.69 -5.69" y="0" font-size="10" fill="#000000" stroke="#000000" stroke-width="0.22">P0.3</text>
<text transform="translate(799.5,116)" x="-5.70" y="0" font-size="10" fill="#000000" stroke="#000000" stroke-width="0.22">8</text>
<text transform="translate(820,122)" x="-0.57 6.43" y="0" font-size="10" fill="#000000" stroke="#000000" stroke-width="0.22">D3</text>
<text transform="translate(901.6,116)" x="-0.33" y="0" font-size="10" fill="#000000" stroke="#000000" stroke-width="0.22">9</text>
<text transform="translate(881.3,122)" x="-13.69 -5.69" y="0" font-size="10" fill="#000000" stroke="#000000" stroke-width="0.22">Q3</text>
<text transform="translate(744,134)" x="-21.79 -14.79 -8.79 -5.79" y="0" font-size="10" fill="#000000" stroke="#000000" stroke-width="0.22">P0.4</text>
<text transform="translate(799.5,128)" x="-11.69 -5.69" y="0" font-size="10" fill="#000000" stroke="#000000" stroke-width="0.22">13</text>
<text transform="translate(820,134)" x="-0.57 6.43" y="0" font-size="10" fill="#000000" stroke="#000000" stroke-width="0.22">D4</text>
<text transform="translate(901.6,128)" x="-0.53 5.47" y="0" font-size="10" fill="#000000" stroke="#000000" stroke-width="0.22">12</text>
<text transform="translate(881.3,134)" x="-13.79 -5.79" y="0" font-size="10" fill="#000000" stroke="#000000" stroke-width="0.22">Q4</text>
<text transform="translate(744,147)" x="-21.71 -14.71 -8.71 -5.71" y="0" font-size="10" fill="#000000" stroke="#000000" stroke-width="0.22">P0.5</text>
<text transform="translate(799.5,141)" x="-11.79 -5.79" y="0" font-size="10" fill="#000000" stroke="#000000" stroke-width="0.22">14</text>
<text transform="translate(820,147)" x="-0.57 6.43" y="0" font-size="10" fill="#000000" stroke="#000000" stroke-width="0.22">D5</text>
<text transform="translate(901.6,141)" x="-0.53 5.47" y="0" font-size="10" fill="#000000" stroke="#000000" stroke-width="0.22">15</text>
<text transform="translate(881.3,147)" x="-13.71 -5.71" y="0" font-size="10" fill="#000000" stroke="#000000" stroke-width="0.22">Q5</text>
<text transform="translate(744,159)" x="-21.69 -14.69 -8.69 -5.69" y="0" font-size="10" fill="#000000" stroke="#000000" stroke-width="0.22">P0.6</text>
<text transform="translate(799.5,153)" x="-11.65 -5.65" y="0" font-size="10" fill="#000000" stroke="#000000" stroke-width="0.22">17</text>
<text transform="translate(820,159)" x="-0.57 6.43" y="0" font-size="10" fill="#000000" stroke="#000000" stroke-width="0.22">D6</text>
<text transform="translate(901.6,153)" x="-0.53 5.47" y="0" font-size="10" fill="#000000" stroke="#000000" stroke-width="0.22">16</text>
<text transform="translate(881.3,159)" x="-13.69 -5.69" y="0" font-size="10" fill="#000000" stroke="#000000" stroke-width="0.22">Q6</text>
<text transform="translate(744,172)" x="-21.65 -14.65 -8.65 -5.65" y="0" font-size="10" fill="#000000" stroke="#000000" stroke-width="0.22">P0.7</text>
<text transform="translate(799.5,166)" x="-11.70 -5.70" y="0" font-size="10" fill="#000000" stroke="#000000" stroke-width="0.22">18</text>
<text transform="translate(820,172)" x="-0.57 6.43" y="0" font-size="10" fill="#000000" stroke="#000000" stroke-width="0.22">D7</text>
<text transform="translate(901.6,166)" x="-0.53 5.47" y="0" font-size="10" fill="#000000" stroke="#000000" stroke-width="0.22">19</text>
<text transform="translate(881.3,172)" x="-13.65 -5.65" y="0" font-size="10" fill="#000000" stroke="#000000" stroke-width="0.22">Q7</text>
<text transform="translate(799.5,191)" x="-5.66" y="0" font-size="10" fill="#000000" stroke="#000000" stroke-width="0.22">1</text>
<text transform="translate(820,197)" x="-0.33 7.67" y="0" font-size="10" fill="#000000" stroke="#000000" stroke-width="0.22">OE</text>
<text transform="translate(799.5,204)" x="-11.66 -5.66" y="0" font-size="10" fill="#000000" stroke="#000000" stroke-width="0.22">11</text>
<text transform="translate(820,210)" x="-0.57 5.43" y="0" font-size="10" fill="#000000" stroke="#000000" stroke-width="0.22">LE</text>
<text transform="translate(749.5,210)" x="-19.70 -12.70 -6.70" y="0" font-size="10" fill="#000000" stroke="#000000" stroke-width="0.22">ALE</text>
<text transform="translate(939.6,191)" x="-0.03 5.97 11.97" y="0" font-size="9" fill="#ff0000" stroke="#ff0000" stroke-width="0.22">VCC</text>
<text transform="translate(971.8,276) scale(0.9,1)" x="-0.60 11.62" y="0" font-size="17" fill="#2c2c2c">C1</text>
<text transform="translate(972,290)" x="-0.53 5.47 11.47" y="0" font-size="10" fill="#000000" stroke="#000000" stroke-width="0.22">10u</text>
<text transform="translate(972.4,302)" x="-0.35 5.65 11.65 18.65 25.65 31.65" y="0" font-size="10" fill="#7c7c7c" stroke="#7c7c7c" stroke-width="0.22">&lt;TEXT&gt;</text>
<text transform="translate(995.8,316)" x="-0.57 6.43 13.43" y="0" font-size="10" fill="#000000" stroke="#000000" stroke-width="0.22">RST</text>
<text transform="translate(940.2,428)" x="-0.32 6.68 12.68" y="0" font-size="9" fill="#000000" stroke="#000000" stroke-width="0.22">GND</text>
<text transform="translate(964.5,351) scale(0.9,1)" x="-0.98 11.25" y="0" font-size="17" fill="#2c2c2c">R1</text>
<text transform="translate(965.2,364.5)" x="-0.53 5.47 11.47" y="0" font-size="10" fill="#000000" stroke="#000000" stroke-width="0.22">10k</text>
<text transform="translate(965.6,377.5)" x="-0.35 5.65 11.65 18.65 25.65 31.65" y="0" font-size="10" fill="#7c7c7c" stroke="#7c7c7c" stroke-width="0.22">&lt;TEXT&gt;</text>
<text transform="translate(1050,187) rotate(-90)" x="-0.16 6.84" y="0" font-size="10" fill="#000000" stroke="#000000" stroke-width="0.22">X1</text>
<text transform="translate(1151,187) rotate(-90)" x="-0.16 6.84" y="0" font-size="10" fill="#000000" stroke="#000000" stroke-width="0.22">X2</text>
<text transform="translate(1097,422)" x="-0.32 6.68 12.68" y="0" font-size="9" fill="#000000" stroke="#000000" stroke-width="0.22">GND</text>
<text transform="translate(1095,221.5) scale(0.9,1)" x="-0.27 10.84" y="0" font-size="17" fill="#2c2c2c">X1</text>
<text transform="translate(1096,273)" x="-0.36 6.64 13.64 20.64 27.64 33.64 40.64" y="0" font-size="10" fill="#000000" stroke="#000000" stroke-width="0.22">CRYSTAL</text>
<text transform="translate(1096.6,285)" x="-0.35 5.65 11.65 18.65 25.65 31.65" y="0" font-size="10" fill="#7c7c7c" stroke="#7c7c7c" stroke-width="0.22">&lt;TEXT&gt;</text>
<text transform="translate(1066.3,331.5) scale(0.9,1)" x="-0.60 11.62" y="0" font-size="17" fill="#2c2c2c">C2</text>
<text transform="translate(1066.5,345.5)" x="-0.27 5.73 11.73 17.73" y="0" font-size="10" fill="#000000" stroke="#000000" stroke-width="0.22">30pF</text>
<text transform="translate(1067.6,358)" x="-0.35 5.65 11.65 18.65 25.65 31.65" y="0" font-size="10" fill="#7c7c7c" stroke="#7c7c7c" stroke-width="0.22">&lt;TEXT&gt;</text>
<text transform="translate(1167.5,331.5) scale(0.9,1)" x="-0.60 11.62" y="0" font-size="17" fill="#2c2c2c">C3</text>
<text transform="translate(1167.5,345.5)" x="-0.27 5.73 11.73 17.73" y="0" font-size="10" fill="#000000" stroke="#000000" stroke-width="0.22">30pF</text>
<text transform="translate(1168.6,358)" x="-0.35 5.65 11.65 18.65 25.65 31.65" y="0" font-size="10" fill="#7c7c7c" stroke="#7c7c7c" stroke-width="0.22">&lt;TEXT&gt;</text>
<text transform="translate(139.4,455)" x="-5.66" y="0" font-size="10" fill="#000000" stroke="#000000" stroke-width="0.22">1</text>
<text transform="translate(139.4,480)" x="-5.65" y="0" font-size="10" fill="#000000" stroke="#000000" stroke-width="0.22">2</text>
<text transform="translate(238.8,467)" x="-0.27" y="0" font-size="10" fill="#000000" stroke="#000000" stroke-width="0.22">3</text>
<text transform="translate(151.8,441) scale(0.9,1)" x="-0.92 11.30 21.30 31.30 35.75" y="0" font-size="17" fill="#2c2c2c">U24:A</text>
<text transform="translate(151.8,506)" x="-0.36 5.64 11.64 17.64" y="0" font-size="10" fill="#000000" stroke="#000000" stroke-width="0.22">7400</text>
<text transform="translate(152.6,517.8)" x="-0.35 5.65 11.65 18.65 25.65 31.65" y="0" font-size="10" fill="#7c7c7c" stroke="#7c7c7c" stroke-width="0.22">&lt;TEXT&gt;</text>
<text transform="translate(139.4,543)" x="-5.79" y="0" font-size="10" fill="#000000" stroke="#000000" stroke-width="0.22">4</text>
<text transform="translate(139.4,568)" x="-5.71" y="0" font-size="10" fill="#000000" stroke="#000000" stroke-width="0.22">5</text>
<text transform="translate(238.8,556)" x="-0.36" y="0" font-size="10" fill="#000000" stroke="#000000" stroke-width="0.22">6</text>
<text transform="translate(151.8,529) scale(0.9,1)" x="-0.92 11.30 21.30 31.30 35.75" y="0" font-size="17" fill="#2c2c2c">U24:B</text>
<text transform="translate(151.8,593.5)" x="-0.36 5.64 11.64 17.64" y="0" font-size="10" fill="#000000" stroke="#000000" stroke-width="0.22">7400</text>
<text transform="translate(152.6,605.3)" x="-0.35 5.65 11.65 18.65 25.65 31.65" y="0" font-size="10" fill="#7c7c7c" stroke="#7c7c7c" stroke-width="0.22">&lt;TEXT&gt;</text>
<text transform="translate(18.6,461)" x="-15.68 -6.68" y="0" font-size="10" fill="#000000" stroke="#000000" stroke-width="0.22">WR</text>
<text transform="translate(19.4,517)" x="-21.65 -14.65 -8.65 -5.65" y="0" font-size="10" fill="#000000" stroke="#000000" stroke-width="0.22">P2.7</text>
<text transform="translate(18.6,574)" x="-13.67 -6.67" y="0" font-size="10" fill="#000000" stroke="#000000" stroke-width="0.22">RD</text>
<text transform="translate(434.5,391) scale(0.9,1)" x="-0.92 11.30 21.30" y="0" font-size="17" fill="#2c2c2c">U26</text>
<text transform="translate(434.6,619)" x="-0.01 6.99 13.99 20.99 26.99 32.99 38.99" y="0" font-size="10" fill="#000000" stroke="#000000" stroke-width="0.22">ADC0808</text>
<text transform="translate(421.3,404)" x="-11.69 -5.69" y="0" font-size="10" fill="#000000" stroke="#000000" stroke-width="0.22">26</text>
<text transform="translate(441.8,410)" x="-0.65 2.35 9.35" y="0" font-size="10" fill="#000000" stroke="#000000" stroke-width="0.22">IN0</text>
<text transform="translate(371.3,410)" x="-15.73 -12.73 -5.73" y="0" font-size="10" fill="#000000" stroke="#000000" stroke-width="0.22">IN0</text>
<text transform="translate(421.3,417)" x="-11.65 -5.65" y="0" font-size="10" fill="#000000" stroke="#000000" stroke-width="0.22">27</text>
<text transform="translate(441.8,423)" x="-0.65 2.35 9.35" y="0" font-size="10" fill="#000000" stroke="#000000" stroke-width="0.22">IN1</text>
<text transform="translate(371.3,423)" x="-15.66 -12.66 -5.66" y="0" font-size="10" fill="#000000" stroke="#000000" stroke-width="0.22">IN1</text>
<text transform="translate(421.3,430)" x="-11.70 -5.70" y="0" font-size="10" fill="#000000" stroke="#000000" stroke-width="0.22">28</text>
<text transform="translate(441.8,436)" x="-0.65 2.35 9.35" y="0" font-size="10" fill="#000000" stroke="#000000" stroke-width="0.22">IN2</text>
<text transform="translate(421.3,442)" x="-5.66" y="0" font-size="10" fill="#000000" stroke="#000000" stroke-width="0.22">1</text>
<text transform="translate(441.8,448)" x="-0.65 2.35 9.35" y="0" font-size="10" fill="#000000" stroke="#000000" stroke-width="0.22">IN3</text>
<text transform="translate(421.3,455)" x="-5.65" y="0" font-size="10" fill="#000000" stroke="#000000" stroke-width="0.22">2</text>
<text transform="translate(441.8,461)" x="-0.65 2.35 9.35" y="0" font-size="10" fill="#000000" stroke="#000000" stroke-width="0.22">IN4</text>
<text transform="translate(421.3,467)" x="-5.69" y="0" font-size="10" fill="#000000" stroke="#000000" stroke-width="0.22">3</text>
<text transform="translate(441.8,473)" x="-0.65 2.35 9.35" y="0" font-size="10" fill="#000000" stroke="#000000" stroke-width="0.22">IN5</text>
<text transform="translate(421.3,480)" x="-5.79" y="0" font-size="10" fill="#000000" stroke="#000000" stroke-width="0.22">4</text>
<text transform="translate(441.8,486)" x="-0.65 2.35 9.35" y="0" font-size="10" fill="#000000" stroke="#000000" stroke-width="0.22">IN6</text>
<text transform="translate(421.3,493)" x="-5.71" y="0" font-size="10" fill="#000000" stroke="#000000" stroke-width="0.22">5</text>
<text transform="translate(441.8,499)" x="-0.65 2.35 9.35" y="0" font-size="10" fill="#000000" stroke="#000000" stroke-width="0.22">IN7</text>
<text transform="translate(421.3,518)" x="-11.71 -5.71" y="0" font-size="10" fill="#000000" stroke="#000000" stroke-width="0.22">25</text>
<text transform="translate(441.8,524)" x="-0.01 6.99 13.99 20.99 23.99" y="0" font-size="10" fill="#000000" stroke="#000000" stroke-width="0.22">ADD A</text>
<text transform="translate(371.3,524)" x="-13.73 -5.73" y="0" font-size="10" fill="#000000" stroke="#000000" stroke-width="0.22">Q0</text>
<text transform="translate(421.3,530)" x="-11.79 -5.79" y="0" font-size="10" fill="#000000" stroke="#000000" stroke-width="0.22">24</text>
<text transform="translate(441.8,536)" x="-0.01 6.99 13.99 20.99 23.99" y="0" font-size="10" fill="#000000" stroke="#000000" stroke-width="0.22">ADD B</text>
<text transform="translate(371.3,536)" x="-13.66 -5.66" y="0" font-size="10" fill="#000000" stroke="#000000" stroke-width="0.22">Q1</text>
<text transform="translate(421.3,543)" x="-11.69 -5.69" y="0" font-size="10" fill="#000000" stroke="#000000" stroke-width="0.22">23</text>
<text transform="translate(441.8,549)" x="-0.01 6.99 13.99 20.99 23.99" y="0" font-size="10" fill="#000000" stroke="#000000" stroke-width="0.22">ADD C</text>
<text transform="translate(371.3,549)" x="-13.65 -5.65" y="0" font-size="10" fill="#000000" stroke="#000000" stroke-width="0.22">Q2</text>
<text transform="translate(421.3,556)" x="-11.65 -5.65" y="0" font-size="10" fill="#000000" stroke="#000000" stroke-width="0.22">22</text>
<text transform="translate(441.8,562)" x="-0.01 6.99 12.99" y="0" font-size="10" fill="#000000" stroke="#000000" stroke-width="0.22">ALE</text>
<text transform="translate(421.3,581)" x="-11.65 -5.65" y="0" font-size="10" fill="#000000" stroke="#000000" stroke-width="0.22">12</text>
<text transform="translate(441.8,587)" x="-0.03 6.97 13.97 20.97 26.97 29.97 35.97" y="0" font-size="10" fill="#000000" stroke="#000000" stroke-width="0.22">VREF(+)</text>
<text transform="translate(421.3,593)" x="-11.69 -5.69" y="0" font-size="10" fill="#000000" stroke="#000000" stroke-width="0.22">16</text>
<text transform="translate(441.8,599)" x="-0.03 6.97 13.97 20.97 26.97 29.97 32.97" y="0" font-size="10" fill="#000000" stroke="#000000" stroke-width="0.22">VREF(-)</text>
<text transform="translate(369.6,595.5) rotate(-90)" x="-0.34 5.66 11.66" y="0" font-size="10" fill="#000000" stroke="#000000" stroke-width="0.22">+5V</text>
<text transform="translate(573.2,404)" x="-0.53 5.47" y="0" font-size="10" fill="#000000" stroke="#000000" stroke-width="0.22">10</text>
<text transform="translate(553.8,410)" x="-34.92 -27.92 -21.92 -13.92 -6.92" y="0" font-size="10" fill="#000000" stroke="#000000" stroke-width="0.22">CLOCK</text>
<text transform="translate(625.2,410)" x="-0.36 6.64 12.64" y="0" font-size="10" fill="#000000" stroke="#000000" stroke-width="0.22">CLK</text>
<text transform="translate(573.2,417)" x="-0.36" y="0" font-size="10" fill="#000000" stroke="#000000" stroke-width="0.22">6</text>
<text transform="translate(553.8,423)" x="-32.84 -25.84 -19.84 -12.84 -5.84" y="0" font-size="10" fill="#000000" stroke="#000000" stroke-width="0.22">START</text>
<text transform="translate(573.2,442)" x="-0.36" y="0" font-size="10" fill="#000000" stroke="#000000" stroke-width="0.22">7</text>
<text transform="translate(553.8,448)" x="-21.73 -14.73 -6.73" y="0" font-size="10" fill="#000000" stroke="#000000" stroke-width="0.22">EOC</text>
<text transform="translate(573.2,467)" x="-0.35 5.65" y="0" font-size="10" fill="#000000" stroke="#000000" stroke-width="0.22">21</text>
<text transform="translate(553.8,473)" x="-26.66 -18.66 -11.66 -5.66" y="0" font-size="10" fill="#000000" stroke="#000000" stroke-width="0.22">OUT1</text>
<text transform="translate(625.2,473)" x="-0.57 6.43 12.43 15.43" y="0" font-size="10" fill="#000000" stroke="#000000" stroke-width="0.22">P0.0</text>
<text transform="translate(573.2,480)" x="-0.35 5.65" y="0" font-size="10" fill="#000000" stroke="#000000" stroke-width="0.22">20</text>
<text transform="translate(553.8,486)" x="-26.65 -18.65 -11.65 -5.65" y="0" font-size="10" fill="#000000" stroke="#000000" stroke-width="0.22">OUT2</text>
<text transform="translate(625.2,486)" x="-0.57 6.43 12.43 15.43" y="0" font-size="10" fill="#000000" stroke="#000000" stroke-width="0.22">P0.1</text>
<text transform="translate(573.2,493)" x="-0.53 5.47" y="0" font-size="10" fill="#000000" stroke="#000000" stroke-width="0.22">19</text>
<text transform="translate(553.8,499)" x="-26.69 -18.69 -11.69 -5.69" y="0" font-size="10" fill="#000000" stroke="#000000" stroke-width="0.22">OUT3</text>
<text transform="translate(625.2,499)" x="-0.57 6.43 12.43 15.43" y="0" font-size="10" fill="#000000" stroke="#000000" stroke-width="0.22">P0.2</text>
<text transform="translate(573.2,505)" x="-0.53 5.47" y="0" font-size="10" fill="#000000" stroke="#000000" stroke-width="0.22">18</text>
<text transform="translate(553.8,511)" x="-26.79 -18.79 -11.79 -5.79" y="0" font-size="10" fill="#000000" stroke="#000000" stroke-width="0.22">OUT4</text>
<text transform="translate(625.2,511)" x="-0.57 6.43 12.43 15.43" y="0" font-size="10" fill="#000000" stroke="#000000" stroke-width="0.22">P0.3</text>
<text transform="translate(573.2,518)" x="-0.30" y="0" font-size="10" fill="#000000" stroke="#000000" stroke-width="0.22">8</text>
<text transform="translate(553.8,524)" x="-26.71 -18.71 -11.71 -5.71" y="0" font-size="10" fill="#000000" stroke="#000000" stroke-width="0.22">OUT5</text>
<text transform="translate(625.2,524)" x="-0.57 6.43 12.43 15.43" y="0" font-size="10" fill="#000000" stroke="#000000" stroke-width="0.22">P0.4</text>
<text transform="translate(573.2,530)" x="-0.53 5.47" y="0" font-size="10" fill="#000000" stroke="#000000" stroke-width="0.22">15</text>
<text transform="translate(553.8,536)" x="-26.69 -18.69 -11.69 -5.69" y="0" font-size="10" fill="#000000" stroke="#000000" stroke-width="0.22">OUT6</text>
<text transform="translate(625.2,536)" x="-0.57 6.43 12.43 15.43" y="0" font-size="10" fill="#000000" stroke="#000000" stroke-width="0.22">P0.5</text>
<text transform="translate(573.2,543)" x="-0.53 5.47" y="0" font-size="10" fill="#000000" stroke="#000000" stroke-width="0.22">14</text>
<text transform="translate(553.8,549)" x="-26.65 -18.65 -11.65 -5.65" y="0" font-size="10" fill="#000000" stroke="#000000" stroke-width="0.22">OUT7</text>
<text transform="translate(625.2,549)" x="-0.57 6.43 12.43 15.43" y="0" font-size="10" fill="#000000" stroke="#000000" stroke-width="0.22">P0.6</text>
<text transform="translate(573.2,556)" x="-0.53 5.47" y="0" font-size="10" fill="#000000" stroke="#000000" stroke-width="0.22">17</text>
<text transform="translate(553.8,562)" x="-26.70 -18.70 -11.70 -5.70" y="0" font-size="10" fill="#000000" stroke="#000000" stroke-width="0.22">OUT8</text>
<text transform="translate(625.2,562)" x="-0.57 6.43 12.43 15.43" y="0" font-size="10" fill="#000000" stroke="#000000" stroke-width="0.22">P0.7</text>
<text transform="translate(573.2,593)" x="-0.33" y="0" font-size="10" fill="#000000" stroke="#000000" stroke-width="0.22">9</text>
<text transform="translate(553.8,599)" x="-14.70 -6.70" y="0" font-size="10" fill="#000000" stroke="#000000" stroke-width="0.22">OE</text>
<text transform="translate(826,448)" x="-0.57 6.43 12.43 15.43" y="0" font-size="10" fill="#000000" stroke="#000000" stroke-width="0.22">P3.2</text>
<text transform="translate(667.6,430)" x="-5.66" y="0" font-size="10" fill="#000000" stroke="#000000" stroke-width="0.22">1</text>
<text transform="translate(667.6,455)" x="-5.65" y="0" font-size="10" fill="#000000" stroke="#000000" stroke-width="0.22">2</text>
<text transform="translate(768.8,442)" x="-0.27" y="0" font-size="10" fill="#000000" stroke="#000000" stroke-width="0.22">3</text>
<text transform="translate(679.6,416) scale(0.9,1)" x="-0.92 11.30 21.30" y="0" font-size="17" fill="#2c2c2c">U25</text>
<text transform="translate(679.6,480)" x="-0.36 5.64 11.64 17.64" y="0" font-size="10" fill="#000000" stroke="#000000" stroke-width="0.22">7400</text>
<text transform="translate(680.6,492.5)" x="-0.35 5.65 11.65 18.65 25.65 31.65" y="0" font-size="10" fill="#7c7c7c" stroke="#7c7c7c" stroke-width="0.22">&lt;TEXT&gt;</text>
<text transform="translate(1028.3,485.5) scale(0.9,1)" x="-0.92 11.30 21.30" y="0" font-size="17" fill="#2c2c2c">U27</text>
<text transform="translate(1028.2,600)" x="-0.36 5.64 11.64 17.64 24.64 30.64" y="0" font-size="10" fill="#000000" stroke="#000000" stroke-width="0.22">74LS74</text>
<text transform="translate(1028.8,612.5)" x="-0.35 5.65 11.65 18.65 25.65 31.65" y="0" font-size="10" fill="#7c7c7c" stroke="#7c7c7c" stroke-width="0.22">&lt;TEXT&gt;</text>
<text transform="translate(1097,517)" x="-0.36 6.64 12.64" y="0" font-size="10" fill="#000000" stroke="#000000" stroke-width="0.22">CLK</text>
<text transform="translate(881.4,543)" x="-19.70 -12.70 -6.70" y="0" font-size="10" fill="#000000" stroke="#000000" stroke-width="0.22">ALE</text>
<text transform="translate(932.6,511)" x="-0.35" y="0" font-size="10" fill="#000000" stroke="#000000" stroke-width="0.22">2</text>
<text transform="translate(932.6,537)" x="-0.27" y="0" font-size="10" fill="#000000" stroke="#000000" stroke-width="0.22">3</text>
<text transform="translate(1039.6,511)" x="-0.28" y="0" font-size="10" fill="#000000" stroke="#000000" stroke-width="0.22">5</text>
<text transform="translate(1039.6,562)" x="-0.36" y="0" font-size="10" fill="#000000" stroke="#000000" stroke-width="0.22">6</text>
<text transform="translate(958.8,517)" x="-0.57" y="0" font-size="10" fill="#000000" stroke="#000000" stroke-width="0.22">D</text>
<text transform="translate(958.8,543)" x="-0.36 6.64 12.64" y="0" font-size="10" fill="#000000" stroke="#000000" stroke-width="0.22">CLK</text>
<text transform="translate(1020.8,517)" x="-7.67" y="0" font-size="10" fill="#000000" stroke="#000000" stroke-width="0.22">Q</text>
<text transform="translate(1020.8,568)" x="-7.67" y="0" font-size="10" fill="#000000" stroke="#000000" stroke-width="0.22">Q</text>
<text transform="translate(987,487.6) rotate(-90)" x="-0.16" y="0" font-size="10" fill="#000000" stroke="#000000" stroke-width="0.22">4</text>
<text transform="translate(987,595.8) rotate(-90)" x="-0.53" y="0" font-size="10" fill="#000000" stroke="#000000" stroke-width="0.22">1</text>
<text transform="translate(993.4,513.2) rotate(-90)" x="-0.32" y="0" font-size="10" fill="#000000" stroke="#000000" stroke-width="0.22">S</text>
<text transform="translate(993.4,569.6) rotate(-90)" x="-0.57" y="0" font-size="10" fill="#000000" stroke="#000000" stroke-width="0.22">R</text>
</g>
<g shape-rendering="crispEdges">
<rect x="1175" y="0" width="1" height="624" fill="#6e6e6e"/>
<rect x="1176" y="0" width="4" height="624" fill="#f0f0f0"/>
<rect x="0" y="623" width="1176" height="1" fill="#5e5e5e"/>
</g>
</svg>
</body></html>
